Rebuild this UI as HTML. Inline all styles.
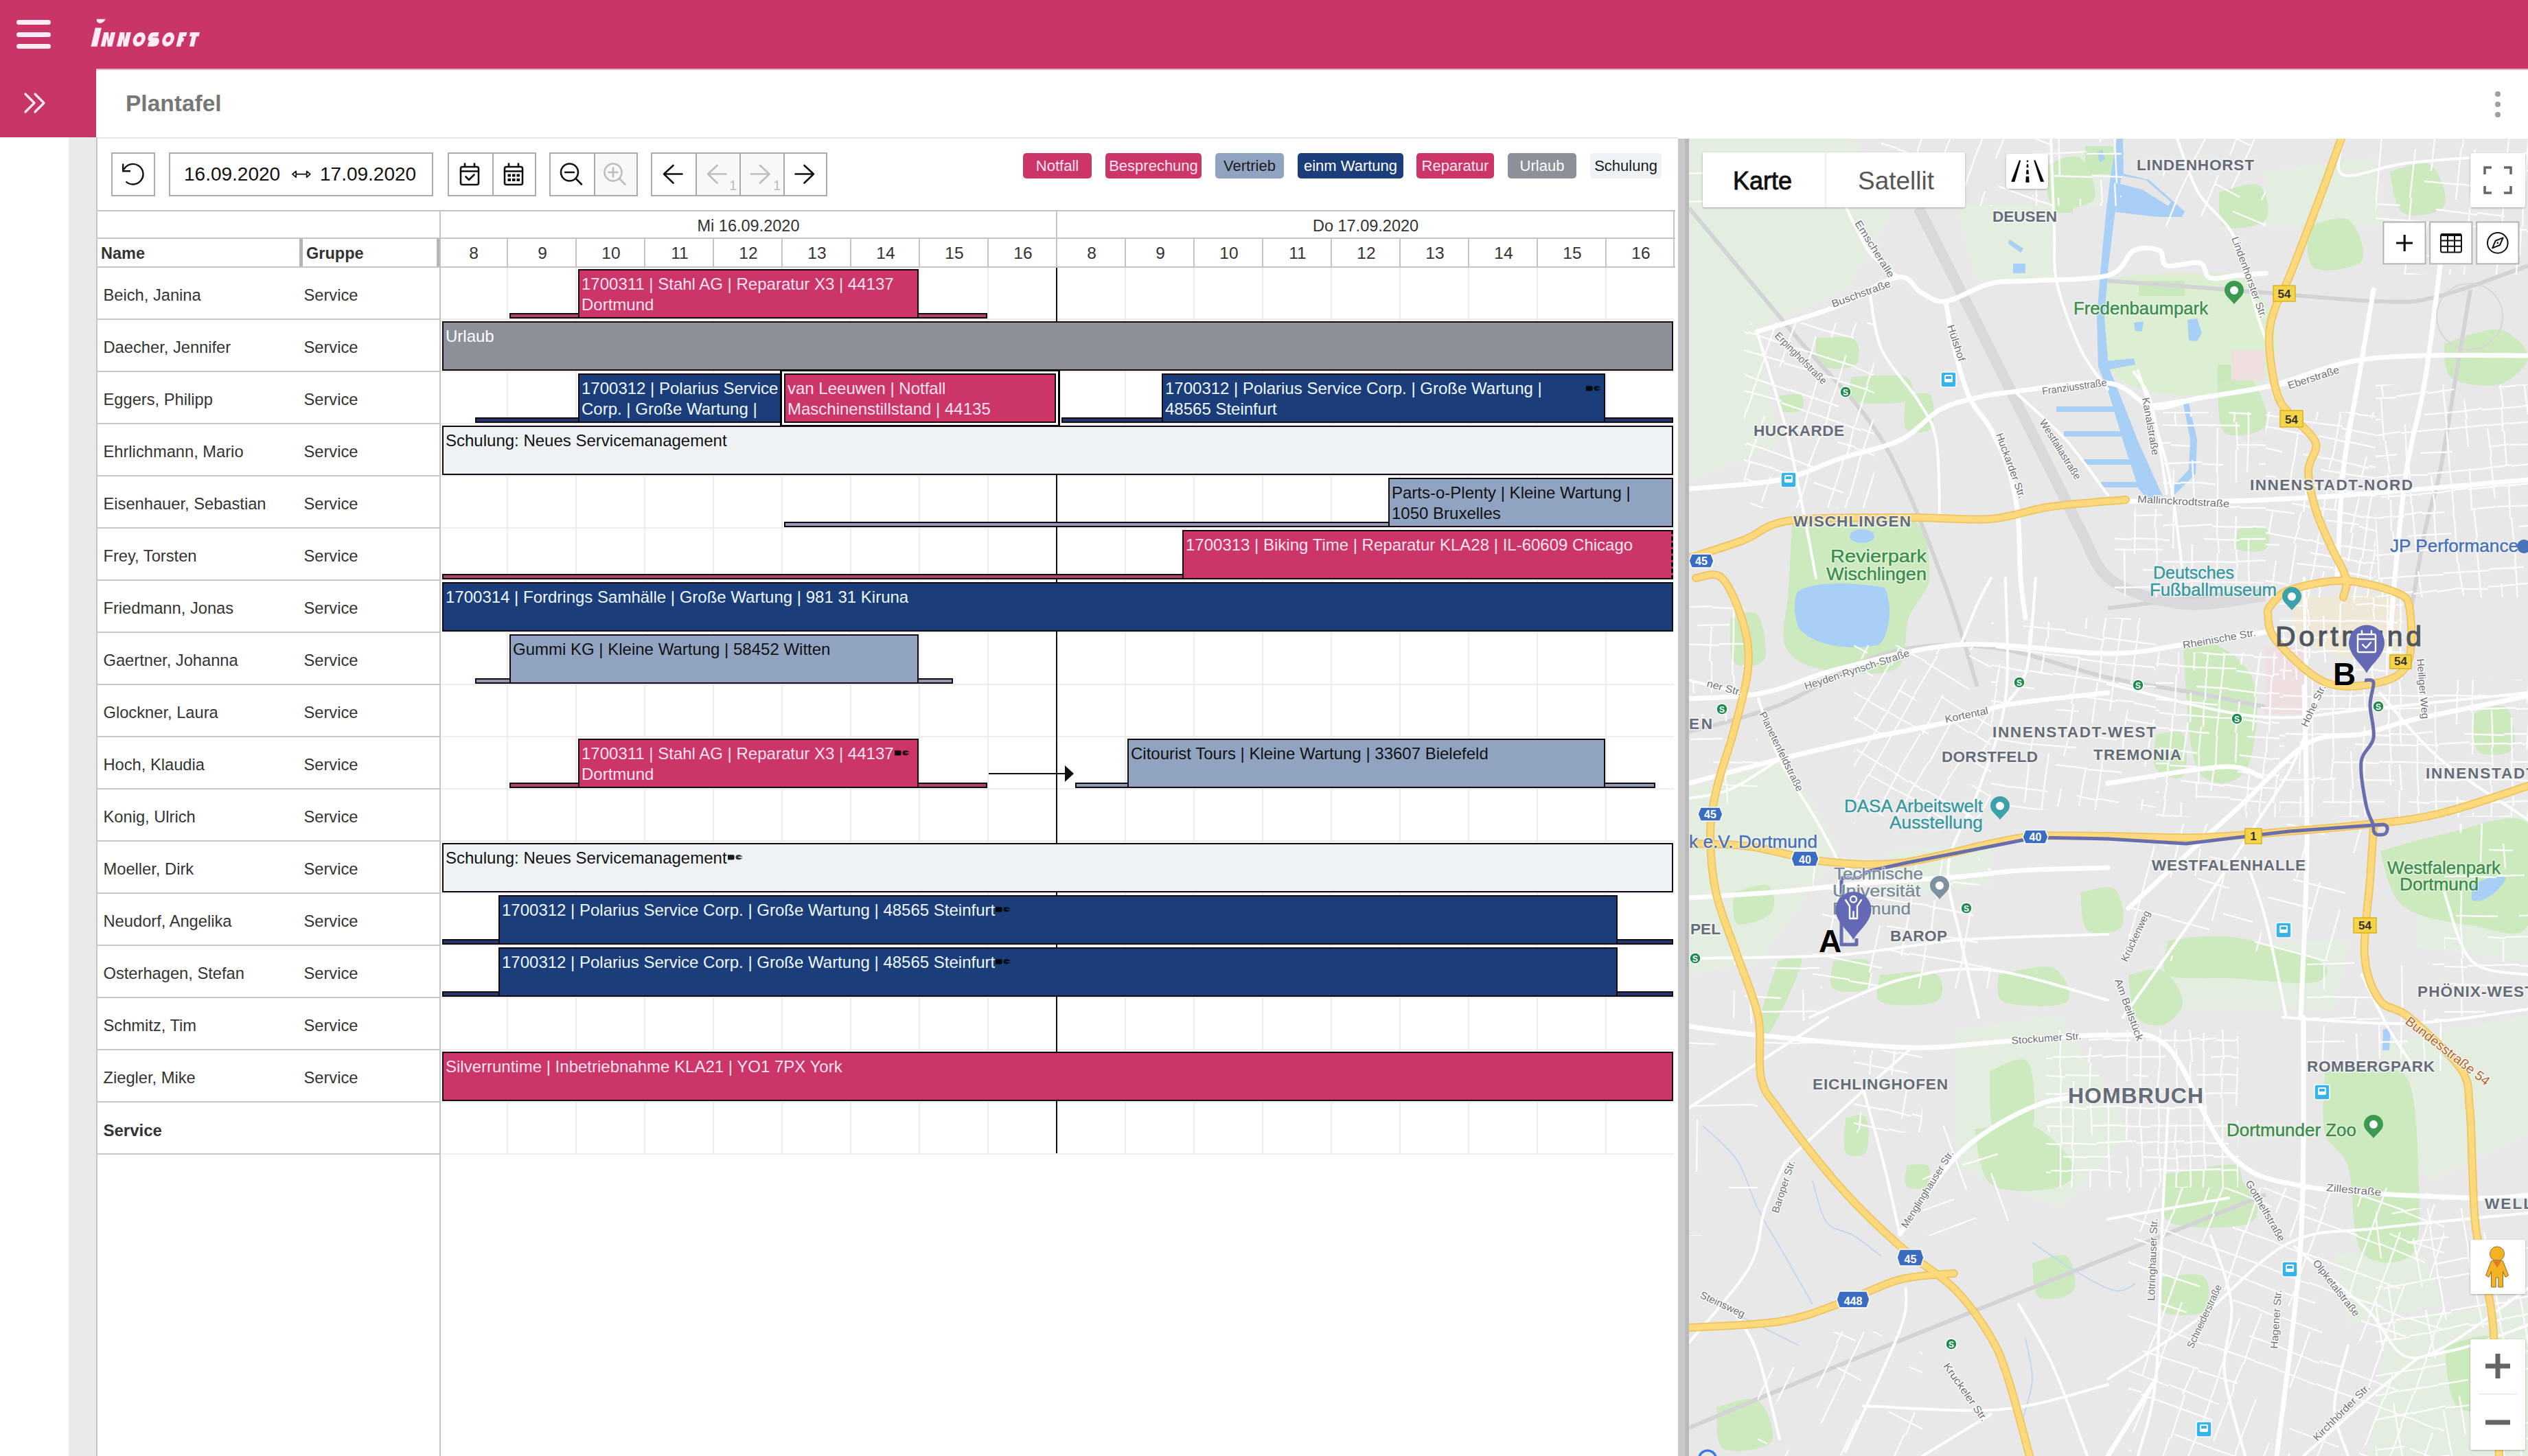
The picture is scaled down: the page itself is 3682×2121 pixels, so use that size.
<!DOCTYPE html><html><head><meta charset="utf-8"><style>
html,body{margin:0;padding:0;}
body{width:3682px;height:2121px;position:relative;overflow:hidden;background:#fff;font-family:"Liberation Sans",sans-serif;}
.t{position:absolute;white-space:nowrap;}
.r{position:absolute;box-sizing:border-box;}
</style></head><body>
<div class="r" style="left:0.0px;top:0.0px;width:3682.0px;height:100.0px;background:#c93567;"></div>
<div class="r" style="left:140.0px;top:100.0px;width:3542.0px;height:2.0px;background:#eab3c6;"></div>
<div class="r" style="left:24.0px;top:29.0px;width:50.0px;height:7.0px;background:#ffeaf6;border-radius:3.5px;"></div>
<div class="r" style="left:24.0px;top:46.5px;width:50.0px;height:7.0px;background:#ffeaf6;border-radius:3.5px;"></div>
<div class="r" style="left:24.0px;top:64.0px;width:50.0px;height:7.0px;background:#ffeaf6;border-radius:3.5px;"></div>
<svg style="position:absolute;left:0;top:0" width="320" height="100" viewBox="0 0 320 100"><g fill="#ffeaf6" fill-rule="evenodd" transform="translate(15.9 0) skewX(-13.3)"><path d="M131.5 27.8 H144.2 A6.35 6.1 0 0 1 131.5 27.8 Z"/><path d="M132.5 40.6 H141.6 V67.7 H132.5 Z"/><path d="M146.7 67.7 L146.7 47.0 L153.29999999999998 47.0 L156.8 58.7 L156.8 47.0 L163.4 47.0 L163.4 67.7 L156.8 67.7 L153.29999999999998 56.0 L153.29999999999998 67.7 Z"/><path d="M169.9 67.7 L169.9 47.0 L176.5 47.0 L179.6 58.7 L179.6 47.0 L186.2 47.0 L186.2 67.7 L179.6 67.7 L176.5 56.0 L176.5 67.7 Z"/><path d="M191.40000000000003 57.35 A8.950000000000003 10.350000000000001 0 1 0 209.3 57.35 A8.950000000000003 10.350000000000001 0 1 0 191.40000000000003 57.35 Z M196.95000000000002 57.35 A3.4 4.2 0 1 0 203.75000000000003 57.35 A3.4 4.2 0 1 0 196.95000000000002 57.35 Z"/><path d="M234.2 57.35 A8.550000000000011 10.350000000000001 0 1 0 251.3 57.35 A8.550000000000011 10.350000000000001 0 1 0 234.2 57.35 Z M239.35 57.35 A3.4 4.2 0 1 0 246.15 57.35 A3.4 4.2 0 1 0 239.35 57.35 Z"/><path d="M256.7 67.7 V47.0 H267.6 V53.0 H263.3 V55.2 H265.5 V60.8 H263.3 V67.7 Z"/><path d="M272.4 47.0 H286.2 V53.0 H282.6 V67.7 H276 V53.0 H272.4 Z"/></g><g transform="translate(15.9 0) skewX(-13.3)"><path d="M226.8 50.2 H219 Q215.9 50.2 215.9 54.5 Q215.9 57.8 219.5 57.8 H223.5 Q227 57.8 227 61.5 Q227 64.4 223 64.4 H214.9" fill="none" stroke="#ffeaf6" stroke-width="6.6" stroke-linejoin="round"/></g></svg>
<div class="r" style="left:0.0px;top:100.0px;width:140.0px;height:100.0px;background:#c93567;"></div>
<svg style="position:absolute;left:30px;top:130px" width="40" height="40" viewBox="0 0 40 40"><path d="M7 7 L20 20 L7 33 M21 7 L34 20 L21 33" fill="none" stroke="#ffeaf6" stroke-width="3.2" stroke-linecap="round" stroke-linejoin="round"/></svg>
<div class="t" style="left:183.0px;top:133.6px;font-size:33.5px;line-height:33.5px;color:#777777;font-weight:700;">Plantafel</div>
<div class="r" style="left:3634px;top:133px;width:8px;height:8px;border-radius:4px;background:#a0a0a0"></div>
<div class="r" style="left:3634px;top:148px;width:8px;height:8px;border-radius:4px;background:#a0a0a0"></div>
<div class="r" style="left:3634px;top:163px;width:8px;height:8px;border-radius:4px;background:#a0a0a0"></div>
<div class="r" style="left:140.0px;top:200.0px;width:2304.0px;height:2.0px;background:#e6e6e6;"></div>
<div class="r" style="left:100.0px;top:200.0px;width:40.0px;height:1921.0px;background:#e9e9e9;"></div>
<div class="r" style="left:140.0px;top:200.0px;width:2.0px;height:1921.0px;background:#c6c6c6;"></div>
<div class="r" style="left:162.0px;top:222.0px;width:64.0px;height:64.0px;background:#fff;border:2px solid #ababab;"></div>
<svg style="position:absolute;left:162px;top:222px" width="64" height="64" viewBox="162 222 64 64"><path d="M180.5 247 A14.8 14.8 0 1 1 183.5 264.5" fill="none" stroke="#111" stroke-width="2.4"/><path d="M179.2 238.5 V249.2 H190" fill="none" stroke="#111" stroke-width="2.4"/></svg>
<div class="r" style="left:246.0px;top:222.0px;width:385.0px;height:64.0px;background:#fff;border:2px solid #ababab;"></div>
<div class="t" style="left:268.0px;top:240.3px;font-size:28px;line-height:28px;color:#111;font-weight:400;">16.09.2020</div>
<svg style="position:absolute;left:420px;top:244px" width="40" height="24" viewBox="420 244 40 24"><path d="M431.2 253.7 H446.7" stroke="#111" stroke-width="1.8" fill="none"/><path d="M431.2 249.3 L426 253.7 L431.2 258.3 Z M446.7 249.3 L451.8 253.7 L446.7 258.3 Z" fill="none" stroke="#111" stroke-width="1.7" stroke-linejoin="round"/></svg>
<div class="t" style="left:466.0px;top:240.3px;font-size:28px;line-height:28px;color:#111;font-weight:400;">17.09.2020</div>
<div class="r" style="left:652.0px;top:222.0px;width:67.0px;height:64.0px;background:#fff;border:2px solid #ababab;"></div>
<div class="r" style="left:717.0px;top:222.0px;width:64.0px;height:64.0px;background:#fff;border:2px solid #ababab;"></div>
<div class="r" style="left:800.0px;top:222.0px;width:67.0px;height:64.0px;background:#fff;border:2px solid #ababab;"></div>
<div class="r" style="left:865.0px;top:222.0px;width:64.0px;height:64.0px;background:#f8f8f8;border:2px solid #ababab;"></div>
<div class="r" style="left:948.0px;top:222.0px;width:67.0px;height:64.0px;background:#fff;border:2px solid #ababab;"></div>
<div class="r" style="left:1013.0px;top:222.0px;width:66.0px;height:64.0px;background:#f8f8f8;border:2px solid #ababab;"></div>
<div class="r" style="left:1077.0px;top:222.0px;width:66.0px;height:64.0px;background:#f8f8f8;border:2px solid #ababab;"></div>
<div class="r" style="left:1141.0px;top:222.0px;width:64.0px;height:64.0px;background:#fff;border:2px solid #ababab;"></div>

<svg style="position:absolute;left:640px;top:222px" width="580" height="64" viewBox="640 222 580 64">
<g fill="none" stroke="#111" stroke-width="2.6" stroke-linecap="round" stroke-linejoin="round">
<rect x="671" y="243" width="26" height="26" rx="2.5"/><path d="M671 249.5 H697 M677 238.5 V243 M691 238.5 V243"/>
<path d="M678.5 257.5 L683 262 L690.5 254.5"/>
<rect x="735" y="243" width="26" height="26" rx="2.5"/><path d="M735 249.5 H761 M741 238.5 V243 M755 238.5 V243"/>
<circle cx="829.5" cy="251" r="12.5"/><path d="M838.5 260 L847 268.5 M823 251 H836"/>
<path d="M993.5 253.5 H967 M980.5 241 L967 253.5 L980.5 266.5"/>
<path d="M1158.5 253.5 H1185 M1171.5 241 L1185 253.5 L1171.5 266.5"/>
</g>
<g fill="#111"><rect x="739.5" y="253.5" width="4.5" height="4"/><rect x="746" y="253.5" width="4.5" height="4"/><rect x="752.5" y="253.5" width="4.5" height="4"/>
<rect x="739.5" y="260" width="4.5" height="4"/><rect x="746" y="260" width="4.5" height="4"/><rect x="752.5" y="260" width="4.5" height="4"/></g>
<g fill="none" stroke="#bdbdbd" stroke-width="2.6" stroke-linecap="round" stroke-linejoin="round">
<circle cx="893" cy="251" r="12.5"/><path d="M902 260 L910.5 268.5 M886.5 251 H899.5 M893 244.5 V257.5"/>
<path d="M1057.5 253.5 H1031 M1044.5 241 L1031 253.5 L1044.5 266.5"/>
<path d="M1094 253.5 H1120.5 M1107 241 L1120.5 253.5 L1107 266.5"/>
</g>
</svg>
<div class="t" style="left:1062.0px;top:260.1px;font-size:20px;line-height:20px;color:#bdbdbd;font-weight:400;">1</div>
<div class="t" style="left:1126.0px;top:260.1px;font-size:20px;line-height:20px;color:#bdbdbd;font-weight:400;">1</div>
<div class="t" style="left:1490px;top:222.5px;width:100px;height:37px;border-radius:5px;background:#cb3567;color:#fde3f1;font-size:22px;line-height:37px;text-align:center;">Notfall</div>
<div class="t" style="left:1610px;top:222.5px;width:140px;height:37px;border-radius:5px;background:#cb3567;color:#fde3f1;font-size:22px;line-height:37px;text-align:center;">Besprechung</div>
<div class="t" style="left:1770px;top:222.5px;width:100px;height:37px;border-radius:5px;background:#90a4c1;color:#1a1a1a;font-size:22px;line-height:37px;text-align:center;">Vertrieb</div>
<div class="t" style="left:1890px;top:222.5px;width:154px;height:37px;border-radius:5px;background:#1b3e7b;color:#fff;font-size:22px;line-height:37px;text-align:center;">einm Wartung</div>
<div class="t" style="left:2063px;top:222.5px;width:113px;height:37px;border-radius:5px;background:#cb3567;color:#fde3f1;font-size:22px;line-height:37px;text-align:center;">Reparatur</div>
<div class="t" style="left:2196px;top:222.5px;width:100px;height:37px;border-radius:5px;background:#8c9099;color:#fff;font-size:22px;line-height:37px;text-align:center;">Urlaub</div>
<div class="t" style="left:2316px;top:222.5px;width:104px;height:37px;border-radius:5px;background:#eff2f5;color:#1a1a1a;font-size:22px;line-height:37px;text-align:center;">Schulung</div>
<div class="r" style="left:142.0px;top:306.0px;width:2298.0px;height:2.0px;background:#c4c4c4;"></div>
<div class="r" style="left:142.0px;top:346.0px;width:2298.0px;height:2.0px;background:#c4c4c4;"></div>
<div class="r" style="left:142.0px;top:388.0px;width:2298.0px;height:2.0px;background:#c4c4c4;"></div>
<div class="r" style="left:436.0px;top:348.0px;width:5.0px;height:40.0px;background:#b5b5b5;"></div>
<div class="r" style="left:636.0px;top:348.0px;width:4.0px;height:40.0px;background:#b5b5b5;"></div>
<div class="r" style="left:640.0px;top:306.0px;width:2.0px;height:1815.0px;background:#c4c4c4;"></div>
<div class="t" style="left:147.0px;top:358.1px;font-size:23.5px;line-height:23.5px;color:#333;font-weight:700;">Name</div>
<div class="t" style="left:446.0px;top:358.1px;font-size:23.5px;line-height:23.5px;color:#333;font-weight:700;">Gruppe</div>
<div class="t" style="left:642px;top:317.6px;width:896px;text-align:center;font-size:23.5px;line-height:23.5px;color:#333">Mi 16.09.2020</div>
<div class="t" style="left:1540px;top:317.6px;width:898px;text-align:center;font-size:23.5px;line-height:23.5px;color:#333">Do 17.09.2020</div>
<div class="r" style="left:1538.0px;top:308.0px;width:2.0px;height:40.0px;background:#c4c4c4;"></div>
<div class="t" style="left:640.0px;top:357.0px;width:100.0px;text-align:center;font-size:24.5px;line-height:24.5px;color:#333">8</div>
<div class="r" style="left:738.0px;top:348.0px;width:2.0px;height:40.0px;background:#c4c4c4;"></div>
<div class="t" style="left:740.0px;top:357.0px;width:100.0px;text-align:center;font-size:24.5px;line-height:24.5px;color:#333">9</div>
<div class="r" style="left:838.0px;top:348.0px;width:2.0px;height:40.0px;background:#c4c4c4;"></div>
<div class="t" style="left:840.0px;top:357.0px;width:100.0px;text-align:center;font-size:24.5px;line-height:24.5px;color:#333">10</div>
<div class="r" style="left:938.0px;top:348.0px;width:2.0px;height:40.0px;background:#c4c4c4;"></div>
<div class="t" style="left:940.0px;top:357.0px;width:100.0px;text-align:center;font-size:24.5px;line-height:24.5px;color:#333">11</div>
<div class="r" style="left:1038.0px;top:348.0px;width:2.0px;height:40.0px;background:#c4c4c4;"></div>
<div class="t" style="left:1040.0px;top:357.0px;width:100.0px;text-align:center;font-size:24.5px;line-height:24.5px;color:#333">12</div>
<div class="r" style="left:1138.0px;top:348.0px;width:2.0px;height:40.0px;background:#c4c4c4;"></div>
<div class="t" style="left:1140.0px;top:357.0px;width:100.0px;text-align:center;font-size:24.5px;line-height:24.5px;color:#333">13</div>
<div class="r" style="left:1238.0px;top:348.0px;width:2.0px;height:40.0px;background:#c4c4c4;"></div>
<div class="t" style="left:1240.0px;top:357.0px;width:100.0px;text-align:center;font-size:24.5px;line-height:24.5px;color:#333">14</div>
<div class="r" style="left:1338.0px;top:348.0px;width:2.0px;height:40.0px;background:#c4c4c4;"></div>
<div class="t" style="left:1340.0px;top:357.0px;width:100.0px;text-align:center;font-size:24.5px;line-height:24.5px;color:#333">15</div>
<div class="r" style="left:1438.0px;top:348.0px;width:2.0px;height:40.0px;background:#c4c4c4;"></div>
<div class="t" style="left:1440.0px;top:357.0px;width:100.0px;text-align:center;font-size:24.5px;line-height:24.5px;color:#333">16</div>
<div class="r" style="left:1538.0px;top:348.0px;width:2.0px;height:40.0px;background:#c4c4c4;"></div>
<div class="t" style="left:1540.0px;top:357.0px;width:100.0px;text-align:center;font-size:24.5px;line-height:24.5px;color:#333">8</div>
<div class="r" style="left:1638.0px;top:348.0px;width:2.0px;height:40.0px;background:#c4c4c4;"></div>
<div class="t" style="left:1640.0px;top:357.0px;width:100.0px;text-align:center;font-size:24.5px;line-height:24.5px;color:#333">9</div>
<div class="r" style="left:1738.0px;top:348.0px;width:2.0px;height:40.0px;background:#c4c4c4;"></div>
<div class="t" style="left:1740.0px;top:357.0px;width:100.0px;text-align:center;font-size:24.5px;line-height:24.5px;color:#333">10</div>
<div class="r" style="left:1838.0px;top:348.0px;width:2.0px;height:40.0px;background:#c4c4c4;"></div>
<div class="t" style="left:1840.0px;top:357.0px;width:100.0px;text-align:center;font-size:24.5px;line-height:24.5px;color:#333">11</div>
<div class="r" style="left:1938.0px;top:348.0px;width:2.0px;height:40.0px;background:#c4c4c4;"></div>
<div class="t" style="left:1940.0px;top:357.0px;width:100.0px;text-align:center;font-size:24.5px;line-height:24.5px;color:#333">12</div>
<div class="r" style="left:2038.0px;top:348.0px;width:2.0px;height:40.0px;background:#c4c4c4;"></div>
<div class="t" style="left:2040.0px;top:357.0px;width:100.0px;text-align:center;font-size:24.5px;line-height:24.5px;color:#333">13</div>
<div class="r" style="left:2138.0px;top:348.0px;width:2.0px;height:40.0px;background:#c4c4c4;"></div>
<div class="t" style="left:2140.0px;top:357.0px;width:100.0px;text-align:center;font-size:24.5px;line-height:24.5px;color:#333">14</div>
<div class="r" style="left:2238.0px;top:348.0px;width:2.0px;height:40.0px;background:#c4c4c4;"></div>
<div class="t" style="left:2240.0px;top:357.0px;width:100.0px;text-align:center;font-size:24.5px;line-height:24.5px;color:#333">15</div>
<div class="r" style="left:2338.0px;top:348.0px;width:2.0px;height:40.0px;background:#c4c4c4;"></div>
<div class="t" style="left:2340.0px;top:357.0px;width:100.0px;text-align:center;font-size:24.5px;line-height:24.5px;color:#333">16</div>
<div class="r" style="left:2437.0px;top:306.0px;width:2.0px;height:84.0px;background:#c4c4c4;"></div>
<div class="r" style="left:738.0px;top:390.0px;width:2.0px;height:1292.0px;background:#ececec;"></div>
<div class="r" style="left:838.0px;top:390.0px;width:2.0px;height:1292.0px;background:#ececec;"></div>
<div class="r" style="left:938.0px;top:390.0px;width:2.0px;height:1292.0px;background:#ececec;"></div>
<div class="r" style="left:1038.0px;top:390.0px;width:2.0px;height:1292.0px;background:#ececec;"></div>
<div class="r" style="left:1138.0px;top:390.0px;width:2.0px;height:1292.0px;background:#ececec;"></div>
<div class="r" style="left:1238.0px;top:390.0px;width:2.0px;height:1292.0px;background:#ececec;"></div>
<div class="r" style="left:1338.0px;top:390.0px;width:2.0px;height:1292.0px;background:#ececec;"></div>
<div class="r" style="left:1438.0px;top:390.0px;width:2.0px;height:1292.0px;background:#ececec;"></div>
<div class="r" style="left:1538.0px;top:390.0px;width:2.0px;height:1292.0px;background:#ececec;"></div>
<div class="r" style="left:1638.0px;top:390.0px;width:2.0px;height:1292.0px;background:#ececec;"></div>
<div class="r" style="left:1738.0px;top:390.0px;width:2.0px;height:1292.0px;background:#ececec;"></div>
<div class="r" style="left:1838.0px;top:390.0px;width:2.0px;height:1292.0px;background:#ececec;"></div>
<div class="r" style="left:1938.0px;top:390.0px;width:2.0px;height:1292.0px;background:#ececec;"></div>
<div class="r" style="left:2038.0px;top:390.0px;width:2.0px;height:1292.0px;background:#ececec;"></div>
<div class="r" style="left:2138.0px;top:390.0px;width:2.0px;height:1292.0px;background:#ececec;"></div>
<div class="r" style="left:2238.0px;top:390.0px;width:2.0px;height:1292.0px;background:#ececec;"></div>
<div class="r" style="left:2338.0px;top:390.0px;width:2.0px;height:1292.0px;background:#ececec;"></div>
<div class="r" style="left:142.0px;top:464.0px;width:498.0px;height:2.0px;background:#c8c8c8;"></div>
<div class="r" style="left:642.0px;top:464.0px;width:1796.0px;height:2.0px;background:#ececec;"></div>
<div class="r" style="left:142.0px;top:540.0px;width:498.0px;height:2.0px;background:#c8c8c8;"></div>
<div class="r" style="left:642.0px;top:540.0px;width:1796.0px;height:2.0px;background:#ececec;"></div>
<div class="r" style="left:142.0px;top:616.0px;width:498.0px;height:2.0px;background:#c8c8c8;"></div>
<div class="r" style="left:642.0px;top:616.0px;width:1796.0px;height:2.0px;background:#ececec;"></div>
<div class="r" style="left:142.0px;top:692.0px;width:498.0px;height:2.0px;background:#c8c8c8;"></div>
<div class="r" style="left:642.0px;top:692.0px;width:1796.0px;height:2.0px;background:#ececec;"></div>
<div class="r" style="left:142.0px;top:768.0px;width:498.0px;height:2.0px;background:#c8c8c8;"></div>
<div class="r" style="left:642.0px;top:768.0px;width:1796.0px;height:2.0px;background:#ececec;"></div>
<div class="r" style="left:142.0px;top:844.0px;width:498.0px;height:2.0px;background:#c8c8c8;"></div>
<div class="r" style="left:642.0px;top:844.0px;width:1796.0px;height:2.0px;background:#ececec;"></div>
<div class="r" style="left:142.0px;top:920.0px;width:498.0px;height:2.0px;background:#c8c8c8;"></div>
<div class="r" style="left:642.0px;top:920.0px;width:1796.0px;height:2.0px;background:#ececec;"></div>
<div class="r" style="left:142.0px;top:996.0px;width:498.0px;height:2.0px;background:#c8c8c8;"></div>
<div class="r" style="left:642.0px;top:996.0px;width:1796.0px;height:2.0px;background:#ececec;"></div>
<div class="r" style="left:142.0px;top:1072.0px;width:498.0px;height:2.0px;background:#c8c8c8;"></div>
<div class="r" style="left:642.0px;top:1072.0px;width:1796.0px;height:2.0px;background:#ececec;"></div>
<div class="r" style="left:142.0px;top:1148.0px;width:498.0px;height:2.0px;background:#c8c8c8;"></div>
<div class="r" style="left:642.0px;top:1148.0px;width:1796.0px;height:2.0px;background:#ececec;"></div>
<div class="r" style="left:142.0px;top:1224.0px;width:498.0px;height:2.0px;background:#c8c8c8;"></div>
<div class="r" style="left:642.0px;top:1224.0px;width:1796.0px;height:2.0px;background:#ececec;"></div>
<div class="r" style="left:142.0px;top:1300.0px;width:498.0px;height:2.0px;background:#c8c8c8;"></div>
<div class="r" style="left:642.0px;top:1300.0px;width:1796.0px;height:2.0px;background:#ececec;"></div>
<div class="r" style="left:142.0px;top:1376.0px;width:498.0px;height:2.0px;background:#c8c8c8;"></div>
<div class="r" style="left:642.0px;top:1376.0px;width:1796.0px;height:2.0px;background:#ececec;"></div>
<div class="r" style="left:142.0px;top:1452.0px;width:498.0px;height:2.0px;background:#c8c8c8;"></div>
<div class="r" style="left:642.0px;top:1452.0px;width:1796.0px;height:2.0px;background:#ececec;"></div>
<div class="r" style="left:142.0px;top:1528.0px;width:498.0px;height:2.0px;background:#c8c8c8;"></div>
<div class="r" style="left:642.0px;top:1528.0px;width:1796.0px;height:2.0px;background:#ececec;"></div>
<div class="r" style="left:142.0px;top:1604.0px;width:498.0px;height:2.0px;background:#c8c8c8;"></div>
<div class="r" style="left:642.0px;top:1604.0px;width:1796.0px;height:2.0px;background:#ececec;"></div>
<div class="r" style="left:142.0px;top:1680.0px;width:498.0px;height:2.0px;background:#c8c8c8;"></div>
<div class="r" style="left:642.0px;top:1680.0px;width:1796.0px;height:2.0px;background:#ececec;"></div>
<div class="r" style="left:1538.0px;top:390.0px;width:2.0px;height:1290.0px;background:#111;"></div>
<div class="t" style="left:150.5px;top:418.9px;font-size:23.7px;line-height:23.7px;color:#333;font-weight:400;">Beich, Janina</div>
<div class="t" style="left:442.5px;top:418.9px;font-size:23.7px;line-height:23.7px;color:#333;font-weight:400;">Service</div>
<div class="t" style="left:150.5px;top:494.9px;font-size:23.7px;line-height:23.7px;color:#333;font-weight:400;">Daecher, Jennifer</div>
<div class="t" style="left:442.5px;top:494.9px;font-size:23.7px;line-height:23.7px;color:#333;font-weight:400;">Service</div>
<div class="t" style="left:150.5px;top:570.9px;font-size:23.7px;line-height:23.7px;color:#333;font-weight:400;">Eggers, Philipp</div>
<div class="t" style="left:442.5px;top:570.9px;font-size:23.7px;line-height:23.7px;color:#333;font-weight:400;">Service</div>
<div class="t" style="left:150.5px;top:646.9px;font-size:23.7px;line-height:23.7px;color:#333;font-weight:400;">Ehrlichmann, Mario</div>
<div class="t" style="left:442.5px;top:646.9px;font-size:23.7px;line-height:23.7px;color:#333;font-weight:400;">Service</div>
<div class="t" style="left:150.5px;top:722.9px;font-size:23.7px;line-height:23.7px;color:#333;font-weight:400;">Eisenhauer, Sebastian</div>
<div class="t" style="left:442.5px;top:722.9px;font-size:23.7px;line-height:23.7px;color:#333;font-weight:400;">Service</div>
<div class="t" style="left:150.5px;top:798.9px;font-size:23.7px;line-height:23.7px;color:#333;font-weight:400;">Frey, Torsten</div>
<div class="t" style="left:442.5px;top:798.9px;font-size:23.7px;line-height:23.7px;color:#333;font-weight:400;">Service</div>
<div class="t" style="left:150.5px;top:874.9px;font-size:23.7px;line-height:23.7px;color:#333;font-weight:400;">Friedmann, Jonas</div>
<div class="t" style="left:442.5px;top:874.9px;font-size:23.7px;line-height:23.7px;color:#333;font-weight:400;">Service</div>
<div class="t" style="left:150.5px;top:950.9px;font-size:23.7px;line-height:23.7px;color:#333;font-weight:400;">Gaertner, Johanna</div>
<div class="t" style="left:442.5px;top:950.9px;font-size:23.7px;line-height:23.7px;color:#333;font-weight:400;">Service</div>
<div class="t" style="left:150.5px;top:1026.9px;font-size:23.7px;line-height:23.7px;color:#333;font-weight:400;">Glockner, Laura</div>
<div class="t" style="left:442.5px;top:1026.9px;font-size:23.7px;line-height:23.7px;color:#333;font-weight:400;">Service</div>
<div class="t" style="left:150.5px;top:1102.9px;font-size:23.7px;line-height:23.7px;color:#333;font-weight:400;">Hoch, Klaudia</div>
<div class="t" style="left:442.5px;top:1102.9px;font-size:23.7px;line-height:23.7px;color:#333;font-weight:400;">Service</div>
<div class="t" style="left:150.5px;top:1178.9px;font-size:23.7px;line-height:23.7px;color:#333;font-weight:400;">Konig, Ulrich</div>
<div class="t" style="left:442.5px;top:1178.9px;font-size:23.7px;line-height:23.7px;color:#333;font-weight:400;">Service</div>
<div class="t" style="left:150.5px;top:1254.9px;font-size:23.7px;line-height:23.7px;color:#333;font-weight:400;">Moeller, Dirk</div>
<div class="t" style="left:442.5px;top:1254.9px;font-size:23.7px;line-height:23.7px;color:#333;font-weight:400;">Service</div>
<div class="t" style="left:150.5px;top:1330.9px;font-size:23.7px;line-height:23.7px;color:#333;font-weight:400;">Neudorf, Angelika</div>
<div class="t" style="left:442.5px;top:1330.9px;font-size:23.7px;line-height:23.7px;color:#333;font-weight:400;">Service</div>
<div class="t" style="left:150.5px;top:1406.9px;font-size:23.7px;line-height:23.7px;color:#333;font-weight:400;">Osterhagen, Stefan</div>
<div class="t" style="left:442.5px;top:1406.9px;font-size:23.7px;line-height:23.7px;color:#333;font-weight:400;">Service</div>
<div class="t" style="left:150.5px;top:1482.9px;font-size:23.7px;line-height:23.7px;color:#333;font-weight:400;">Schmitz, Tim</div>
<div class="t" style="left:442.5px;top:1482.9px;font-size:23.7px;line-height:23.7px;color:#333;font-weight:400;">Service</div>
<div class="t" style="left:150.5px;top:1558.9px;font-size:23.7px;line-height:23.7px;color:#333;font-weight:400;">Ziegler, Mike</div>
<div class="t" style="left:442.5px;top:1558.9px;font-size:23.7px;line-height:23.7px;color:#333;font-weight:400;">Service</div>
<div class="t" style="left:150.5px;top:1634.7px;font-size:24px;line-height:24px;color:#333;font-weight:700;">Service</div>
<div class="r" style="left:742.0px;top:456px;width:696.0px;height:8px;background:#a84865;border:2px solid #160a10;"></div>
<div class="r" style="left:842.0px;top:392px;width:496.0px;height:72px;background:#cb3567;border:2px solid #160a10;overflow:hidden;">
<div class="t" style="left:3px;top:8.2px;font-size:24px;line-height:24px;color:#fde3f1">1700311 | Stahl AG | Reparatur X3 | 44137</div>
<div class="t" style="left:3px;top:37.9px;font-size:24px;line-height:24px;color:#fde3f1">Dortmund</div>
</div>
<div class="r" style="left:644.0px;top:468px;width:1793.0px;height:72px;background:#8c9099;border:2px solid #160a10;overflow:hidden;">
<div class="t" style="left:3px;top:8.2px;font-size:24px;line-height:24px;color:#fff">Urlaub</div>
</div>
<div class="r" style="left:692.0px;top:608px;width:446.0px;height:8px;background:#1f3a6b;border:2px solid #160a10;"></div>
<div class="r" style="left:842.0px;top:544px;width:296.0px;height:72px;background:#1b3e7b;border:2px solid #160a10;overflow:hidden;">
<div class="t" style="left:3px;top:8.2px;font-size:24px;line-height:24px;color:#f0f8ff">1700312 | Polarius Service</div>
<div class="t" style="left:3px;top:37.9px;font-size:24px;line-height:24px;color:#f0f8ff">Corp. | Große Wartung |</div>
</div>
<div class="r" style="left:1546.0px;top:608px;width:891.0px;height:8px;background:#1f3a6b;border:2px solid #160a10;"></div>
<div class="r" style="left:1692.0px;top:544px;width:646.0px;height:72px;background:#1b3e7b;border:2px solid #160a10;overflow:hidden;">
<div class="t" style="left:3px;top:8.2px;font-size:24px;line-height:24px;color:#f0f8ff">1700312 | Polarius Service Corp. | Große Wartung |</div>
<div class="t" style="left:3px;top:37.9px;font-size:24px;line-height:24px;color:#f0f8ff">48565 Steinfurt</div>
</div>
<div style="position:absolute;left:2309px;top:561.5px;line-height:0"><svg width="23" height="8" viewBox="0 0 23 8" style="vertical-align:4.8px;margin-left:1px"><path d="M0 0.2 H8 Q9.6 0.2 9.6 2 V5.6 Q9.6 7.4 8 7.4 H0 Z" fill="#000" fill-opacity="0.9"/><path d="M11.3 3.7 Q11.8 0.3 15 0.3 H17.5 L21.8 2.6 L17.6 3.1 Q16.2 2.4 15.3 3.7 Q16.2 5 17.6 4.4 L21.8 5 L17.5 7.2 H15 Q11.8 7.2 11.3 3.7 Z" fill="#000" fill-opacity="0.78"/></svg></div>
<div class="r" style="left:1136px;top:538px;width:408px;height:84px;border:3.5px solid #000;background:#fff"></div>
<div class="r" style="left:1142.0px;top:544px;width:396.0px;height:72px;background:#cb3567;border:2px solid #160a10;overflow:hidden;">
<div class="t" style="left:3px;top:8.2px;font-size:24px;line-height:24px;color:#fde3f1">van Leeuwen | Notfall</div>
<div class="t" style="left:3px;top:37.9px;font-size:24px;line-height:24px;color:#fde3f1">Maschinenstillstand | 44135</div>
</div>
<div class="r" style="left:644.0px;top:620px;width:1793.0px;height:72px;background:#eff2f5;border:2px solid #160a10;overflow:hidden;">
<div class="t" style="left:3px;top:8.2px;font-size:24px;line-height:24px;color:#111">Schulung: Neues Servicemanagement</div>
</div>
<div class="r" style="left:1142.0px;top:760px;width:1295.0px;height:8px;background:#8d9bb4;border:2px solid #160a10;"></div>
<div class="r" style="left:2022.0px;top:696px;width:415.0px;height:72px;background:#90a4c1;border:2px solid #160a10;overflow:hidden;">
<div class="t" style="left:3px;top:8.2px;font-size:24px;line-height:24px;color:#111">Parts-o-Plenty | Kleine Wartung |</div>
<div class="t" style="left:3px;top:37.9px;font-size:24px;line-height:24px;color:#111">1050 Bruxelles</div>
</div>
<div class="r" style="left:644.0px;top:836px;width:1144.0px;height:8px;background:#a84865;border:2px solid #160a10;"></div>
<div class="r" style="left:1722.0px;top:772px;width:715.0px;height:72px;background:#cb3567;border:2px solid #160a10;overflow:hidden;border-right:3px dashed #000;">
<div class="t" style="left:3px;top:8.2px;font-size:24px;line-height:24px;color:#fde3f1">1700313 | Biking Time | Reparatur KLA28 | IL-60609 Chicago</div>
</div>
<div class="r" style="left:644.0px;top:848px;width:1793.0px;height:72px;background:#1b3e7b;border:2px solid #160a10;overflow:hidden;">
<div class="t" style="left:3px;top:8.2px;font-size:24px;line-height:24px;color:#f0f8ff">1700314 | Fordrings Samhälle | Große Wartung | 981 31 Kiruna</div>
</div>
<div class="r" style="left:692.0px;top:988px;width:696.0px;height:8px;background:#8d9bb4;border:2px solid #160a10;"></div>
<div class="r" style="left:742.0px;top:924px;width:596.0px;height:72px;background:#90a4c1;border:2px solid #160a10;overflow:hidden;">
<div class="t" style="left:3px;top:8.2px;font-size:24px;line-height:24px;color:#111">Gummi KG | Kleine Wartung | 58452 Witten</div>
</div>
<div class="r" style="left:742.0px;top:1140px;width:696.0px;height:8px;background:#a84865;border:2px solid #160a10;"></div>
<div class="r" style="left:842.0px;top:1076px;width:496.0px;height:72px;background:#cb3567;border:2px solid #160a10;overflow:hidden;">
<div class="t" style="left:3px;top:8.2px;font-size:24px;line-height:24px;color:#fde3f1">1700311 | Stahl AG | Reparatur X3 | 44137<svg width="23" height="8" viewBox="0 0 23 8" style="vertical-align:4.8px;margin-left:1px"><path d="M0 0.2 H8 Q9.6 0.2 9.6 2 V5.6 Q9.6 7.4 8 7.4 H0 Z" fill="#000" fill-opacity="0.9"/><path d="M11.3 3.7 Q11.8 0.3 15 0.3 H17.5 L21.8 2.6 L17.6 3.1 Q16.2 2.4 15.3 3.7 Q16.2 5 17.6 4.4 L21.8 5 L17.5 7.2 H15 Q11.8 7.2 11.3 3.7 Z" fill="#000" fill-opacity="0.78"/></svg></div>
<div class="t" style="left:3px;top:37.9px;font-size:24px;line-height:24px;color:#fde3f1">Dortmund</div>
</div>
<div class="r" style="left:1566.0px;top:1140px;width:845.0px;height:8px;background:#8d9bb4;border:2px solid #160a10;"></div>
<div class="r" style="left:1642.0px;top:1076px;width:696.0px;height:72px;background:#90a4c1;border:2px solid #160a10;overflow:hidden;">
<div class="t" style="left:3px;top:8.2px;font-size:24px;line-height:24px;color:#111">Citourist Tours | Kleine Wartung | 33607 Bielefeld</div>
</div>
<div class="r" style="left:1440.0px;top:1126.0px;width:116.0px;height:2.0px;background:#111;"></div>
<svg style="position:absolute;left:1550px;top:1114px" width="16" height="26"><path d="M1 1 L14 13 L1 25 Z" fill="#111"/></svg>
<div class="r" style="left:644.0px;top:1228px;width:1793.0px;height:72px;background:#eff2f5;border:2px solid #160a10;overflow:hidden;">
<div class="t" style="left:3px;top:8.2px;font-size:24px;line-height:24px;color:#111">Schulung: Neues Servicemanagement<svg width="23" height="8" viewBox="0 0 23 8" style="vertical-align:4.8px;margin-left:1px"><path d="M0 0.2 H8 Q9.6 0.2 9.6 2 V5.6 Q9.6 7.4 8 7.4 H0 Z" fill="#000" fill-opacity="0.9"/><path d="M11.3 3.7 Q11.8 0.3 15 0.3 H17.5 L21.8 2.6 L17.6 3.1 Q16.2 2.4 15.3 3.7 Q16.2 5 17.6 4.4 L21.8 5 L17.5 7.2 H15 Q11.8 7.2 11.3 3.7 Z" fill="#000" fill-opacity="0.78"/></svg></div>
</div>
<div class="r" style="left:644.0px;top:1368px;width:1793.0px;height:8px;background:#1f3a6b;border:2px solid #160a10;"></div>
<div class="r" style="left:726.0px;top:1304px;width:1630.0px;height:72px;background:#1b3e7b;border:2px solid #160a10;overflow:hidden;">
<div class="t" style="left:3px;top:8.2px;font-size:24px;line-height:24px;color:#f0f8ff">1700312 | Polarius Service Corp. | Große Wartung | 48565 Steinfurt<svg width="23" height="8" viewBox="0 0 23 8" style="vertical-align:4.8px;margin-left:1px"><path d="M0 0.2 H8 Q9.6 0.2 9.6 2 V5.6 Q9.6 7.4 8 7.4 H0 Z" fill="#000" fill-opacity="0.9"/><path d="M11.3 3.7 Q11.8 0.3 15 0.3 H17.5 L21.8 2.6 L17.6 3.1 Q16.2 2.4 15.3 3.7 Q16.2 5 17.6 4.4 L21.8 5 L17.5 7.2 H15 Q11.8 7.2 11.3 3.7 Z" fill="#000" fill-opacity="0.78"/></svg></div>
</div>
<div class="r" style="left:644.0px;top:1444px;width:1793.0px;height:8px;background:#1f3a6b;border:2px solid #160a10;"></div>
<div class="r" style="left:726.0px;top:1380px;width:1630.0px;height:72px;background:#1b3e7b;border:2px solid #160a10;overflow:hidden;">
<div class="t" style="left:3px;top:8.2px;font-size:24px;line-height:24px;color:#f0f8ff">1700312 | Polarius Service Corp. | Große Wartung | 48565 Steinfurt<svg width="23" height="8" viewBox="0 0 23 8" style="vertical-align:4.8px;margin-left:1px"><path d="M0 0.2 H8 Q9.6 0.2 9.6 2 V5.6 Q9.6 7.4 8 7.4 H0 Z" fill="#000" fill-opacity="0.9"/><path d="M11.3 3.7 Q11.8 0.3 15 0.3 H17.5 L21.8 2.6 L17.6 3.1 Q16.2 2.4 15.3 3.7 Q16.2 5 17.6 4.4 L21.8 5 L17.5 7.2 H15 Q11.8 7.2 11.3 3.7 Z" fill="#000" fill-opacity="0.78"/></svg></div>
</div>
<div class="r" style="left:644.0px;top:1532px;width:1793.0px;height:72px;background:#cb3567;border:2px solid #160a10;overflow:hidden;">
<div class="t" style="left:3px;top:8.2px;font-size:24px;line-height:24px;color:#fde3f1">Silverruntime | Inbetriebnahme KLA21 | YO1 7PX York</div>
</div>
<div class="r" style="left:2444.0px;top:202.0px;width:10.0px;height:1919.0px;background:#c9c9c9;"></div>
<div class="r" style="left:2454.0px;top:202.0px;width:6.0px;height:1919.0px;background:#b9b9b9;"></div>
<svg style="position:absolute;left:2460px;top:202px" width="1222" height="1919" viewBox="2460 202 1222 1919">
<rect x="2460" y="202" width="1222" height="1919" fill="#e8e8e8"/>
<path d="M2460.0 202.0 L2700.0 202.0 L2760.0 300.0 L2690.0 420.0 L2560.0 480.0 L2590.0 650.0 L2460.0 700.0 Z" fill="#e3eee0"/>
<path d="M2460.0 1150.0 L2600.0 1100.0 L2680.0 1240.0 L2560.0 1400.0 L2460.0 1420.0 Z" fill="#e3eee0"/>
<path d="M2850.0 1500.0 L3000.0 1480.0 L3100.0 1650.0 L3000.0 1760.0 L2850.0 1700.0 Z" fill="#e3eee0"/>
<path d="M3150.0 1380.0 L3420.0 1370.0 L3400.0 1470.0 L3150.0 1470.0 Z" fill="#e3eee0"/>
<path d="M3520.0 1230.0 L3682.0 1180.0 L3682.0 1400.0 L3520.0 1380.0 Z" fill="#e3eee0"/>
<path d="M3470.0 1520.0 L3682.0 1480.0 L3682.0 1650.0 L3540.0 1720.0 L3470.0 1620.0 Z" fill="#e3eee0"/>
<path d="M3480.0 1920.0 L3682.0 1900.0 L3682.0 2121.0 L3450.0 2121.0 Z" fill="#e3eee0"/>
<path d="M2750.0 1240.0 L2900.0 1230.0 L2900.0 1290.0 L2760.0 1300.0 Z" fill="#e3eee0"/>
<path d="M2850.0 300.0 L2990.0 300.0 L2990.0 410.0 L2880.0 410.0 Z" fill="#e3eee0"/>
<path d="M3020.0 220.0 L3060.0 215.0 L3060.0 300.0 L3020.0 300.0 Z" fill="#e3eee0"/>
<path d="M3300.0 250.0 L3460.0 230.0 L3470.0 330.0 L3300.0 330.0 Z" fill="#e3eee0"/>
<path d="M2980.0 1560.0 L3060.0 1560.0 L3070.0 1640.0 L2990.0 1640.0 Z" fill="#e3eee0"/>
<path d="M3400.0 1830.0 L3520.0 1810.0 L3560.0 1900.0 L3420.0 1930.0 Z" fill="#e3eee0"/>
<path d="M3063.0 410.0 C3072.5 408.3 3097.2 402.0 3120.0 400.0 C3142.8 398.0 3176.3 397.7 3200.0 398.0 C3223.7 398.3 3245.3 395.0 3262.0 402.0 C3278.7 409.0 3291.0 423.7 3300.0 440.0 C3309.0 456.3 3317.7 480.0 3316.0 500.0 C3314.3 520.0 3304.3 547.5 3290.0 560.0 C3275.7 572.5 3256.7 573.3 3230.0 575.0 C3203.3 576.7 3155.8 575.8 3130.0 570.0 C3104.2 564.2 3086.2 556.7 3075.0 540.0 C3063.8 523.3 3065.0 491.7 3063.0 470.0 C3061.0 448.3 3063.0 420.0 3063.0 410.0" fill="#dcefd2"/>
<path d="M3115.0 409.0 L3182.0 409.0 L3182.0 431.0 L3115.0 431.0 Z" fill="#c9e8bb"/>
<path d="M3230.0 531.0 L3256.0 531.0 L3256.0 571.0 L3230.0 571.0 Z" fill="#c9e8bb"/>
<path d="M3037.0 213.0 L3078.0 213.0 L3078.0 254.0 L3037.0 254.0 Z" fill="#c9e8bb"/>
<path d="M2993.0 280.0 L3019.0 280.0 L3019.0 310.0 L2993.0 310.0 Z" fill="#c9e8bb"/>
<path d="M2610.0 760.0 C2625.0 759.3 2670.0 756.0 2700.0 756.0 C2730.0 756.0 2771.7 745.7 2790.0 760.0 C2808.3 774.3 2811.7 818.7 2810.0 842.0 C2808.3 865.3 2788.3 877.8 2780.0 900.0 C2771.7 922.2 2781.7 962.7 2760.0 975.0 C2738.3 987.3 2676.7 979.8 2650.0 974.0 C2623.3 968.2 2607.5 959.0 2600.0 940.0 C2592.5 921.0 2603.3 890.0 2605.0 860.0 C2606.7 830.0 2609.2 776.7 2610.0 760.0" fill="#cdeabf"/>
<path d="M2645.0 492.0 C2654.2 492.3 2690.5 487.3 2700.0 494.0 C2709.5 500.7 2710.3 525.7 2702.0 532.0 C2693.7 538.3 2659.5 538.7 2650.0 532.0 C2640.5 525.3 2645.8 498.7 2645.0 492.0" fill="#cdeabf"/>
<path d="M2697.0 549.0 C2710.2 549.0 2762.8 543.2 2776.0 549.0 C2789.2 554.8 2789.2 578.2 2776.0 584.0 C2762.8 589.8 2710.2 589.8 2697.0 584.0 C2683.8 578.2 2697.0 554.8 2697.0 549.0" fill="#cdeabf"/>
<path d="M2776.0 576.0 C2782.0 576.0 2806.0 568.0 2812.0 576.0 C2818.0 584.0 2818.0 616.0 2812.0 624.0 C2806.0 632.0 2782.0 632.0 2776.0 624.0 C2770.0 616.0 2776.0 584.0 2776.0 576.0" fill="#cdeabf"/>
<path d="M2592.0 576.0 C2597.2 576.0 2617.8 572.3 2623.0 576.0 C2628.2 579.7 2628.2 594.3 2623.0 598.0 C2617.8 601.7 2597.2 601.7 2592.0 598.0 C2586.8 594.3 2592.0 579.7 2592.0 576.0" fill="#cdeabf"/>
<path d="M3386.0 1561.0 C3400.0 1560.2 3449.3 1552.8 3470.0 1556.0 C3490.7 1559.2 3501.3 1556.0 3510.0 1580.0 C3518.7 1604.0 3521.2 1659.3 3522.0 1700.0 C3522.8 1740.7 3528.7 1803.3 3515.0 1824.0 C3501.3 1844.7 3455.8 1844.7 3440.0 1824.0 C3424.2 1803.3 3429.0 1729.0 3420.0 1700.0 C3411.0 1671.0 3391.7 1673.2 3386.0 1650.0 C3380.3 1626.8 3386.0 1575.8 3386.0 1561.0" fill="#cdeabf"/>
<path d="M3466.0 1240.0 C3481.7 1235.8 3524.0 1221.7 3560.0 1215.0 C3596.0 1208.3 3661.7 1177.8 3682.0 1200.0 C3702.3 1222.2 3695.7 1323.3 3682.0 1348.0 C3668.3 1372.7 3630.3 1352.7 3600.0 1348.0 C3569.7 1343.3 3522.3 1338.0 3500.0 1320.0 C3477.7 1302.0 3471.7 1253.3 3466.0 1240.0" fill="#cdeabf"/>
<path d="M3158.0 1370.0 C3173.3 1369.2 3213.3 1360.0 3250.0 1365.0 C3286.7 1370.0 3358.0 1389.0 3378.0 1400.0 C3398.0 1411.0 3391.3 1426.8 3370.0 1431.0 C3348.7 1435.2 3285.3 1426.8 3250.0 1425.0 C3214.7 1423.2 3173.3 1429.2 3158.0 1420.0 C3142.7 1410.8 3158.0 1378.3 3158.0 1370.0" fill="#cdeabf"/>
<path d="M3232.0 280.0 C3241.7 278.3 3278.7 263.3 3290.0 270.0 C3301.3 276.7 3308.3 310.0 3300.0 320.0 C3291.7 330.0 3251.3 336.7 3240.0 330.0 C3228.7 323.3 3233.3 288.3 3232.0 280.0" fill="#cdeabf"/>
<path d="M3200.0 950.0 C3206.7 950.0 3233.3 936.7 3240.0 950.0 C3246.7 963.3 3246.7 1016.7 3240.0 1030.0 C3233.3 1043.3 3206.7 1043.3 3200.0 1030.0 C3193.3 1016.7 3200.0 963.3 3200.0 950.0" fill="#cdeabf"/>
<path d="M2525.0 1300.0 C2533.3 1298.3 2565.8 1285.0 2575.0 1290.0 C2584.2 1295.0 2587.5 1320.8 2580.0 1330.0 C2572.5 1339.2 2539.2 1350.0 2530.0 1345.0 C2520.8 1340.0 2525.8 1307.5 2525.0 1300.0" fill="#cdeabf"/>
<path d="M2670.0 1400.0 C2678.3 1400.0 2711.7 1393.3 2720.0 1400.0 C2728.3 1406.7 2728.3 1433.3 2720.0 1440.0 C2711.7 1446.7 2678.3 1446.7 2670.0 1440.0 C2661.7 1433.3 2670.0 1406.7 2670.0 1400.0" fill="#cdeabf"/>
<path d="M2910.0 1420.0 C2923.3 1418.3 2973.3 1403.3 2990.0 1410.0 C3006.7 1416.7 3021.7 1451.7 3010.0 1460.0 C2998.3 1468.3 2936.7 1466.7 2920.0 1460.0 C2903.3 1453.3 2911.7 1426.7 2910.0 1420.0" fill="#cdeabf"/>
<path d="M3140.0 1070.0 C3146.7 1070.0 3173.3 1060.0 3180.0 1070.0 C3186.7 1080.0 3186.7 1121.7 3180.0 1130.0 C3173.3 1138.3 3146.7 1130.0 3140.0 1120.0 C3133.3 1110.0 3140.0 1078.3 3140.0 1070.0" fill="#cdeabf"/>
<path d="M2898.0 1560.0 C2906.7 1557.3 2939.2 1537.3 2950.0 1544.0 C2960.8 1550.7 2962.2 1582.7 2963.0 1600.0 C2963.8 1617.3 2964.7 1639.7 2955.0 1648.0 C2945.3 1656.3 2914.5 1664.7 2905.0 1650.0 C2895.5 1635.3 2899.2 1575.0 2898.0 1560.0" fill="#cdeabf"/>
<path d="M2688.0 1628.0 C2693.0 1628.0 2713.0 1619.7 2718.0 1628.0 C2723.0 1636.3 2723.0 1669.7 2718.0 1678.0 C2713.0 1686.3 2693.0 1686.3 2688.0 1678.0 C2683.0 1669.7 2688.0 1636.3 2688.0 1628.0" fill="#cdeabf"/>
<path d="M2777.0 1698.0 C2782.2 1698.0 2802.8 1693.0 2808.0 1698.0 C2813.2 1703.0 2813.2 1723.0 2808.0 1728.0 C2802.8 1733.0 2782.2 1733.0 2777.0 1728.0 C2771.8 1723.0 2777.0 1703.0 2777.0 1698.0" fill="#cdeabf"/>
<path d="M3215.0 1700.0 C3222.5 1700.0 3252.5 1691.7 3260.0 1700.0 C3267.5 1708.3 3267.5 1741.7 3260.0 1750.0 C3252.5 1758.3 3222.5 1758.3 3215.0 1750.0 C3207.5 1741.7 3215.0 1708.3 3215.0 1700.0" fill="#cdeabf"/>
<path d="M3150.0 1860.0 C3160.0 1860.0 3200.0 1851.7 3210.0 1860.0 C3220.0 1868.3 3220.0 1901.7 3210.0 1910.0 C3200.0 1918.3 3160.0 1918.3 3150.0 1910.0 C3140.0 1901.7 3150.0 1868.3 3150.0 1860.0" fill="#cdeabf"/>
<path d="M2998.0 280.0 C3000.7 280.0 3011.3 276.2 3014.0 280.0 C3016.7 283.8 3016.7 299.2 3014.0 303.0 C3011.3 306.8 3000.7 306.8 2998.0 303.0 C2995.3 299.2 2998.0 283.8 2998.0 280.0" fill="#cdeabf"/>
<path d="M3480.0 250.0 C3490.0 248.3 3526.7 231.7 3540.0 240.0 C3553.3 248.3 3566.7 288.3 3560.0 300.0 C3553.3 311.7 3513.3 318.3 3500.0 310.0 C3486.7 301.7 3483.3 260.0 3480.0 250.0" fill="#cdeabf"/>
<path d="M3260.0 770.0 C3266.7 770.0 3293.3 765.0 3300.0 770.0 C3306.7 775.0 3306.7 795.0 3300.0 800.0 C3293.3 805.0 3266.7 805.0 3260.0 800.0 C3253.3 795.0 3260.0 775.0 3260.0 770.0" fill="#cdeabf"/>
<path d="M3180.0 945.0 C3188.3 944.2 3212.5 930.8 3230.0 940.0 C3247.5 949.2 3278.3 969.3 3285.0 1000.0 C3291.7 1030.7 3284.2 1104.0 3270.0 1124.0 C3255.8 1144.0 3215.0 1149.8 3200.0 1120.0 C3185.0 1090.2 3183.3 974.2 3180.0 945.0" fill="#cdeabf"/>
<path d="M2738.0 1420.0 C2751.3 1419.7 2804.3 1411.5 2818.0 1418.0 C2831.7 1424.5 2833.0 1452.0 2820.0 1459.0 C2807.0 1466.0 2753.7 1466.5 2740.0 1460.0 C2726.3 1453.5 2738.3 1426.7 2738.0 1420.0" fill="#cdeabf"/>
<path d="M2590.0 1400.0 C2595.7 1400.0 2625.7 1383.3 2624.0 1400.0 C2622.3 1416.7 2590.8 1483.3 2580.0 1500.0 C2569.2 1516.7 2557.3 1516.7 2559.0 1500.0 C2560.7 1483.3 2584.8 1416.7 2590.0 1400.0" fill="#cdeabf"/>
<path d="M2876.0 1645.0 C2890.0 1644.2 2935.8 1630.8 2960.0 1640.0 C2984.2 1649.2 3016.0 1684.8 3021.0 1700.0 C3026.0 1715.2 3010.2 1726.8 2990.0 1731.0 C2969.8 1735.2 2919.0 1739.3 2900.0 1725.0 C2881.0 1710.7 2880.0 1658.3 2876.0 1645.0" fill="#cdeabf"/>
<path d="M3153.0 1710.0 C3167.5 1709.2 3218.0 1698.3 3240.0 1705.0 C3262.0 1711.7 3280.0 1736.8 3285.0 1750.0 C3290.0 1763.2 3290.8 1779.0 3270.0 1784.0 C3249.2 1789.0 3179.5 1792.3 3160.0 1780.0 C3140.5 1767.7 3154.2 1721.7 3153.0 1710.0" fill="#cdeabf"/>
<path d="M3100.0 1420.0 C3108.3 1419.0 3136.8 1407.3 3150.0 1414.0 C3163.2 1420.7 3179.0 1446.8 3179.0 1460.0 C3179.0 1473.2 3161.5 1489.7 3150.0 1493.0 C3138.5 1496.3 3118.3 1492.2 3110.0 1480.0 C3101.7 1467.8 3101.7 1430.0 3100.0 1420.0" fill="#cdeabf"/>
<path d="M2980.0 240.0 C2988.3 238.3 3018.3 221.7 3030.0 230.0 C3041.7 238.3 3056.7 278.3 3050.0 290.0 C3043.3 301.7 3001.7 308.3 2990.0 300.0 C2978.3 291.7 2981.7 250.0 2980.0 240.0" fill="#cdeabf"/>
<path d="M3360.0 330.0 C3370.0 328.3 3406.7 311.7 3420.0 320.0 C3433.3 328.3 3448.3 368.3 3440.0 380.0 C3431.7 391.7 3383.3 398.3 3370.0 390.0 C3356.7 381.7 3361.7 340.0 3360.0 330.0" fill="#cdeabf"/>
<path d="M3560.0 500.0 C3573.3 496.7 3619.7 476.7 3640.0 480.0 C3660.3 483.3 3682.0 506.7 3682.0 520.0 C3682.0 533.3 3658.7 555.0 3640.0 560.0 C3621.3 565.0 3583.3 560.0 3570.0 550.0 C3556.7 540.0 3561.7 508.3 3560.0 500.0" fill="#cdeabf"/>
<path d="M3230.0 560.0 C3238.3 559.2 3268.3 545.0 3280.0 555.0 C3291.7 565.0 3306.7 607.5 3300.0 620.0 C3293.3 632.5 3251.7 640.0 3240.0 630.0 C3228.3 620.0 3231.7 571.7 3230.0 560.0" fill="#cdeabf"/>
<path d="M2520.0 900.0 C2526.7 899.2 2551.7 885.0 2560.0 895.0 C2568.3 905.0 2575.8 948.3 2570.0 960.0 C2564.2 971.7 2533.3 975.0 2525.0 965.0 C2516.7 955.0 2520.8 910.8 2520.0 900.0" fill="#cdeabf"/>
<path d="M3600.0 1040.0 C3608.3 1038.3 3640.0 1021.7 3650.0 1030.0 C3660.0 1038.3 3666.7 1079.2 3660.0 1090.0 C3653.3 1100.8 3620.0 1103.3 3610.0 1095.0 C3600.0 1086.7 3601.7 1049.2 3600.0 1040.0" fill="#cdeabf"/>
<path d="M3030.0 1300.0 C3038.3 1299.2 3070.0 1286.7 3080.0 1295.0 C3090.0 1303.3 3096.7 1340.0 3090.0 1350.0 C3083.3 1360.0 3050.0 1363.3 3040.0 1355.0 C3030.0 1346.7 3031.7 1309.2 3030.0 1300.0" fill="#cdeabf"/>
<path d="M2960.0 1840.0 C2968.3 1838.3 3000.0 1823.3 3010.0 1830.0 C3020.0 1836.7 3026.7 1870.0 3020.0 1880.0 C3013.3 1890.0 2980.0 1896.7 2970.0 1890.0 C2960.0 1883.3 2961.7 1848.3 2960.0 1840.0" fill="#cdeabf"/>
<path d="M3560.0 1960.0 C3573.3 1958.3 3623.3 1936.7 3640.0 1950.0 C3656.7 1963.3 3670.0 2023.3 3660.0 2040.0 C3650.0 2056.7 3596.7 2063.3 3580.0 2050.0 C3563.3 2036.7 3563.3 1975.0 3560.0 1960.0" fill="#cdeabf"/>
<path d="M2500.0 2050.0 C2510.0 2048.3 2546.7 2031.7 2560.0 2040.0 C2573.3 2048.3 2588.3 2088.3 2580.0 2100.0 C2571.7 2111.7 2523.3 2118.3 2510.0 2110.0 C2496.7 2101.7 2501.7 2060.0 2500.0 2050.0" fill="#cdeabf"/>
<path d="M2460.0 303.0 C2485.7 333.8 2567.2 431.7 2614.0 488.0 C2660.8 544.3 2705.2 582.0 2741.0 641.0 C2776.8 700.0 2805.8 782.2 2829.0 842.0 C2852.2 901.8 2871.5 973.7 2880.0 1000.0" fill="none" stroke="#d3d3d6" stroke-width="6"/>
<path d="M3070.0 409.0 C3099.3 411.2 3180.0 417.0 3246.0 422.0 C3312.0 427.0 3414.7 437.5 3466.0 439.0 C3517.3 440.5 3518.0 439.7 3554.0 431.0 C3590.0 422.3 3660.7 394.3 3682.0 387.0" fill="none" stroke="#d3d3d6" stroke-width="6"/>
<path d="M3598.0 422.0 C3594.3 444.0 3583.3 510.0 3576.0 554.0 C3568.7 598.0 3561.3 649.5 3554.0 686.0 C3546.7 722.5 3539.3 737.3 3532.0 773.0 C3524.7 808.7 3513.7 878.8 3510.0 900.0" fill="none" stroke="#d3d3d6" stroke-width="6"/>
<path d="M2460.0 1066.0 C2482.0 1059.5 2544.3 1046.0 2592.0 1027.0 C2639.7 1008.0 2694.8 966.0 2746.0 952.0 C2797.2 938.0 2845.0 937.2 2899.0 943.0 C2953.0 948.8 3019.8 975.8 3070.0 987.0 C3120.2 998.2 3161.7 1002.8 3200.0 1010.0 C3238.3 1017.2 3283.3 1026.7 3300.0 1030.0" fill="none" stroke="#d3d3d6" stroke-width="6"/>
<path d="M3070.0 886.0 C3091.7 883.3 3161.7 874.3 3200.0 870.0 C3238.3 865.7 3283.3 861.7 3300.0 860.0" fill="none" stroke="#d3d3d6" stroke-width="6"/>
<path d="M2460.0 2080.0 C2500.0 2063.3 2618.3 2013.3 2700.0 1980.0 C2781.7 1946.7 2875.0 1910.0 2950.0 1880.0 C3025.0 1850.0 3091.7 1823.3 3150.0 1800.0 C3208.3 1776.7 3275.0 1750.0 3300.0 1740.0" fill="none" stroke="#d3d3d6" stroke-width="6"/>
<path d="M2794.0 303.0 C2807.8 330.2 2852.2 416.8 2877.0 466.0 C2901.8 515.2 2924.7 561.5 2943.0 598.0 C2961.3 634.5 2972.3 655.8 2987.0 685.0 C3001.7 714.2 3016.3 746.3 3031.0 773.0 C3045.7 799.7 3050.2 827.2 3075.0 845.0 C3099.8 862.8 3142.5 876.2 3180.0 880.0 C3217.5 883.8 3280.0 870.0 3300.0 868.0" fill="none" stroke="#d9d9dc" stroke-width="16"/>
<path d="M3083.0 202.0 L3074.0 257.0 L3067.0 313.0 L3060.0 387.0 L3054.0 461.0 L3056.0 534.0 L3071.0 571.0 L3093.0 645.0 L3115.0 712.0 L3128.0 728.0 L3150.0 722.0 L3145.0 712.0 L3115.0 645.0 L3086.0 571.0 L3071.0 534.0 L3065.0 461.0 L3071.0 387.0 L3080.0 313.0 L3093.0 257.0 L3092.0 202.0 Z" fill="#a8cff6"/>
<path d="M3080.0 250.0 L3130.0 262.0 L3182.0 308.0 L3178.0 316.0 L3141.0 316.0 L3082.0 309.0 Z" fill="#a8cff6"/>
<path d="M3090.0 256.0 L3125.0 262.0 L3162.0 294.0 L3158.0 300.0 L3120.0 276.0 L3088.0 268.0 Z" fill="#e6e6e6"/>
<path d="M3056.0 527.0 L3108.0 522.0 L3110.0 531.0 L3062.0 540.0 Z" fill="#a8cff6"/>
<rect x="2995" y="592" width="93" height="8" fill="#a8cff6"/>
<rect x="3006" y="628" width="94" height="8" fill="#a8cff6"/>
<rect x="3034" y="669" width="81" height="8" fill="#a8cff6"/>
<rect x="3060" y="702" width="70" height="8" fill="#a8cff6"/>
<path d="M3180.0 588.0 L3188.0 588.0 L3200.0 640.0 L3198.0 690.0 L3168.0 720.0 L3160.0 714.0 L3188.0 684.0 L3190.0 640.0 Z" fill="#a8cff6"/>
<path d="M2618 862 C2640 846 2700 848 2745 856 C2758 880 2752 930 2735 940 C2690 948 2640 940 2620 915 C2612 895 2612 875 2618 862 Z" fill="#a8cff6"/>
<ellipse cx="2712" cy="781" rx="18" ry="10" fill="#a8cff6"/>
<path d="M3108 470 L3122 468 L3120 483 L3110 482 Z" fill="#a8cff6"/><path d="M3186 466 L3200 464 L3207 485 L3200 497 L3188 496 Z" fill="#a8cff6"/>
<path d="M3600 1290 C3620 1280 3640 1270 3650 1280 C3640 1300 3610 1320 3600 1310 Z" fill="#a8cff6"/>
<path d="M3471 1500 L3482 1496 L3480 1530 L3470 1530 Z" fill="#a8cff6"/>
<path d="M2927 349 L2947 362 L2943 368 L2925 355 Z M2932 384 L2950 384 L2950 398 L2932 398 Z" fill="#a8cff6"/>
<path d="M3055 222 L3062 218 L3066 232 L3058 236 Z" fill="#a8cff6"/>
<path d="M2480.0 1640.0 C2488.3 1648.3 2516.7 1670.0 2530.0 1690.0 C2543.3 1710.0 2548.3 1736.7 2560.0 1760.0 C2571.7 1783.3 2586.7 1806.7 2600.0 1830.0 C2613.3 1853.3 2633.3 1888.3 2640.0 1900.0" fill="none" stroke="#b9d6f2" stroke-width="1.6"/>
<path d="M2500.0 1900.0 C2510.0 1905.0 2540.0 1920.0 2560.0 1930.0 C2580.0 1940.0 2610.0 1955.0 2620.0 1960.0" fill="none" stroke="#b9d6f2" stroke-width="1.6"/>
<path d="M2640.0 1720.0 C2643.3 1730.0 2650.0 1766.7 2660.0 1780.0 C2670.0 1793.3 2686.7 1791.7 2700.0 1800.0 C2713.3 1808.3 2733.3 1825.0 2740.0 1830.0" fill="none" stroke="#b9d6f2" stroke-width="1.6"/>
<path d="M2960.0 1810.0 C2970.0 1816.7 3000.0 1838.3 3020.0 1850.0 C3040.0 1861.7 3065.0 1876.7 3080.0 1880.0 C3095.0 1883.3 3105.0 1871.7 3110.0 1870.0" fill="none" stroke="#b9d6f2" stroke-width="1.6"/>
<path d="M2950.0 1950.0 C2951.7 1960.0 2960.8 1990.0 2960.0 2010.0 C2959.2 2030.0 2947.5 2060.0 2945.0 2070.0" fill="none" stroke="#b9d6f2" stroke-width="1.6"/>
<path d="M3299 943 L3356 943 L3356 1040 L3299 1040 Z" fill="#efdfe0"/>
<path d="M3250 510 L3298 510 L3298 554 L3250 554 Z" fill="#f0dfe0"/>
<path d="M3340 870 L3480 865 L3500 900 L3490 950 L3420 960 L3340 930 Z" fill="#efe8d6"/>
<path d="M2559.0 483.0 C2566.0 506.5 2589.7 580.0 2601.0 624.0 C2612.3 668.0 2619.7 710.7 2627.0 747.0 C2634.3 783.3 2642.0 826.2 2645.0 842.0" fill="none" stroke="#ffffff" stroke-width="4" stroke-linecap="round"/>
<path d="M2724.0 431.0 C2726.8 444.2 2729.3 484.5 2741.0 510.0 C2752.7 535.5 2780.8 562.2 2794.0 584.0 C2807.2 605.8 2814.8 613.2 2820.0 641.0 C2825.2 668.8 2824.2 732.7 2825.0 751.0" fill="none" stroke="#ffffff" stroke-width="4" stroke-linecap="round"/>
<path d="M2987.0 202.0 C2987.8 224.0 2990.5 298.8 2992.0 334.0 C2993.5 369.2 2989.5 383.7 2996.0 413.0 C3002.5 442.3 3018.7 484.3 3031.0 510.0 C3043.3 535.7 3063.5 557.5 3070.0 567.0" fill="none" stroke="#ffffff" stroke-width="4" stroke-linecap="round"/>
<path d="M2935.0 571.0 C2947.3 582.7 2986.5 616.0 3009.0 641.0 C3031.5 666.0 3059.8 707.7 3070.0 721.0" fill="none" stroke="#ffffff" stroke-width="4" stroke-linecap="round"/>
<path d="M2689.0 303.0 C2694.8 314.0 2711.7 352.5 2724.0 369.0 C2736.3 385.5 2756.5 396.5 2763.0 402.0" fill="none" stroke="#ffffff" stroke-width="4" stroke-linecap="round"/>
<path d="M3171.0 202.0 C3176.2 215.2 3188.0 256.8 3202.0 281.0 C3216.0 305.2 3240.3 316.2 3255.0 347.0 C3269.7 377.8 3281.3 438.8 3290.0 466.0 C3298.7 493.2 3304.2 502.7 3307.0 510.0" fill="none" stroke="#ffffff" stroke-width="4" stroke-linecap="round"/>
<path d="M3114.0 540.0 C3121.3 564.3 3147.0 635.7 3158.0 686.0 C3169.0 736.3 3176.3 816.0 3180.0 842.0" fill="none" stroke="#ffffff" stroke-width="4" stroke-linecap="round"/>
<path d="M3134.0 590.0 C3155.0 586.8 3227.3 576.0 3260.0 571.0 C3292.7 566.0 3318.3 561.8 3330.0 560.0" fill="none" stroke="#ffffff" stroke-width="4" stroke-linecap="round"/>
<path d="M3108.0 542.0 C3112.3 550.0 3126.0 560.5 3134.0 590.0 C3142.0 619.5 3152.3 697.5 3156.0 719.0" fill="none" stroke="#ffffff" stroke-width="4" stroke-linecap="round"/>
<path d="M2561.0 1018.0 C2566.2 1032.7 2578.0 1076.7 2592.0 1106.0 C2606.0 1135.3 2630.3 1168.5 2645.0 1194.0 C2659.7 1219.5 2674.2 1248.2 2680.0 1259.0" fill="none" stroke="#ffffff" stroke-width="4" stroke-linecap="round"/>
<path d="M2460.0 991.0 L2548.0 1013.0" fill="none" stroke="#ffffff" stroke-width="4" stroke-linecap="round"/>
<path d="M2965.0 842.0 C2962.8 864.0 2959.3 943.2 2952.0 974.0 C2944.7 1004.8 2926.2 1018.2 2921.0 1027.0" fill="none" stroke="#ffffff" stroke-width="4" stroke-linecap="round"/>
<path d="M3382.0 996.0 C3375.5 1014.3 3358.3 1073.0 3343.0 1106.0 C3327.7 1139.0 3313.5 1157.3 3290.0 1194.0 C3266.5 1230.7 3235.0 1278.0 3202.0 1326.0 C3169.0 1374.0 3110.3 1456.0 3092.0 1482.0" fill="none" stroke="#ffffff" stroke-width="4" stroke-linecap="round"/>
<path d="M3356.0 842.0 C3356.7 908.0 3360.8 1131.3 3360.0 1238.0 C3359.2 1344.7 3352.5 1441.3 3351.0 1482.0" fill="none" stroke="#ffffff" stroke-width="4" stroke-linecap="round"/>
<path d="M3466.0 1009.0 C3480.7 1025.2 3518.0 1075.2 3554.0 1106.0 C3590.0 1136.8 3660.7 1179.3 3682.0 1194.0" fill="none" stroke="#ffffff" stroke-width="4" stroke-linecap="round"/>
<path d="M3070.0 996.0 C3106.7 1004.0 3224.0 1038.2 3290.0 1044.0 C3356.0 1049.8 3400.7 1036.8 3466.0 1031.0 C3531.3 1025.2 3646.0 1012.7 3682.0 1009.0" fill="none" stroke="#ffffff" stroke-width="4" stroke-linecap="round"/>
<path d="M2600.0 1693.0 C2617.7 1676.8 2675.2 1623.8 2706.0 1596.0 C2736.8 1568.2 2771.8 1537.7 2785.0 1526.0" fill="none" stroke="#ffffff" stroke-width="4" stroke-linecap="round"/>
<path d="M2714.0 1587.0 C2719.2 1606.0 2736.2 1665.8 2745.0 1701.0 C2753.8 1736.2 2763.3 1781.8 2767.0 1798.0" fill="none" stroke="#ffffff" stroke-width="4" stroke-linecap="round"/>
<path d="M2776.0 1877.0 C2774.5 1887.2 2781.7 1898.5 2767.0 1938.0 C2752.3 1977.5 2701.2 2084.7 2688.0 2114.0" fill="none" stroke="#ffffff" stroke-width="4" stroke-linecap="round"/>
<path d="M2714.0 2048.0 C2747.7 2048.8 2856.7 2058.2 2916.0 2053.0 C2975.3 2047.8 3044.3 2023.0 3070.0 2017.0" fill="none" stroke="#ffffff" stroke-width="4" stroke-linecap="round"/>
<path d="M2517.0 1899.0 C2523.7 1910.0 2544.5 1932.2 2557.0 1965.0 C2569.5 1997.8 2586.2 2074.2 2592.0 2096.0" fill="none" stroke="#ffffff" stroke-width="4" stroke-linecap="round"/>
<path d="M3158.0 1614.0 C3156.5 1643.2 3152.0 1723.2 3149.0 1789.0 C3146.0 1854.8 3145.8 1953.7 3140.0 2009.0 C3134.2 2064.3 3118.3 2102.3 3114.0 2121.0" fill="none" stroke="#ffffff" stroke-width="4" stroke-linecap="round"/>
<path d="M3070.0 2009.0 C3092.0 1994.3 3158.2 1954.0 3202.0 1921.0 C3245.8 1888.0 3289.2 1833.0 3333.0 1811.0 C3376.8 1789.0 3406.8 1796.3 3465.0 1789.0 C3523.2 1781.7 3645.8 1770.7 3682.0 1767.0" fill="none" stroke="#ffffff" stroke-width="4" stroke-linecap="round"/>
<path d="M3342.0 1816.0 C3359.7 1831.3 3418.0 1881.0 3448.0 1908.0 C3478.0 1935.0 3483.0 1983.2 3522.0 1978.0 C3561.0 1972.8 3655.3 1893.8 3682.0 1877.0" fill="none" stroke="#ffffff" stroke-width="4" stroke-linecap="round"/>
<path d="M3355.0 2121.0 C3371.2 2106.7 3424.2 2058.8 3452.0 2035.0 C3479.8 2011.2 3510.3 1987.5 3522.0 1978.0" fill="none" stroke="#ffffff" stroke-width="4" stroke-linecap="round"/>
<path d="M3325.0 1482.0 C3355.7 1483.5 3449.5 1493.0 3509.0 1491.0 C3568.5 1489.0 3653.2 1473.5 3682.0 1470.0" fill="none" stroke="#ffffff" stroke-width="4" stroke-linecap="round"/>
<path d="M2460.0 1956.0 C2474.7 1937.7 2529.7 1878.2 2548.0 1846.0 C2566.3 1813.8 2561.3 1788.5 2570.0 1763.0 C2578.7 1737.5 2595.0 1704.7 2600.0 1693.0" fill="none" stroke="#ffffff" stroke-width="4" stroke-linecap="round"/>
<path d="M2460.0 1614.0 L2662.0 1482.0" fill="none" stroke="#ffffff" stroke-width="4" stroke-linecap="round"/>
<path d="M3413.0 202.0 C3413.0 210.8 3396.8 249.2 3413.0 255.0 C3429.2 260.8 3465.2 242.2 3510.0 237.0 C3554.8 231.8 3653.3 226.2 3682.0 224.0" fill="none" stroke="#ffffff" stroke-width="4" stroke-linecap="round"/>
<path d="M3270.0 1250.0 C3275.0 1265.0 3290.0 1301.3 3300.0 1340.0 C3310.0 1378.7 3325.0 1458.3 3330.0 1482.0" fill="none" stroke="#ffffff" stroke-width="4" stroke-linecap="round"/>
<path d="M3560.0 1300.0 C3566.7 1316.7 3579.7 1380.0 3600.0 1400.0 C3620.3 1420.0 3668.3 1416.7 3682.0 1420.0" fill="none" stroke="#ffffff" stroke-width="4" stroke-linecap="round"/>
<path d="M3522.0 1978.0 C3535.0 1975.0 3573.3 1968.0 3600.0 1960.0 C3626.7 1952.0 3668.3 1935.0 3682.0 1930.0" fill="none" stroke="#ffffff" stroke-width="4" stroke-linecap="round"/>
<path d="M3070.0 1776.0 L3246.0 1745.0" fill="none" stroke="#ffffff" stroke-width="4" stroke-linecap="round"/>
<path d="M2940.0 1900.0 C2948.3 1915.0 2973.3 1953.2 2990.0 1990.0 C3006.7 2026.8 3031.7 2099.2 3040.0 2121.0" fill="none" stroke="#ffffff" stroke-width="4" stroke-linecap="round"/>
<path d="M2800.0 2121.0 L2900.0 2060.0" fill="none" stroke="#ffffff" stroke-width="4" stroke-linecap="round"/>
<path d="M3220.0 1800.0 C3225.0 1816.7 3246.7 1866.7 3250.0 1900.0 C3253.3 1933.3 3236.7 1963.2 3240.0 2000.0 C3243.3 2036.8 3265.0 2100.8 3270.0 2121.0" fill="none" stroke="#ffffff" stroke-width="4" stroke-linecap="round"/>
<path d="M3420.0 1960.0 C3416.7 1975.0 3400.0 2023.2 3400.0 2050.0 C3400.0 2076.8 3416.7 2109.2 3420.0 2121.0" fill="none" stroke="#ffffff" stroke-width="4" stroke-linecap="round"/>
<path d="M2680.0 1259.0 L2724.0 1286.0" fill="none" stroke="#ffffff" stroke-width="4" stroke-linecap="round"/>
<path d="M2856.0 939.0 C2860.0 929.2 2872.7 896.2 2880.0 880.0 C2887.3 863.8 2896.7 848.3 2900.0 842.0" fill="none" stroke="#ffffff" stroke-width="4" stroke-linecap="round"/>
<path d="M2460.0 1163.0 C2470.0 1160.8 2498.0 1159.5 2520.0 1150.0 C2542.0 1140.5 2580.0 1113.3 2592.0 1106.0" fill="none" stroke="#ffffff" stroke-width="4" stroke-linecap="round"/>
<path d="M2460.0 1396.0 C2496.7 1395.2 2614.0 1395.5 2680.0 1391.0 C2746.0 1386.5 2791.0 1374.0 2856.0 1369.0 C2921.0 1364.0 3034.3 1362.3 3070.0 1361.0" fill="none" stroke="#ffffff" stroke-width="4" stroke-linecap="round"/>
<path d="M2636.0 1482.0 C2658.0 1472.8 2724.2 1438.5 2768.0 1427.0 C2811.8 1415.5 2848.7 1408.0 2899.0 1413.0 C2949.3 1418.0 3041.5 1449.7 3070.0 1457.0" fill="none" stroke="#ffffff" stroke-width="4" stroke-linecap="round"/>
<path d="M2921.0 842.0 C2921.0 871.3 2927.5 966.7 2921.0 1018.0 C2914.5 1069.3 2895.8 1109.8 2882.0 1150.0 C2868.2 1190.2 2842.3 1222.5 2838.0 1259.0 C2833.7 1295.5 2848.7 1331.8 2856.0 1369.0 C2863.3 1406.2 2877.7 1463.2 2882.0 1482.0" fill="none" stroke="#ffffff" stroke-width="4" stroke-linecap="round"/>
<path d="M3440.0 1420.0 C3446.7 1433.3 3466.7 1476.7 3480.0 1500.0 C3493.3 1523.3 3513.3 1550.0 3520.0 1560.0" fill="none" stroke="#ffffff" stroke-width="4" stroke-linecap="round"/>
<clipPath id="ca0"><rect x="2540" y="470" width="190" height="270"/></clipPath>
<path clip-path="url(#ca0)" d="M2530 223L2576 239M2576 238L2607 249M2608 248L2669 267M2696 277L2752 298M2753 295L2822 319M2822 318L2853 328M2853 328L2879 335M2878 336L2903 344M2903 344L2966 366M2966 365L3013 380M2369 353L2349 410M2350 411L2340 448M2311 531L2289 595M2290 595L2271 663M2269 662L2256 705M2255 704L2233 764M2541 256L2571 263M2596 274L2627 284M2627 284L2660 293M2659 295L2713 312M2713 312L2745 326M2746 323L2807 345M2808 343L2840 356M2841 354L2894 374M2895 371L2928 384M2928 382L2968 392M2967 395L2995 402M2431 255L2414 307M2414 307L2392 376M2391 376L2368 440M2348 508L2339 543M2337 543L2317 612M2315 611L2293 677M2294 677L2287 706M2461 266L2498 279M2498 278L2524 287M2524 287L2589 306M2589 308L2657 327M2656 329L2693 339M2692 341L2723 352M2723 351L2752 363M2752 361L2822 385M2823 384L2875 398M2954 426L2978 434M2463 265L2447 324M2444 323L2437 350M2395 473L2375 541M2338 650L2318 715M2317 715L2304 756M2303 756L2298 784M2451 299L2508 319M2509 318L2559 336M2587 343L2611 351M2611 351L2645 362M2698 379L2733 389M2733 390L2789 407M2789 409L2855 430M2855 430L2921 453M2921 452L2953 464M2496 276L2481 317M2482 317L2474 347M2452 411L2427 479M2429 480L2413 524M2415 524L2401 567M2389 605L2363 675M2350 725L2335 776M2333 775L2325 799M2445 315L2509 334M2508 336L2534 343M2533 344L2586 363M2587 361L2657 382M2656 384L2703 396M2702 398L2748 412M2748 413L2783 426M2784 425L2831 442M2874 454L2940 478M2941 476L2999 495M2495 334L2483 376M2461 437L2445 482M2348 785L2325 848M2484 366L2530 382M2556 389L2587 401M2587 399L2617 409M2778 461L2805 470M2805 470L2841 483M2890 498L2940 513M2536 325L2513 395M2513 395L2502 428M2502 428L2488 481M2485 480L2472 528M2470 528L2455 578M2454 578L2445 604M2423 673L2409 708M2397 753L2374 819M2508 401L2532 407M2532 409L2588 426M2588 427L2640 446M2641 444L2670 452M2670 454L2702 464M2702 464L2743 478M2743 478L2773 488M2774 487L2827 507M2880 522L2914 535M2914 533L2981 554M2571 300L2552 369M2549 368L2527 433M2528 434L2507 491M2509 492L2490 556M2489 555L2480 584M2479 584L2473 608M2450 675L2442 704M2425 750L2413 782M2415 782L2407 807M2407 807L2389 857M2480 424L2549 443M2548 446L2617 470M2617 468L2656 481M2656 481L2700 492M2756 514L2787 525M2788 524L2831 536M2830 538L2877 555M2878 553L2939 575M2600 310L2583 363M2567 410L2550 473M2528 531L2510 594M2453 762L2445 788M2445 788L2438 811M2437 811L2422 865M2405 438L2444 451M2444 451L2492 470M2493 467L2547 486M2547 484L2617 508M2617 507L2676 526M2676 526L2702 534M2701 535L2728 546M2729 544L2778 562M2883 593L2909 604M2635 321L2623 351M2625 352L2608 398M2610 399L2588 467M2588 467L2570 519M2571 519L2552 573M2553 574L2532 630M2534 631L2521 665M2523 666L2506 726M2504 725L2487 785M2485 785L2465 854M2443 478L2477 492M2478 490L2535 511M2536 509L2599 527M2598 529L2652 544M2651 546L2677 552M2676 554L2721 568M2721 569L2756 580M2756 580L2816 603M2817 600L2886 621M2660 329L2640 390M2629 426L2613 477M2613 476L2592 535M2570 606L2547 671M2549 672L2538 708M2537 708L2526 735M2520 762L2503 812M2504 812L2488 858M2386 497L2451 515M2450 517L2511 539M2512 537L2546 547M2545 548L2607 569M2607 568L2678 592M2737 610L2781 622M2781 625L2847 643M2846 646L2896 663M2693 340L2686 367M2685 367L2677 394M2676 393L2656 449M2645 490L2633 531M2579 694L2566 731M2544 799L2532 834M2533 834L2519 874M2479 549L2528 567M2529 566L2595 584M2595 587L2642 603M2642 603L2711 627M2712 625L2737 635M2738 634L2764 644M2765 642L2831 665M2831 664L2861 675M2861 674L2895 686M2698 395L2687 438M2685 437L2667 492M2648 550L2628 618M2567 800L2550 855M2549 854L2529 916M2429 564L2471 576M2470 577L2513 594M2514 592L2540 598M2594 618L2625 628M2676 644L2702 651M2701 652L2734 665M2734 663L2787 678M2786 680L2822 693M2823 692L2860 706M2861 704L2906 721M2742 356L2720 423M2720 423L2696 492M2689 517L2670 579M2669 579L2657 628M2654 627L2633 681M2636 682L2623 728M2621 728L2601 784M2603 785L2591 815M2593 815L2572 881M2357 586L2394 595M2393 597L2453 619M2517 638L2544 648M2544 646L2572 655M2572 655L2640 680M2749 713L2781 724M2812 733L2851 743M2850 746L2887 759M2769 409L2760 437M2738 507L2719 561M2720 562L2702 619M2701 619L2690 665M2687 664L2667 726M2667 725L2655 762M2655 762L2642 799M2643 800L2623 854M2625 855L2608 914M2350 608L2407 629M2408 627L2436 633M2435 636L2492 652M2533 668L2585 683M2585 684L2616 694M2642 703L2685 718M2745 736L2787 749M2787 750L2810 759M2805 376L2784 430M2787 431L2775 470M2774 470L2765 498M2746 559L2730 612M2728 612L2706 678M2707 678L2693 726M2692 725L2670 796M2669 796L2651 860M2648 859L2628 912M2342 632L2393 648M2393 649L2461 670M2519 690L2568 706M2675 740L2726 759M2764 769L2798 782M2798 780L2831 788M2830 791L2854 801M2855 798L2923 820M2811 439L2799 481M2797 481L2790 504M2790 504L2781 534M2780 534L2769 565M2770 565L2754 616M2754 616L2744 640M2746 641L2723 710M2723 710L2710 753M2332 663L2375 679M2376 677L2425 693M2424 693L2492 712M2549 733L2607 754M2608 752L2646 762M2645 765L2674 774M2674 774L2716 789M2716 788L2765 802M2764 803L2807 815M2792 604L2785 634M2782 633L2774 655M2775 656L2765 695M2762 694L2741 756M2742 757L2723 807M2725 808L2704 874M2323 692L2355 705M2356 703L2421 727M2422 725L2462 736M2527 759L2561 768M2560 769L2626 789M2626 791L2683 812M2684 810L2749 829M2805 849L2850 862M2877 441L2865 473M2849 529L2837 570M2835 570L2817 621M2819 621L2795 689M2797 689L2782 744M2779 743L2765 787M2765 787L2755 812M2745 847L2738 875M2736 874L2725 909M2311 728L2335 738M2377 750L2424 765M2424 765L2478 783M2478 783L2539 802M2539 802L2603 823M2603 823L2671 847M2672 845L2703 854M2808 890L2843 899M2925 415L2906 465M2875 569L2862 599M2865 600L2849 647M2830 709L2815 760M2813 759L2801 794M2802 794L2795 819M2794 819L2779 867M2770 894L2757 925M2303 754L2329 762M2362 773L2386 783M2387 781L2457 804M2457 804L2517 822M2516 823L2583 844M2582 845L2620 854M2644 865L2704 883M2704 884L2740 894M2784 910L2824 926M2951 424L2933 476M2934 476L2915 530M2881 639L2868 684M2853 725L2840 758M2842 758L2824 807M2826 808L2814 841M2296 774L2337 789M2338 788L2379 798M2378 801L2410 810M2410 811L2478 832M2477 833L2517 849M2616 878L2640 885M2705 907L2753 922M2753 923L2788 932M2787 934L2840 949M2971 430L2955 473M2957 474L2940 531M2938 531L2919 585M2909 622L2897 665M2895 665L2883 698M2884 699L2870 731M2873 732L2857 786M2856 785L2834 856M2833 855L2812 923M2284 812L2319 821M2318 823L2362 835M2362 837L2403 851M2403 851L2440 862M2439 863L2485 879M2485 878L2520 888M2520 889L2563 903M2563 903L2620 922M2620 921L2644 928M2644 929L2671 935M2670 938L2717 953M2717 953L2756 963M2795 978L2845 995M3009 443L2999 475M2999 474L2977 544M2954 612L2936 665M2937 665L2925 709M2923 708L2904 775M2901 774L2893 799M2893 799L2884 837M2881 836L2870 866M2871 866L2850 921M2853 922L2836 971M2276 835L2330 854M2381 869L2451 891M2450 892L2516 915M2516 913L2572 934M2573 932L2635 953M2636 952L2683 966M2682 967L2719 979M2719 979L2754 989M2753 990L2785 998M2785 1001L2811 1007M3032 450L3013 507M3014 507L2992 567M2973 632L2965 658M2965 658L2946 720M2933 754L2922 793M2900 857L2885 907M2867 960L2846 1021" stroke="#fbfbfb" stroke-width="2.4" fill="none"/>
<clipPath id="ca1"><rect x="2960" y="202" width="130" height="98"/></clipPath>
<path clip-path="url(#ca1)" d="M2895 74L2931 71M2985 74L3058 75M3058 74L3104 73M2848 147L2846 178M2848 239L2845 269M2848 269L2847 321M2848 360L2847 427M2958 103L3002 103M3002 103L3067 101M3096 103L3133 100M3133 103L3173 103M2877 121L2875 152M2877 152L2876 188M2877 188L2874 225M2877 225L2874 295M2877 295L2880 328M2877 362L2879 411M2895 129L2922 130M2922 129L2978 132M3092 129L3153 127M3153 129L3186 127M2903 163L2901 203M2903 238L2905 262M3005 168L3031 167M3031 168L3074 169M3074 168L3140 169M3140 168L3182 171M2942 121L2941 161M2942 161L2944 223M2942 275L2940 308M2942 308L2939 350M2942 350L2941 400M2895 192L2968 194M3083 192L3119 193M3119 192L3152 193M3152 192L3224 190M2966 238L2968 273M2966 273L2966 341M2966 341L2968 394M2895 224L2942 223M2942 224L2986 224M2986 224L3039 221M3039 224L3095 224M3149 224L3181 227M2998 121L2999 183M2998 183L3000 257M2998 288L3000 337M2895 256L2960 259M2987 256L3047 258M3047 256L3094 258M3094 256L3128 257M3128 256L3156 258M3030 121L3032 170M3030 290L3029 354M3030 354L3029 383M2895 286L2962 285M3088 286L3123 289M3123 286L3184 287M3060 121L3060 167M3060 167L3059 207M3060 262L3062 295M3060 295L3058 343M3060 343L3060 415M2895 306L2970 308M2970 306L3012 306M3012 306L3044 306M3044 306L3109 306M3080 163L3079 199M3080 199L3083 267M3080 267L3083 326M3080 369L3078 424M2895 340L2933 343M2933 340L2972 341M2972 340L3009 338M3009 340L3078 339M3120 340L3187 340M3114 150L3113 179M3114 281L3115 353M3114 353L3114 401M2895 368L2953 371M3128 368L3203 368M3142 201L3140 235M3142 279L3143 308M2895 404L2959 404M3056 404L3081 405M3081 404L3132 406M3132 404L3171 402M3178 121L3176 174M3178 174L3180 224M3178 224L3176 261M3178 261L3179 296M2895 431L2940 434M2940 431L3013 428M3106 431L3138 429M3138 431L3168 434M3205 178L3203 204M3205 204L3208 241M3205 241L3206 282M3205 351L3208 404" stroke="#fbfbfb" stroke-width="2.4" fill="none"/>
<clipPath id="ca2"><rect x="3150" y="202" width="150" height="128"/></clipPath>
<path clip-path="url(#ca2)" d="M3216 35L3255 52M3255 53L3304 75M3304 76L3352 100M3352 98L3380 112M3380 111L3427 130M3426 133L3470 153M3085 80L3061 130M3061 130L3027 205M3026 205L2992 280M2991 280L2971 324M3160 50L3201 69M3201 69L3267 97M3266 99L3303 118M3350 139L3396 161M3425 173L3494 204M3104 126L3078 185M3039 265L3015 325M3150 72L3213 102M3366 172L3410 193M3410 193L3441 209M3158 69L3146 98M3117 157L3101 187M3067 262L3033 335M3135 104L3206 135M3205 137L3252 160M3253 159L3325 194M3401 228L3435 242M3190 84L3169 127M3170 127L3144 182M3158 155L3214 178M3213 180L3280 213M3382 259L3454 293M3206 136L3193 167M3154 247L3137 290M3105 167L3140 184M3343 278L3405 309M3253 114L3223 176M3224 176L3211 201M3212 202L3191 241M3193 242L3169 292M3170 292L3154 332M3089 203L3151 234M3225 267L3262 287M3307 305L3344 321M3265 182L3248 226M3231 255L3206 315M3078 227L3139 252M3252 308L3319 336M3318 339L3370 363M3312 141L3291 184M3292 184L3264 246M3264 246L3250 275M3215 350L3199 382M3201 339L3226 351M3357 162L3346 193M3344 191L3333 219M3331 218L3294 291M3153 336L3200 356M3225 369L3263 387M3306 407L3353 431M3373 170L3356 203M3334 253L3315 296M3315 295L3295 333M3297 334L3262 403M3264 404L3246 445M3030 329L3097 357M3096 359L3162 388M3207 411L3250 434M3251 432L3329 465M3364 297L3344 342M3343 342L3315 406M3313 405L3301 430M3289 459L3276 492M3014 364L3086 400M3119 413L3195 446M3450 205L3425 253M3409 293L3395 321M3396 321L3381 347M3383 348L3369 379M3006 381L3043 397M3107 428L3158 451M3158 452L3211 479M3212 477L3287 513M3467 213L3433 281M3388 382L3365 427M3351 462L3333 497" stroke="#fbfbfb" stroke-width="2.4" fill="none"/>
<clipPath id="ca3"><rect x="3460" y="202" width="222" height="198"/></clipPath>
<path clip-path="url(#ca3)" d="M3429 21L3483 22M3483 25L3528 28M3527 29L3590 35M3590 35L3653 39M3653 40L3731 47M3731 47L3789 51M3789 52L3869 62M3318 133L3317 170M3315 169L3312 213M3311 213L3305 253M3307 254L3298 335M3300 335L3295 402M3289 458L3281 514M3371 44L3413 49M3413 48L3467 53M3467 53L3521 61M3522 58L3565 59M3565 62L3638 70M3638 68L3711 77M3711 74L3767 80M3767 79L3849 86M3349 103L3343 159M3409 79L3438 80M3437 81L3510 90M3510 88L3591 92M3591 95L3656 103M3656 100L3734 105M3801 113L3885 118M3384 62L3380 131M3372 202L3367 280M3365 279L3358 343M3359 343L3353 391M3355 391L3350 464M3365 113L3410 115M3474 122L3555 132M3556 129L3635 139M3698 142L3770 147M3770 148L3827 150M3421 65L3414 142M3415 142L3407 212M3408 212L3402 272M3403 272L3400 303M3395 361L3389 425M3390 425L3389 466M3386 465L3384 500M3383 500L3378 571M3361 154L3440 161M3440 161L3525 166M3525 168L3596 172M3596 174L3655 181M3655 179L3723 187M3788 191L3842 193M3458 123L3448 201M3447 244L3442 296M3424 503L3421 537M3359 172L3391 174M3424 177L3500 185M3545 188L3579 189M3579 191L3656 197M3748 206L3816 211M3481 70L3475 122M3476 122L3469 185M3470 186L3464 257M3464 257L3457 335M3451 414L3445 486M3444 486L3439 556M3617 244L3645 248M3645 247L3687 249M3776 258L3806 263M3530 75L3524 150M3518 218L3510 288M3512 288L3506 356M3506 356L3500 440M3494 486L3488 567M3353 248L3408 254M3531 264L3582 269M3582 268L3635 276M3743 282L3774 286M3557 77L3552 126M3553 126L3547 184M3548 184L3541 249M3535 326L3529 368M3529 400L3523 469M3523 469L3519 537M3389 291L3456 299M3456 297L3496 299M3548 305L3608 313M3608 310L3648 315M3684 317L3731 321M3596 80L3590 146M3591 146L3587 214M3585 214L3577 291M3569 392L3562 450M3564 451L3564 481M3348 308L3380 312M3380 311L3418 315M3418 314L3485 320M3485 320L3529 323M3529 324L3577 327M3576 328L3619 331M3619 332L3680 335M3680 337L3756 344M3605 218L3599 274M3600 274L3595 330M3590 388L3580 466M3583 466L3581 511M3579 510L3572 573M3486 368L3539 373M3697 387L3728 392M3728 389L3786 393M3664 86L3661 163M3655 194L3652 222M3652 222L3647 286M3647 286L3641 368M3640 367L3632 428M3630 482L3624 548M3341 384L3387 389M3387 388L3415 391M3416 391L3455 396M3501 398L3560 404M3672 413L3702 417M3702 416L3737 416M3737 419L3773 425M3774 422L3819 428M3684 189L3681 219M3681 219L3676 293M3675 293L3674 331M3672 331L3670 372M3668 372L3660 438M3662 438L3661 479M3338 420L3401 427M3401 426L3457 430M3456 430L3506 432M3534 437L3583 439M3644 447L3682 450M3682 450L3753 455M3726 124L3723 153M3711 298L3707 367M3705 367L3699 402M3699 431L3692 480M3334 458L3364 459M3364 461L3402 462M3402 464L3466 468M3466 470L3524 473M3524 475L3584 479M3583 480L3638 485M3638 485L3676 485M3676 488L3754 494M3767 95L3765 130M3759 179L3751 258M3742 374L3735 454M3332 489L3409 496M3701 521L3736 525M3771 527L3802 529M3794 144L3792 182M3790 182L3782 266M3783 266L3779 333M3777 333L3773 371M3774 371L3768 398M3771 398L3770 445M3767 444L3763 508M3762 508L3760 549M3329 525L3410 531M3410 532L3459 538M3549 544L3632 552M3632 551L3668 554M3766 563L3849 568M3833 101L3833 130M3831 130L3827 197M3825 197L3822 245M3821 245L3816 274M3818 274L3815 310M3812 345L3803 419M3800 485L3794 563M3435 568L3499 571M3499 574L3553 579M3553 579L3610 581M3610 584L3644 588M3729 594L3772 598M3867 104L3864 178M3861 177L3856 232M3852 280L3847 310M3849 310L3842 376M3839 427L3832 498" stroke="#fbfbfb" stroke-width="2.4" fill="none"/>
<clipPath id="ca4"><rect x="3150" y="600" width="150" height="270"/></clipPath>
<path clip-path="url(#ca4)" d="M2978 423L3023 421M3023 423L3088 420M3088 423L3143 423M3143 423L3194 426M3194 423L3232 425M3232 423L3260 424M3305 423L3365 420M3365 423L3416 422M3416 423L3482 424M2913 465L2912 533M2913 589L2913 650M2913 650L2916 679M2913 679L2913 742M2913 742L2914 780M2913 780L2913 838M2913 894L2911 938M2913 969L2912 1015M2986 453L3037 454M3037 453L3088 455M3139 453L3208 454M3208 453L3248 452M3248 453L3301 452M3419 453L3459 452M3459 453L3497 455M2943 465L2942 531M2943 531L2944 559M2943 559L2942 624M2943 624L2945 683M2943 683L2941 722M2943 722L2942 758M2943 758L2944 815M2943 815L2941 876M2943 876L2945 904M2943 904L2943 955M2943 955L2940 1006M3034 482L3097 480M3097 482L3158 482M3158 482L3185 481M3333 482L3386 484M3386 482L3440 482M3440 482L3483 483M3483 482L3538 484M2972 465L2970 527M2972 527L2975 551M2972 551L2972 588M2972 588L2974 638M2972 676L2972 737M2972 763L2974 789M2972 789L2971 840M2972 840L2972 887M2972 921L2970 949M2972 949L2969 997M2985 509L3054 511M3115 509L3148 507M3181 509L3247 507M3247 509L3286 510M3343 509L3386 509M3386 509L3426 510M3426 509L3482 510M3482 509L3511 509M2999 465L2997 505M2999 547L2998 609M2999 609L2997 649M2999 700L2997 740M2999 797L2997 857M2999 894L2999 952M2999 952L3001 991M3006 545L3073 548M3105 545L3133 545M3133 545L3196 543M3261 545L3307 544M3307 545L3344 548M3394 545L3420 546M3420 545L3459 542M3459 545L3484 545M3484 545L3525 544M3035 465L3034 488M3035 488L3033 534M3035 534L3034 559M3035 559L3035 587M3035 610L3035 650M3035 650L3037 673M3035 673L3034 722M3035 722L3037 780M3035 842L3035 899M3035 899L3035 947M2955 561L3013 561M3013 561L3079 561M3119 561L3149 559M3149 561L3208 562M3245 561L3267 562M3332 561L3367 562M3367 561L3424 563M3424 561L3472 561M3472 561L3510 563M3051 465L3050 532M3051 532L3048 567M3051 567L3051 606M3051 606L3053 649M3051 715L3049 777M3051 777L3051 822M3051 861L3048 898M3051 930L3049 993M2955 601L2990 603M2990 601L3059 600M3117 601L3163 601M3163 601L3217 601M3246 601L3279 603M3409 601L3470 598M3091 465L3088 527M3091 527L3093 584M3091 584L3092 654M3091 708L3088 748M3091 813L3089 874M3091 918L3088 966M3091 966L3089 1008M2955 619L2997 622M2997 619L3052 621M3052 619L3103 620M3103 619L3142 617M3142 619L3196 620M3196 619L3262 620M3384 619L3428 620M3481 619L3533 616M3109 465L3112 527M3109 681L3108 722M3109 762L3110 803M3109 803L3108 830M3109 830L3109 858M3109 858L3112 919M3109 919L3107 950M3109 950L3111 973M3109 973L3109 1010M2955 648L3003 647M3039 648L3098 648M3098 648L3162 645M3162 648L3190 650M3260 648L3290 648M3290 648L3341 651M3341 648L3387 651M3387 648L3428 649M3428 648L3463 647M3463 648L3514 649M3138 630L3135 656M3138 712L3139 759M3138 785L3137 846M3138 870L3140 894M3138 894L3139 949M3138 949L3139 1004M3138 1004L3138 1054M3030 676L3070 673M3138 676L3207 673M3207 676L3238 677M3290 676L3326 674M3326 676L3355 676M3355 676L3398 679M3435 676L3483 673M3166 585L3169 619M3166 685L3165 733M3166 733L3165 799M3166 824L3165 863M3166 863L3167 895M3166 895L3166 949M3166 949L3168 974M2996 703L3019 704M3075 703L3131 702M3131 703L3176 704M3176 703L3203 703M3203 703L3227 706M3331 703L3362 706M3362 703L3394 701M3420 703L3472 701M3472 703L3525 701M3193 465L3195 516M3193 516L3192 577M3193 577L3191 607M3193 670L3196 731M3193 793L3192 854M3193 924L3196 960M2955 740L3021 741M3021 740L3047 743M3047 740L3093 741M3093 740L3119 738M3219 740L3263 738M3263 740L3323 740M3323 740L3352 738M3352 740L3380 740M3461 740L3509 739M3230 465L3231 527M3230 527L3229 580M3230 623L3229 690M3230 690L3230 715M3230 715L3229 781M3230 781L3232 805M3230 805L3227 868M3230 868L3231 918M3230 984L3229 1020M3083 767L3133 768M3133 767L3171 764M3171 767L3222 764M3222 767L3281 768M3281 767L3317 769M3379 767L3448 769M3448 767L3500 766M3257 465L3255 505M3257 558L3254 615M3257 615L3259 655M3257 655L3257 703M3257 752L3255 801M3257 801L3259 829M3257 829L3257 897M3257 897L3255 944M3257 944L3255 1004M3257 1004L3255 1040M2955 785L3002 786M3002 785L3053 785M3053 785L3105 785M3105 785L3160 787M3210 785L3262 787M3262 785L3298 785M3298 785L3356 783M3469 785L3521 783M3275 465L3276 488M3275 583L3275 634M3275 634L3273 688M3275 786L3275 831M3275 831L3277 870M3275 901L3278 932M3275 981L3276 1047M2955 818L2985 818M2985 818L3049 819M3049 818L3094 820M3094 818L3145 821M3145 818L3196 819M3196 818L3259 819M3259 818L3305 816M3305 818L3338 818M3338 818L3389 819M3434 818L3495 821M3308 465L3307 513M3308 513L3310 570M3308 639L3309 683M3308 683L3309 730M3308 824L3310 847M3308 847L3306 883M3308 929L3306 952M3308 952L3308 977M3308 977L3311 1046M2955 848L3021 847M3021 848L3061 846M3061 848L3127 846M3173 848L3208 846M3208 848L3242 848M3242 848L3297 849M3348 848L3418 851M3418 848L3462 846M3462 848L3488 846M3488 848L3512 849M3338 465L3340 497M3338 497L3339 540M3338 540L3338 610M3338 755L3338 782M3338 782L3337 813M3338 813L3340 880M3338 880L3340 948M3338 948L3336 994M2955 878L2992 877M3034 878L3056 878M3056 878L3086 876M3086 878L3127 878M3127 878L3170 877M3170 878L3230 875M3230 878L3276 876M3276 878L3343 879M3343 878L3373 875M3373 878L3406 875M3472 878L3511 879M3368 465L3369 519M3368 519L3369 545M3368 545L3368 603M3368 603L3368 664M3368 664L3366 695M3368 695L3367 743M3368 743L3369 795M2955 904L2989 905M2989 904L3023 904M3023 904L3075 902M3075 904L3112 906M3112 904L3149 903M3149 904L3192 905M3308 904L3352 905M3389 904L3431 904M3431 904L3471 902M3394 563L3396 598M3394 598L3396 624M3394 678L3394 741M3394 741L3394 767M3394 767L3395 829M3394 829L3391 858M3394 858L3395 908M3394 950L3396 1007M2955 927L2991 927M2991 927L3059 924M3059 927L3127 925M3127 927L3185 929M3185 927L3234 926M3234 927L3278 927M3278 927L3308 924M3308 927L3332 928M3373 927L3425 925M3425 927L3490 929M3417 465L3418 520M3417 520L3416 550M3417 550L3414 588M3417 588L3418 629M3417 838L3417 905M3417 905L3415 931M3417 931L3418 983M3417 983L3416 1009M2955 964L3007 965M3007 964L3041 963M3041 964L3109 962M3146 964L3185 964M3239 964L3266 965M3266 964L3312 965M3312 964L3338 962M3338 964L3375 963M3375 964L3403 964M3403 964L3462 961M3462 964L3519 962M3454 465L3455 511M3454 511L3453 557M3454 622L3454 649M3454 649L3456 679M3454 794L3452 846M3454 846L3455 898M3454 898L3451 923M3454 923L3453 982M3454 982L3453 1041M2955 985L2977 983M3094 985L3142 983M3142 985L3185 985M3185 985L3239 986M3239 985L3271 985M3271 985L3318 984M3318 985L3375 985M3375 985L3445 987M3475 465L3477 506M3475 506L3474 529M3475 578L3477 642M3475 642L3478 668M3475 668L3476 720M3475 720L3474 762M3475 762L3473 822M3475 874L3478 927M3475 927L3475 958M3475 958L3474 988M3475 988L3476 1019M2989 1017L3032 1020M3032 1017L3085 1019M3085 1017L3143 1015M3143 1017L3200 1018M3200 1017L3228 1015M3228 1017L3288 1018M3288 1017L3314 1019M3314 1017L3342 1017M3342 1017L3405 1016M3431 1017L3494 1016M3494 1017L3552 1015M3507 503L3509 527M3507 527L3505 585M3507 648L3505 714M3507 714L3509 772M3507 772L3510 830M3507 830L3508 875M3507 875L3510 935M3507 970L3505 1034M3007 1044L3056 1046M3056 1044L3086 1044M3086 1044L3119 1044M3119 1044L3176 1043M3260 1044L3319 1043M3319 1044L3364 1046M3364 1044L3396 1044M3396 1044L3421 1045M3421 1044L3472 1042M3472 1044L3521 1043M3534 465L3534 498M3534 498L3535 538M3534 538L3533 573M3534 573L3535 631M3534 806L3535 845M3534 845L3532 874M3534 874L3537 927M3534 927L3533 988M3534 988L3532 1026" stroke="#fbfbfb" stroke-width="2.4" fill="none"/>
<clipPath id="ca5"><rect x="3080" y="740" width="70" height="130"/></clipPath>
<path clip-path="url(#ca5)" d="M2985 642L3022 645M3106 642L3132 643M3194 642L3221 640M2952 675L2950 741M2952 741L2954 800M2952 853L2950 884M2952 884L2955 926M3012 660L3045 660M3045 660L3087 658M3087 660L3142 660M3142 660L3203 659M3243 660L3295 659M2970 675L2967 698M2970 698L2970 727M2970 822L2968 865M2970 865L2972 918M2970 918L2967 951M2985 692L3053 690M3102 692L3131 693M3131 692L3165 694M3228 692L3291 691M3002 778L3000 812M3002 863L3005 931M3002 931L3002 983M2985 719L3022 718M3022 719L3045 719M3079 719L3143 721M3183 719L3242 720M3242 719L3281 719M3029 703L3031 737M2985 751L3034 754M3034 751L3070 751M3107 751L3160 750M3160 751L3212 752M3212 751L3257 752M3061 675L3062 744M3061 795L3064 842M3061 842L3063 906M2985 784L3011 782M3072 784L3105 786M3105 784L3162 786M3162 784L3228 787M3094 675L3093 733M3094 799L3095 868M3094 925L3092 982M2985 800L3020 799M3020 800L3049 802M3049 800L3110 801M3110 800L3179 801M3179 800L3240 803M3110 675L3113 714M3110 714L3111 739M3110 739L3109 807M3110 900L3111 925M3110 925L3108 982M2985 830L3027 828M3121 830L3187 831M3140 741L3138 770M3140 770L3142 819M3140 819L3143 858M3140 858L3141 887M3140 912L3141 968M2985 856L3033 854M3033 856L3076 857M3076 856L3143 855M3175 856L3215 854M3166 763L3167 798M3166 798L3164 824M3166 824L3164 860M3166 860L3164 910M3166 910L3168 945M2985 892L3050 890M3050 892L3087 894M3149 892L3172 891M3172 892L3215 891M3244 892L3276 890M3202 675L3201 738M3202 738L3205 771M3202 935L3202 968M3048 917L3110 920M3110 917L3161 915M3227 735L3227 783M3227 890L3226 921M3227 921L3224 946M2985 952L3046 949M3081 952L3118 951M3118 952L3168 951M3262 736L3263 784M3262 784L3264 849M3262 849L3263 917M3082 971L3108 973M3108 971L3140 974M3200 971L3238 973M3281 675L3284 731M3281 784L3280 815" stroke="#fbfbfb" stroke-width="2.4" fill="none"/>
<clipPath id="ca6"><rect x="3300" y="600" width="160" height="270"/></clipPath>
<path clip-path="url(#ca6)" d="M3168 384L3216 392M3216 392L3254 401M3255 399L3289 402M3289 405L3329 415M3329 412L3374 418M3374 420L3394 424M3395 424L3433 430M3433 430L3489 439M3489 440L3540 448M3539 449L3575 457M3576 456L3598 461M3598 460L3631 464M3631 465L3675 472M3675 473L3717 480M3122 415L3121 436M3119 436L3114 466M3114 466L3106 493M3101 538L3094 588M3092 588L3082 641M3072 699L3064 743M3065 743L3059 766M3061 766L3054 810M3053 810L3041 866M3043 866L3041 889M3032 926L3029 953M3165 402L3213 411M3213 411L3232 417M3233 414L3266 423M3267 420L3309 428M3309 428L3354 434M3353 435L3384 442M3384 441L3406 445M3406 445L3465 456M3465 455L3514 464M3514 464L3534 464M3533 467L3557 470M3557 471L3595 475M3677 492L3701 499M3141 419L3138 438M3127 496L3119 549M3108 605L3099 663M3098 663L3090 710M3089 710L3077 766M3073 803L3067 851M3065 851L3057 900M3056 900L3049 954M3160 427L3213 436M3213 437L3244 443M3244 442L3295 454M3295 451L3319 455M3319 455L3369 467M3369 464L3423 475M3423 474L3475 484M3475 483L3529 490M3528 492L3548 498M3575 500L3625 507M3624 509L3670 515M3670 517L3725 529M3166 423L3157 480M3149 521L3141 557M3142 558L3135 611M3129 631L3129 651M3126 651L3120 682M3110 743L3105 763M3106 763L3094 814M3097 815L3093 849M3091 849L3083 903M3076 936L3068 981M3156 451L3193 459M3193 457L3228 466M3228 464L3275 470M3339 483L3397 493M3397 493L3445 505M3445 502L3484 510M3484 509L3529 517M3529 517L3565 525M3565 523L3592 526M3592 528L3650 538M3650 538L3707 550M3190 427L3182 466M3183 466L3179 489M3172 527L3163 567M3165 567L3156 613M3157 613L3151 652M3150 652L3142 695M3142 695L3137 724M3129 773L3120 822M3120 822L3114 845M3116 845L3108 879M3110 880L3103 934M3100 933L3096 953M3097 953L3090 995M3151 481L3187 489M3187 487L3228 497M3228 494L3256 499M3312 509L3364 518M3364 518L3394 523M3394 524L3446 536M3447 533L3498 542M3533 548L3585 560M3586 557L3632 567M3632 565L3668 572M3219 433L3209 487M3210 487L3199 534M3201 535L3195 574M3194 574L3188 600M3190 600L3187 630M3185 630L3178 675M3177 675L3171 709M3171 709L3168 737M3166 737L3159 791M3156 791L3152 819M3151 819L3146 852M3145 852L3138 892M3131 936L3124 984M3148 499L3193 504M3192 507L3229 512M3229 513L3287 523M3324 530L3349 535M3349 534L3383 538M3383 540L3439 550M3467 555L3491 557M3491 559L3530 569M3531 566L3568 570M3596 578L3630 582M3630 584L3663 589M3663 590L3694 595M3237 436L3233 462M3233 462L3225 504M3221 531L3216 555M3216 555L3212 591M3210 591L3205 622M3205 622L3198 645M3200 646L3195 687M3193 686L3183 743M3183 743L3178 789M3168 828L3166 849M3165 849L3157 902M3155 902L3148 951M3147 951L3142 991M3143 527L3197 538M3197 536L3218 539M3218 540L3257 547M3257 547L3293 554M3293 553L3324 557M3323 559L3355 564M3405 573L3434 578M3434 578L3454 579M3454 582L3497 588M3496 589L3556 597M3555 599L3578 605M3578 604L3627 614M3627 612L3652 617M3652 617L3693 623M3266 441L3257 496M3256 496L3249 538M3248 538L3237 594M3238 595L3234 626M3233 626L3226 671M3225 671L3213 725M3208 768L3200 809M3193 851L3185 894M3176 948L3168 987M3138 552L3183 560M3183 560L3219 565M3219 566L3274 578M3303 581L3344 588M3344 588L3401 599M3401 598L3435 603M3435 604L3472 608M3471 611L3505 618M3528 621L3559 627M3559 626L3590 630M3590 632L3646 639M3646 641L3700 650M3291 445L3283 490M3283 490L3278 520M3278 520L3269 573M3254 653L3244 709M3244 709L3234 767M3234 766L3225 817M3225 817L3217 862M3217 862L3216 882M3205 930L3196 979M3157 579L3209 586M3208 588L3257 594M3257 597L3296 606M3297 604L3337 610M3356 614L3412 621M3411 624L3467 635M3468 634L3518 640M3517 642L3546 645M3580 654L3615 661M3615 660L3648 665M3648 666L3701 673M3314 449L3304 490M3306 490L3297 546M3293 567L3280 625M3283 625L3274 671M3275 671L3272 699M3270 698L3264 742M3262 742L3255 776M3256 777L3250 822M3248 822L3240 852M3243 853L3236 873M3239 873L3235 909M3225 952L3220 986M3131 592L3150 596M3198 604L3228 608M3228 609L3267 615M3267 616L3323 625M3323 626L3378 637M3378 635L3418 644M3419 643L3463 653M3464 651L3486 656M3486 655L3533 664M3534 663L3554 669M3554 667L3590 674M3590 673L3629 680M3629 680L3652 685M3653 684L3678 690M3327 472L3323 505M3321 505L3312 546M3308 582L3298 641M3289 688L3287 713M3285 713L3281 733M3281 733L3270 788M3271 789L3268 810M3268 810L3258 847M3255 881L3248 911M3240 968L3233 1003M3181 632L3235 639M3235 641L3291 652M3291 651L3324 658M3354 662L3380 666M3380 667L3401 669M3401 670L3450 682M3451 679L3476 683M3476 684L3508 691M3508 689L3528 690M3527 693L3559 698M3559 698L3615 708M3615 708L3674 717M3353 502L3346 550M3310 746L3304 778M3297 819L3289 872M3287 872L3278 911M3271 967L3260 1015M3123 639L3155 644M3155 644L3189 648M3213 655L3254 662M3254 662L3288 666M3380 684L3432 693M3432 693L3479 699M3479 701L3516 709M3516 708L3537 709M3536 712L3576 717M3576 719L3604 725M3604 724L3659 731M3377 460L3372 480M3374 481L3367 506M3369 507L3360 560M3360 560L3351 610M3351 610L3350 631M3347 631L3341 673M3340 673L3334 712M3315 817L3307 869M3305 869L3303 896M3301 895L3296 932M3294 932L3293 957M3119 663L3160 672M3160 670L3188 673M3187 675L3216 678M3216 680L3251 687M3252 687L3277 694M3277 691L3315 695M3314 698L3344 704M3344 703L3369 705M3369 707L3418 715M3418 716L3449 722M3449 721L3491 727M3491 729L3535 737M3535 737L3561 739M3561 741L3615 748M3614 750L3648 755M3647 756L3700 766M3402 465L3397 507M3394 507L3389 548M3387 548L3386 568M3384 568L3373 612M3361 694L3355 746M3352 746L3347 765M3349 765L3341 792M3344 793L3335 850M3328 883L3322 925M3321 925L3311 966M3313 966L3304 1017M3113 694L3151 699M3151 701L3184 705M3243 717L3288 723M3338 733L3375 741M3375 740L3404 743M3404 745L3444 754M3444 752L3474 757M3474 757L3499 762M3499 762L3546 768M3546 770L3584 775M3583 777L3628 788M3629 785L3687 792M3433 470L3424 510M3426 510L3423 532M3422 532L3419 562M3416 562L3408 603M3409 603L3399 660M3399 660L3392 683M3390 711L3385 734M3386 734L3375 792M3376 792L3369 832M3369 832L3364 854M3365 854L3353 913M3355 913L3347 944M3349 945L3343 976M3343 976L3340 1005M3110 709L3140 717M3140 715L3181 724M3181 722L3231 729M3231 731L3284 738M3283 740L3342 748M3388 758L3436 764M3436 767L3463 774M3463 772L3487 777M3507 779L3538 787M3538 785L3580 789M3579 792L3623 802M3623 800L3673 809M3438 531L3427 578M3429 579L3416 637M3412 681L3402 717M3405 717L3400 743M3385 832L3378 858M3380 858L3372 896M3374 896L3366 947M3365 946L3353 995M3105 741L3133 747M3133 746L3187 754M3187 755L3209 758M3209 759L3255 768M3256 767L3285 773M3285 773L3342 784M3343 783L3363 788M3363 786L3385 793M3386 790L3413 796M3413 795L3472 805M3472 805L3525 817M3526 815L3559 823M3559 821L3608 831M3609 830L3667 840M3480 478L3471 524M3472 524L3466 558M3460 590L3454 610M3447 665L3439 697M3436 725L3424 776M3427 776L3420 818M3406 895L3398 932M3400 932L3393 960M3395 961L3386 1001M3387 1001L3386 1025M3102 758L3138 768M3139 765L3159 766M3158 768L3189 773M3189 774L3236 783M3236 782L3258 784M3258 786L3296 790M3296 793L3320 794M3365 805L3407 813M3408 812L3446 821M3446 819L3476 822M3504 829L3543 836M3543 836L3572 841M3572 841L3604 844M3603 847L3638 853M3480 576L3476 613M3474 612L3467 636M3470 636L3463 688M3456 714L3447 761M3448 761L3441 813M3439 812L3429 868M3422 905L3412 958M3413 958L3408 990M3408 989L3401 1033M3098 777L3136 785M3137 784L3188 795M3188 793L3246 805M3246 803L3273 806M3346 821L3399 827M3399 830L3457 842M3458 840L3512 847M3565 859L3600 862M3600 865L3656 878M3516 485L3505 531M3500 571L3492 611M3493 611L3488 636M3482 674L3478 704M3477 704L3466 760M3467 760L3458 796M3461 796L3452 837M3453 837L3445 888M3444 888L3439 934M3436 934L3428 992M3426 991L3421 1011M3423 1011L3417 1035M3093 810L3143 819M3143 819L3193 825M3192 828L3229 834M3229 834L3288 843M3288 844L3330 851M3330 852L3364 861M3427 869L3462 872M3461 875L3490 879M3529 887L3570 895M3600 899L3634 905M3549 491L3542 526M3539 548L3532 588M3532 588L3526 631M3518 668L3507 717M3500 765L3490 816M3491 816L3490 836M3488 835L3480 882M3480 882L3473 930M3471 930L3468 955M3467 955L3465 977M3463 977L3460 999M3089 832L3132 839M3132 839L3175 848M3175 847L3216 854M3216 854L3263 864M3263 862L3311 868M3310 871L3334 875M3334 875L3356 880M3393 885L3426 890M3426 891L3451 893M3450 895L3475 901M3475 900L3534 908M3533 910L3591 922M3591 920L3651 929M3557 572L3549 617M3543 648L3539 683M3537 683L3533 715M3531 715L3527 739M3523 763L3517 810M3507 854L3497 904M3493 930L3484 987M3483 987L3473 1045M3085 851L3144 859M3144 861L3197 869M3197 871L3237 877M3237 878L3258 879M3257 881L3287 888M3288 887L3316 889M3315 892L3357 901M3357 899L3383 906M3384 904L3405 907M3405 907L3436 913M3436 913L3456 915M3456 916L3490 924M3490 922L3525 929M3573 937L3614 945M3614 944L3636 948M3590 498L3586 518M3586 518L3576 575M3566 630L3557 680M3549 729L3543 766M3542 766L3534 807M3530 836L3525 856M3527 856L3516 907M3517 908L3515 931M3513 931L3506 976M3502 996L3492 1049M3080 883L3138 895M3163 898L3215 909M3267 916L3322 924M3322 926L3373 934M3373 935L3424 943M3424 944L3459 953M3459 950L3503 956M3503 958L3529 964M3530 962L3557 968M3557 967L3599 974M3599 975L3619 979M3612 558L3606 603M3598 638L3585 695M3588 695L3584 716M3584 716L3577 760M3576 760L3574 783M3572 783L3568 811M3557 869L3545 923M3548 924L3543 949M3543 949L3535 1002M3534 1002L3528 1023M3076 907L3127 914M3127 916L3171 923M3171 923L3214 930M3214 931L3263 943M3263 940L3320 947M3320 950L3358 958M3359 956L3415 963M3468 976L3501 981M3501 982L3535 989M3535 988L3590 997M3638 547L3630 605M3628 605L3625 629M3624 629L3621 651M3620 651L3614 683M3614 684L3613 709M3610 709L3604 753M3602 753L3592 805M3593 806L3583 846M3586 846L3575 902M3576 902L3569 956M3566 955L3563 975M3073 921L3132 931M3132 931L3165 935M3256 953L3305 962M3305 962L3332 968M3332 966L3360 968M3359 971L3392 975M3391 977L3414 978M3414 981L3471 990M3470 991L3492 993M3492 995L3513 1001M3514 998L3570 1009M3592 1012L3640 1023M3660 510L3654 535M3655 535L3648 577M3648 577L3640 606M3643 606L3634 657M3634 657L3624 702M3626 702L3621 738M3619 738L3611 775M3613 775L3605 832M3603 832L3598 866M3597 866L3588 906M3590 906L3581 957M3581 957L3579 982M3576 981L3573 1001M3573 1001L3566 1047M3068 951L3111 959M3111 958L3141 964M3141 964L3199 975M3199 974L3243 982M3243 982L3302 991M3302 992L3357 1004M3357 1002L3410 1011M3410 1011L3450 1020M3474 1022L3507 1029M3507 1028L3539 1031M3538 1034L3592 1045M3592 1043L3645 1054M3689 515L3682 541M3676 591L3669 618M3671 618L3661 663M3651 733L3643 763M3646 763L3639 813M3637 813L3633 849M3631 849L3622 881M3625 881L3619 912M3620 912L3609 954M3612 954L3604 1009M3602 1009L3594 1064M3065 968L3092 976M3092 973L3150 984M3150 983L3181 988M3181 989L3240 999M3239 999L3262 1001M3262 1003L3314 1011M3314 1012L3334 1019M3335 1016L3368 1023M3368 1022L3396 1030M3396 1027L3449 1038M3450 1036L3500 1046M3500 1045L3523 1050M3523 1049L3562 1054M3562 1056L3595 1064M3707 519L3702 548M3702 548L3695 585M3695 585L3688 642M3685 642L3678 697M3676 696L3666 755M3666 755L3655 812M3651 837L3644 878M3644 878L3634 933M3634 933L3630 971M3628 970L3617 1015M3620 1015L3612 1060M3061 992L3095 996M3095 998L3132 1003M3132 1005L3179 1015M3179 1013L3215 1021M3215 1019L3249 1022M3275 1030L3314 1037M3314 1037L3336 1043M3336 1041L3380 1051M3381 1048L3411 1055M3411 1054L3464 1066M3464 1063L3492 1068M3492 1068L3533 1075M3533 1075L3583 1084M3731 523L3725 552M3726 552L3723 582M3715 610L3705 664M3706 664L3704 688M3702 688L3697 723M3696 722L3693 748M3691 748L3685 787M3684 787L3680 820M3669 870L3666 895M3657 939L3648 975M3651 975L3646 996M3644 1017L3641 1039M3640 1038L3634 1085" stroke="#fbfbfb" stroke-width="2.4" fill="none"/>
<clipPath id="ca7"><rect x="3460" y="560" width="222" height="310"/></clipPath>
<path clip-path="url(#ca7)" d="M3230 379L3292 374M3292 373L3359 368M3410 363L3460 356M3461 359L3509 353M3509 354L3577 347M3577 348L3631 346M3631 344L3669 340M3738 334L3770 331M3770 331L3814 329M3814 328L3844 327M3844 325L3885 320M3181 438L3183 489M3185 489L3190 526M3188 526L3192 574M3199 643L3199 677M3202 677L3205 718M3205 718L3207 756M3208 755L3216 814M3214 814L3216 877M3219 876L3225 938M3224 938L3229 984M3230 1007L3235 1069M3233 412L3265 411M3334 403L3365 398M3366 400L3394 401M3394 398L3452 392M3452 393L3500 386M3500 389L3531 383M3600 380L3645 376M3645 376L3707 373M3707 371L3774 365M3774 365L3842 362M3842 359L3888 352M3214 435L3216 476M3218 476L3224 544M3224 544L3230 604M3234 661L3238 698M3237 698L3241 742M3241 742L3244 800M3246 800L3247 828M3248 828L3254 895M3254 895L3257 954M3259 953L3261 987M3262 987L3267 1054M3235 435L3273 429M3273 432L3320 427M3320 428L3389 421M3389 422L3428 416M3428 418L3473 416M3473 414L3499 414M3499 412L3539 411M3539 409L3574 407M3574 405L3611 399M3611 402L3661 396M3692 395L3757 388M3757 389L3796 385M3796 386L3863 379M3237 433L3240 481M3241 481L3244 538M3246 538L3253 603M3252 603L3259 670M3258 670L3265 729M3263 729L3268 758M3270 805L3273 846M3283 959L3288 991M3286 991L3291 1049M3238 465L3272 461M3272 462L3321 460M3321 458L3390 452M3390 452L3436 445M3501 442L3563 438M3562 437L3594 436M3594 434L3661 430M3661 428L3716 421M3717 423L3755 418M3755 420L3786 415M3786 417L3820 412M3821 414L3848 411M3848 412L3877 409M3267 430L3267 456M3269 456L3274 513M3274 513L3280 542M3277 542L3280 598M3292 713L3295 756M3296 756L3301 809M3304 852L3308 903M3311 936L3313 961M3314 961L3319 1012M3318 1012L3319 1040M3240 485L3305 482M3305 479L3355 474M3355 475L3403 469M3404 471L3454 469M3454 466L3519 459M3519 460L3568 458M3568 456L3626 450M3626 451L3690 443M3690 445L3744 438M3744 441L3807 433M3807 435L3855 430M3287 429L3293 479M3299 569L3306 628M3304 628L3312 681M3309 681L3314 741M3314 741L3318 773M3317 773L3320 802M3324 853L3324 877M3332 942L3335 972M3334 972L3339 1024M3339 1024L3340 1056M3272 516L3308 514M3308 513L3362 508M3362 509L3428 505M3427 503L3487 497M3487 498L3520 494M3520 495L3564 489M3564 491L3614 486M3614 486L3643 485M3691 480L3758 475M3758 474L3825 468M3825 468L3857 464M3857 465L3891 460M3321 426L3323 453M3334 580L3339 607M3337 607L3336 634M3342 664L3344 729M3350 756L3352 793M3353 793L3359 835M3357 836L3360 861M3359 861L3363 921M3364 921L3367 944M3366 944L3373 1009M3246 553L3290 550M3325 546L3351 547M3351 544L3400 538M3400 540L3440 537M3492 532L3532 529M3532 528L3598 525M3598 522L3660 518M3660 517L3694 516M3694 514L3754 508M3784 506L3840 502M3840 501L3897 494M3361 490L3363 536M3365 536L3369 569M3368 569L3372 630M3373 630L3379 673M3377 673L3380 707M3380 707L3383 770M3386 770L3389 799M3388 799L3392 853M3393 853L3400 915M3398 915L3403 977M3409 1034L3414 1083M3248 581L3317 575M3317 575L3345 572M3345 572L3399 566M3399 567L3431 565M3431 565L3490 559M3490 559L3518 556M3553 554L3580 549M3580 552L3645 548M3645 546L3682 540M3682 543L3734 539M3734 538L3782 535M3782 534L3838 532M3837 529L3902 526M3383 420L3386 459M3386 459L3389 525M3397 583L3403 627M3409 719L3412 781M3414 781L3417 831M3419 831L3423 853M3421 853L3423 895M3424 895L3427 946M3429 946L3434 993M3433 993L3438 1021M3435 1022L3441 1079M3250 598L3279 597M3279 596L3323 589M3323 592L3390 585M3451 581L3491 579M3491 577L3536 571M3536 573L3574 567M3639 564L3701 558M3701 559L3768 553M3768 553L3807 551M3405 470L3409 521M3412 556L3418 616M3422 669L3422 698M3425 698L3428 741M3428 741L3430 782M3432 782L3437 829M3436 830L3435 854M3443 913L3448 971M3449 971L3453 1029M3454 1029L3457 1074M3252 628L3281 625M3281 626L3309 622M3309 623L3359 620M3359 619L3409 614M3409 615L3468 611M3531 604L3589 599M3589 599L3615 595M3615 597L3675 592M3675 591L3734 587M3734 586L3773 583M3773 583L3837 580M3837 577L3877 572M3430 416L3432 459M3437 496L3441 555M3443 555L3447 601M3447 601L3451 637M3450 637L3453 672M3457 722L3462 783M3462 783L3465 843M3468 842L3472 883M3471 883L3474 942M3476 942L3481 984M3480 984L3486 1042M3283 650L3316 649M3316 647L3375 641M3375 642L3416 640M3416 638L3463 634M3463 634L3496 629M3497 631L3553 625M3553 626L3622 619M3622 620L3654 616M3654 617L3701 613M3701 613L3763 608M3860 599L3899 594M3454 414L3458 475M3459 475L3466 538M3465 538L3471 578M3468 579L3472 642M3474 642L3481 690M3478 690L3479 728M3482 728L3483 774M3485 774L3492 829M3496 895L3501 938M3500 938L3502 980M3504 980L3507 1009M3257 683L3289 678M3289 680L3350 674M3350 675L3382 670M3382 672L3450 669M3449 666L3491 662M3525 660L3572 658M3625 651L3653 647M3653 648L3700 647M3700 644L3732 641M3732 641L3769 638M3769 638L3830 635M3830 633L3892 630M3485 411L3491 478M3491 478L3499 541M3503 618L3506 682M3509 682L3512 734M3513 734L3519 799M3522 832L3529 880M3526 880L3530 916M3533 958L3538 1000M3536 1000L3540 1064M3260 714L3289 710M3289 711L3328 706M3329 708L3368 703M3368 704L3404 699M3404 701L3450 694M3450 697L3511 690M3511 692L3536 692M3536 690L3561 688M3561 688L3614 683M3614 683L3658 677M3658 679L3693 675M3693 676L3745 674M3800 667L3827 664M3827 664L3893 659M3516 409L3522 468M3527 538L3530 572M3541 693L3547 744M3545 744L3549 804M3557 883L3563 919M3560 919L3567 988M3569 1019L3574 1051M3262 742L3307 741M3361 734L3402 730M3402 730L3429 728M3468 724L3527 720M3527 719L3560 717M3560 716L3595 711M3595 713L3649 707M3649 708L3705 702M3705 704L3728 704M3754 699L3805 692M3805 695L3847 694M3846 691L3916 686M3544 406L3552 465M3549 465L3550 506M3555 532L3559 563M3558 564L3564 620M3563 620L3568 682M3568 682L3573 732M3573 732L3574 756M3575 756L3579 819M3580 819L3588 868M3590 924L3595 964M3265 771L3317 765M3318 766L3346 764M3346 764L3371 760M3402 759L3471 754M3471 753L3502 752M3502 750L3528 746M3528 748L3561 746M3599 742L3636 738M3637 738L3696 736M3695 733L3729 729M3729 730L3752 726M3753 728L3812 720M3812 723L3860 720M3860 719L3916 716M3578 464L3578 487M3580 487L3585 551M3589 583L3593 611M3591 611L3595 651M3597 682L3600 743M3603 743L3608 783M3606 783L3612 850M3612 850L3617 901M3621 952L3624 989M3624 989L3626 1013M3626 1013L3635 1076M3336 796L3374 794M3374 792L3432 789M3507 781L3571 777M3668 767L3694 765M3694 764L3728 764M3728 761L3793 754M3794 756L3853 748M3853 751L3921 742M3609 465L3614 492M3623 624L3629 665M3627 665L3634 726M3643 850L3646 881M3646 881L3650 903M3648 904L3654 972M3654 972L3659 1000M3656 1000L3661 1037M3269 825L3312 819M3312 821L3350 815M3384 815L3442 808M3442 810L3489 807M3489 806L3552 799M3613 795L3669 793M3694 788L3750 781M3811 778L3838 778M3627 399L3630 463M3633 463L3641 527M3638 528L3646 595M3644 595L3645 628M3647 627L3651 680M3654 703L3656 755M3658 754L3664 814M3663 814L3665 838M3665 838L3668 901M3671 900L3672 948M3675 948L3677 976M3677 976L3678 1011M3681 1011L3682 1047M3273 860L3311 859M3311 857L3358 852M3427 847L3464 846M3464 843L3501 840M3501 840L3559 837M3559 835L3626 831M3626 829L3676 826M3711 822L3776 817M3776 816L3800 815M3800 814L3866 806M3866 808L3924 803M3662 396L3670 464M3668 464L3671 492M3676 554L3682 604M3686 670L3686 697M3688 697L3692 741M3698 804L3703 864M3707 906L3714 970M3712 970L3716 1008M3275 886L3319 884M3319 882L3366 879M3366 878L3429 873M3429 872L3459 870M3459 870L3515 862M3515 865L3550 860M3550 862L3587 856M3588 858L3623 858M3623 855L3680 850M3680 850L3740 846M3740 845L3796 837M3797 840L3834 838M3834 837L3860 836M3860 835L3884 832M3884 832L3922 828M3693 454L3699 503M3697 503L3697 531M3705 589L3708 617M3707 617L3711 665M3711 665L3717 703M3715 703L3717 729M3717 729L3720 770M3721 770L3722 798M3723 798L3727 862M3737 955L3740 1002M3741 1002L3747 1049M3277 908L3322 904M3353 902L3379 897M3379 899L3411 894M3411 897L3464 894M3464 892L3502 888M3557 884L3588 883M3588 881L3622 878M3622 878L3668 876M3706 871L3762 864M3806 862L3870 857M3870 856L3916 850M3710 392L3716 447M3715 448L3721 510M3721 510L3727 578M3730 613L3732 666M3734 666L3739 704M3738 705L3741 772M3747 816L3748 842M3750 842L3752 895M3754 895L3757 926M3757 926L3763 988M3762 988L3768 1054M3279 933L3320 931M3354 927L3386 925M3386 924L3414 920M3468 917L3518 913M3518 912L3587 904M3587 906L3612 907M3611 904L3678 897M3678 898L3719 894M3719 895L3777 890M3777 890L3810 888M3810 887L3869 884M3869 882L3891 877M3892 880L3946 875M3735 389L3739 414M3742 468L3745 510M3746 510L3751 574M3751 574L3756 634M3759 661L3761 707M3763 707L3765 749M3767 749L3771 788M3772 814L3777 876M3778 876L3785 933M3783 934L3788 1002M3789 1002L3796 1070M3282 969L3304 966M3305 967L3366 963M3366 962L3389 960M3456 954L3517 948M3517 949L3568 946M3567 944L3636 936M3636 938L3685 937M3684 934L3722 932M3722 931L3773 927M3773 926L3806 923M3806 924L3854 919M3892 916L3957 912M3771 386L3776 425M3779 472L3782 515M3783 515L3788 570M3787 570L3787 604M3790 603L3795 659M3795 659L3799 728M3807 796L3811 845M3816 898L3819 927M3819 927L3822 956M3322 987L3383 979M3383 982L3412 979M3412 979L3466 976M3466 975L3512 968M3512 971L3546 968M3546 968L3613 960M3614 962L3661 955M3661 958L3708 954M3707 953L3754 949M3754 949L3781 949M3846 941L3903 936M3792 384L3799 431M3800 476L3805 515M3804 515L3807 571M3809 571L3809 598M3811 597L3818 660M3837 890L3841 925M3840 925L3840 951M3842 951L3842 981M3845 981L3850 1030M3287 1027L3338 1025M3338 1023L3406 1019M3406 1017L3448 1012M3448 1013L3506 1007M3506 1008L3549 1006M3549 1004L3572 1005M3572 1002L3630 996M3631 997L3672 992M3711 990L3736 986M3736 988L3788 985M3788 984L3854 981M3854 978L3917 972M3829 381L3829 404M3831 404L3832 443M3835 442L3834 468M3839 496L3845 539M3843 539L3843 570M3846 569L3852 631M3861 743L3863 791M3865 791L3868 854M3874 892L3880 928M3877 928L3880 971M3881 971L3887 1005M3289 1049L3345 1042M3410 1038L3439 1037M3469 1033L3514 1028M3514 1029L3563 1022M3610 1021L3665 1018M3664 1016L3689 1013M3689 1014L3713 1013M3712 1012L3757 1006M3822 1002L3861 998M3861 999L3897 997M3855 431L3858 484M3860 484L3861 518M3867 571L3872 615M3871 615L3875 670M3876 670L3878 717M3880 717L3886 761M3887 797L3892 853M3892 853L3894 884M3895 884L3896 929M3899 929L3904 998M3291 1075L3360 1068M3360 1069L3406 1068M3406 1065L3461 1063M3461 1061L3526 1057M3592 1049L3658 1044M3768 1034L3822 1032M3822 1029L3864 1028M3864 1025L3904 1024M3904 1022L3963 1016M3877 377L3883 423M3881 423L3886 460M3887 488L3892 537M3894 571L3896 623M3899 622L3900 655M3902 655L3901 684M3904 683L3904 711M3907 711L3908 748M3910 747L3915 797M3914 797L3916 831M3917 831L3918 873M3921 873L3924 943M3927 943L3929 995M3931 994L3934 1028M3294 1102L3331 1098M3331 1099L3396 1096M3396 1093L3438 1090M3438 1090L3508 1085M3508 1084L3569 1076M3570 1078L3639 1075M3639 1072L3684 1068M3684 1068L3721 1067M3720 1065L3785 1060M3785 1059L3839 1056M3904 375L3904 399M3906 399L3912 435M3910 436L3915 479M3919 538L3921 562M3925 612L3927 651M3931 680L3937 728M3935 728L3936 768M3949 883L3953 952M3955 951L3958 998" stroke="#fbfbfb" stroke-width="2.4" fill="none"/>
<clipPath id="ca8"><rect x="3320" y="870" width="180" height="120"/></clipPath>
<path clip-path="url(#ca8)" d="M3258 707L3294 708M3294 707L3339 709M3339 707L3368 707M3368 707L3413 709M3413 707L3435 706M3435 707L3459 706M3459 707L3477 707M3477 707L3500 706M3538 707L3575 706M3187 750L3187 776M3187 807L3186 825M3187 825L3189 847M3187 847L3184 899M3187 899L3187 940M3187 981L3184 1020M3187 1020L3186 1066M3187 1066L3188 1104M3230 734L3280 735M3280 734L3308 736M3337 734L3365 737M3365 734L3406 731M3406 734L3438 734M3438 734L3493 736M3493 734L3545 736M3545 734L3589 732M3214 779L3215 820M3214 820L3214 849M3214 981L3214 1000M3214 1000L3216 1024M3214 1024L3213 1058M3214 1108L3216 1140M3230 756L3249 755M3249 756L3304 759M3304 756L3337 756M3337 756L3358 755M3382 756L3421 757M3421 756L3447 754M3447 756L3488 754M3488 756L3537 759M3537 756L3566 759M3236 750L3236 780M3236 780L3238 818M3236 818L3239 850M3236 850L3236 886M3236 886L3235 911M3236 942L3237 971M3236 1011L3234 1033M3236 1033L3238 1056M3236 1056L3238 1105M3236 1105L3234 1129M3230 773L3278 773M3278 773L3329 772M3329 773L3372 773M3372 773L3405 772M3405 773L3433 772M3433 773L3471 774M3471 773L3522 775M3522 773L3557 775M3557 773L3582 775M3582 773L3603 773M3253 750L3251 770M3253 813L3252 847M3253 887L3250 913M3253 913L3253 965M3253 965L3252 996M3253 996L3255 1020M3253 1020L3252 1074M3253 1074L3255 1104M3253 1104L3256 1152M3230 798L3270 799M3270 798L3295 798M3295 798L3337 796M3337 798L3361 798M3469 798L3520 795M3567 798L3591 800M3278 750L3277 774M3278 774L3276 805M3278 839L3281 858M3278 858L3278 906M3278 906L3280 931M3278 983L3277 1001M3278 1001L3280 1033M3278 1068L3276 1087M3261 816L3301 816M3336 816L3357 818M3357 816L3376 815M3416 816L3453 818M3478 816L3500 817M3532 816L3552 813M3552 816L3586 814M3586 816L3621 818M3296 750L3294 783M3296 783L3297 826M3296 826L3296 848M3296 866L3293 915M3296 915L3295 947M3296 947L3293 980M3296 980L3294 1001M3296 1001L3294 1034M3296 1034L3294 1073M3296 1073L3294 1117M3230 846L3269 846M3269 846L3288 848M3288 846L3321 843M3355 846L3406 849M3406 846L3460 848M3460 846L3487 846M3487 846L3513 849M3513 846L3563 848M3563 846L3607 848M3326 750L3328 799M3326 799L3328 830M3326 830L3326 877M3326 923L3328 974M3326 974L3328 1009M3326 1009L3325 1027M3326 1065L3323 1090M3326 1090L3329 1108M3326 1108L3324 1141M3230 863L3257 863M3290 863L3323 861M3323 863L3368 864M3368 863L3421 861M3454 863L3505 865M3505 863L3534 862M3534 863L3574 864M3574 863L3624 865M3343 794L3343 832M3343 832L3346 877M3343 921L3345 954M3343 954L3346 1008M3343 1008L3343 1060M3343 1060L3343 1082M3343 1082L3345 1113M3230 881L3282 881M3282 881L3310 878M3310 881L3332 879M3332 881L3361 883M3431 881L3457 879M3457 881L3489 884M3489 881L3535 880M3535 881L3580 884M3580 881L3632 883M3361 750L3360 771M3361 771L3359 797M3361 797L3361 833M3361 833L3359 887M3361 887L3364 911M3361 911L3364 959M3361 959L3359 978M3361 1056L3363 1089M3361 1089L3360 1135M3318 904L3363 904M3363 904L3417 905M3417 904L3457 905M3457 904L3493 907M3493 904L3525 907M3525 904L3554 901M3554 904L3576 904M3384 750L3387 789M3384 789L3387 818M3384 897L3385 916M3384 916L3387 935M3384 935L3387 965M3384 990L3386 1021M3384 1048L3382 1068M3384 1068L3383 1121M3230 929L3249 928M3298 929L3334 931M3366 929L3403 927M3449 929L3468 930M3468 929L3517 928M3517 929L3557 928M3409 750L3411 801M3409 801L3408 829M3409 829L3411 879M3409 879L3408 926M3409 972L3408 1012M3409 1012L3411 1041M3409 1065L3410 1098M3230 949L3272 952M3272 949L3294 947M3294 949L3313 949M3313 949L3353 947M3353 949L3375 950M3375 949L3404 948M3404 949L3454 948M3454 949L3501 950M3501 949L3553 948M3553 949L3584 946M3584 949L3615 952M3429 800L3430 825M3429 825L3429 878M3429 957L3430 1005M3429 1005L3426 1054M3429 1103L3428 1121M3266 976L3314 977M3314 976L3338 977M3423 976L3458 975M3458 976L3476 978M3513 976L3542 979M3542 976L3577 979M3577 976L3631 977M3456 750L3456 771M3456 771L3457 817M3456 817L3455 866M3456 866L3458 886M3456 886L3459 905M3456 936L3455 980M3456 980L3455 1028M3456 1028L3457 1064M3456 1064L3459 1113M3269 997L3309 995M3328 997L3365 995M3365 997L3389 997M3389 997L3431 996M3431 997L3463 998M3512 997L3553 1000M3477 750L3475 774M3477 774L3478 793M3477 793L3477 843M3477 861L3478 896M3477 896L3478 947M3477 947L3476 986M3477 986L3477 1008M3477 1008L3479 1037M3477 1037L3476 1056M3477 1056L3479 1093M3477 1093L3479 1125M3230 1016L3262 1015M3262 1016L3285 1013M3285 1016L3324 1014M3324 1016L3372 1015M3372 1016L3423 1014M3423 1016L3450 1015M3450 1016L3469 1013M3469 1016L3491 1018M3491 1016L3521 1015M3558 1016L3582 1014M3582 1016L3613 1014M3496 750L3495 775M3496 775L3495 816M3496 841L3493 869M3496 869L3497 908M3496 908L3496 940M3496 940L3498 992M3496 992L3497 1017M3496 1017L3495 1035M3496 1059L3494 1080M3496 1080L3497 1124M3303 1040L3332 1043M3332 1040L3353 1042M3353 1040L3392 1040M3392 1040L3441 1039M3441 1040L3468 1038M3468 1040L3514 1040M3563 1040L3609 1038M3520 750L3519 800M3520 800L3522 833M3520 833L3522 879M3520 879L3518 927M3520 927L3522 964M3520 964L3523 994M3520 994L3523 1020M3520 1038L3522 1077M3520 1077L3523 1105M3520 1105L3523 1126M3230 1062L3269 1065M3311 1062L3332 1060M3332 1062L3379 1064M3379 1062L3430 1061M3430 1062L3471 1060M3471 1062L3504 1065M3530 1062L3567 1061M3567 1062L3617 1060M3542 750L3541 782M3542 844L3544 863M3542 936L3542 960M3542 994L3544 1047M3542 1047L3545 1076M3542 1105L3543 1125M3230 1088L3248 1085M3248 1088L3273 1087M3273 1088L3295 1086M3451 1088L3479 1086M3479 1088L3497 1088M3497 1088L3541 1086M3541 1088L3574 1089M3574 1088L3592 1089M3568 750L3570 774M3568 774L3566 823M3568 850L3567 895M3568 895L3567 928M3568 928L3568 948M3568 948L3570 1000M3568 1000L3570 1033M3568 1033L3568 1050M3568 1080L3566 1098M3568 1098L3566 1117M3262 1102L3316 1100M3316 1102L3348 1103M3348 1102L3384 1101M3384 1102L3409 1100M3409 1102L3442 1099M3442 1102L3475 1103M3475 1102L3528 1099M3528 1102L3567 1101M3582 750L3583 777M3582 777L3580 797M3582 825L3583 871M3582 871L3582 895M3582 948L3580 985M3582 985L3580 1038M3582 1038L3584 1077M3230 1127L3273 1129M3273 1127L3322 1128M3322 1127L3348 1127M3418 1127L3461 1129M3461 1127L3490 1127M3511 1127L3536 1125M3536 1127L3572 1126M3607 750L3606 774M3607 774L3607 807M3607 845L3607 884M3607 884L3606 922M3607 922L3608 954M3607 954L3607 1008M3607 1008L3606 1028M3607 1028L3607 1067M3230 1148L3279 1147M3279 1148L3302 1149M3302 1148L3334 1150M3334 1148L3353 1149M3353 1148L3401 1149M3469 1148L3516 1147M3516 1148L3544 1146M3628 750L3631 792M3628 792L3627 829M3628 829L3628 881M3628 914L3628 953M3628 953L3631 996M3628 996L3628 1047M3628 1047L3630 1084M3628 1084L3627 1131" stroke="#fbfbfb" stroke-width="2.4" fill="none"/>
<clipPath id="ca9"><rect x="2700" y="940" width="200" height="260"/></clipPath>
<path clip-path="url(#ca9)" d="M2761 686L2809 712M2808 713L2837 730M2837 730L2865 743M2931 784L2964 803M2964 803L2991 822M3099 881L3128 895M2659 688L2643 720M2641 719L2612 774M2610 773L2576 832M2576 832L2549 879M2473 1010L2454 1042M2415 1111L2382 1167M2721 687L2780 723M2781 721L2823 744M2823 745L2858 765M2896 788L2920 802M2920 802L2956 824M2957 823L2996 844M3038 870L3065 885M3065 885L3123 920M2677 699L2651 747M2649 746L2624 787M2625 788L2590 853M2527 958L2514 983M2492 1018L2474 1045M2702 719L2760 751M2888 827L2952 860M3018 901L3073 930M3122 961L3154 978M2634 848L2605 897M2537 1015L2498 1077M2501 1078L2466 1140M2465 1140L2449 1169M2684 751L2741 786M2794 815L2844 846M2845 844L2890 872M2891 871L2958 909M2958 909L3008 935M3007 937L3070 971M2712 786L2676 845M2677 846L2655 879M2657 880L2621 946M2620 945L2606 972M2605 971L2591 995M2591 995L2558 1053M2558 1053L2547 1077M2545 1076L2527 1106M2527 1106L2513 1132M2512 1132L2488 1171M2489 1172L2468 1211M2668 779L2734 815M2894 910L2949 941M2971 955L3029 988M3029 988L3088 1023M3089 1022L3114 1034M2726 828L2698 882M2659 944L2641 980M2639 979L2611 1025M2612 1026L2583 1079M2528 1171L2505 1207M2656 800L2687 818M2687 818L2712 832M2712 833L2763 860M2762 862L2801 881M2800 883L2864 922M2919 952L2969 982M3001 999L3027 1014M3027 1015L3088 1050M3088 1050L3141 1084M2790 764L2756 825M2755 825L2738 859M2736 858L2699 919M2700 920L2661 988M2661 988L2632 1039M2631 1039L2591 1106M2562 1158L2530 1214M2642 824L2669 843M2706 861L2740 880M2764 895L2816 924M2868 955L2921 983M2971 1014L3034 1048M2814 778L2784 832M2783 831L2754 887M2752 886L2734 921M2732 919L2711 960M2660 1044L2632 1099M2629 1098L2602 1144M2603 1144L2564 1206M2648 875L2713 915M2714 913L2746 930M2745 931L2806 964M2805 965L2868 1004M2962 1056L3029 1097M3030 1096L3081 1123M2850 798L2832 825M2834 826L2818 851M2767 941L2755 969M2752 967L2733 1001M2732 1001L2702 1050M2667 1115L2639 1167M2604 1223L2585 1261M2605 887L2639 905M2669 924L2720 951M2829 1016L2859 1035M2860 1034L2914 1066M2914 1065L2966 1097M2967 1096L3032 1131M3031 1133L3056 1145M3055 1146L3113 1182M2877 814L2850 859M2851 859L2834 889M2776 990L2745 1044M2745 1043L2729 1070M2729 1070L2690 1132M2662 946L2728 985M2765 1005L2792 1021M2837 1047L2867 1067M2868 1065L2923 1099M2954 1114L3019 1151M2860 888L2820 953M2822 955L2788 1012M2788 1013L2755 1072M2755 1071L2723 1128M2722 1127L2707 1152M2708 1153L2679 1205M2661 1234L2630 1285M2576 938L2643 980M2645 977L2682 1001M2683 999L2724 1022M2724 1023L2761 1043M2761 1044L2809 1069M2875 1110L2916 1133M2916 1134L2941 1150M2942 1148L3008 1187M3008 1187L3039 1204M2903 887L2870 947M2830 1012L2800 1070M2797 1069L2767 1119M2768 1119L2740 1173M2668 1293L2639 1347M2561 964L2621 1002M2684 1035L2748 1074M2871 1143L2930 1180M2971 1201L3031 1233M2844 1048L2810 1111M2809 1110L2780 1157M2781 1158L2744 1218M2746 1219L2718 1263M2720 1264L2700 1298M2603 1034L2640 1056M2640 1056L2673 1074M2672 1074L2702 1095M2704 1092L2744 1117M2745 1116L2779 1139M2780 1137L2802 1152M2803 1150L2849 1177M2849 1176L2899 1207M2934 1225L3001 1266M2988 879L2975 903M2921 995L2905 1029M2902 1028L2878 1068M2860 1102L2836 1137M2839 1138L2805 1196M2730 1326L2706 1365M2530 1018L2591 1050M2590 1052L2623 1069M2622 1071L2673 1099M2722 1129L2752 1145M2752 1146L2801 1171M2799 1173L2854 1208M2855 1206L2899 1231M2899 1231L2945 1258M2945 1258L2981 1280M2982 935L2949 993M2948 993L2916 1052M2914 1051L2876 1113M2821 1213L2789 1268M2510 1052L2560 1082M2615 1113L2657 1137M2657 1137L2703 1165M2703 1164L2744 1189M2835 1240L2869 1262M2870 1260L2894 1277M2957 1311L3008 1341M3042 910L3002 975M3004 976L2968 1041M2945 1078L2909 1139M2910 1139L2883 1189M2882 1188L2855 1232M2785 1356L2770 1384M2494 1081L2522 1098M2523 1097L2588 1134M2587 1135L2621 1155M2621 1154L2671 1184M2671 1183L2728 1215M2728 1216L2775 1244M2775 1243L2816 1267M2816 1267L2886 1306M3071 926L3059 949M3024 1006L2986 1074M2913 1199L2882 1257M2880 1255L2852 1298M2855 1300L2838 1330M2838 1329L2807 1388M2478 1108L2506 1123M2610 1183L2676 1219M2675 1221L2699 1236M2760 1270L2794 1287M2792 1289L2828 1307M2827 1309L2853 1325M2853 1324L2877 1337M2876 1338L2903 1354M2903 1353L2941 1377M3098 942L3078 974M3039 1042L3015 1087M2984 1138L2950 1193M2952 1194L2932 1231M2897 1289L2884 1313M2849 1371L2834 1403M2464 1133L2512 1163M2513 1162L2553 1182M2552 1184L2609 1215M2648 1239L2700 1266M2699 1268L2759 1302M2824 1341L2892 1379M3065 1055L3029 1112M3032 1114L2994 1178M2994 1178L2961 1235M2962 1235L2940 1277M2938 1276L2921 1305M2885 1368L2850 1427M2449 1158L2516 1199M2517 1197L2542 1210M2682 1293L2732 1320M2731 1321L2774 1343M2826 1376L2855 1394M2855 1393L2913 1425M3106 1044L3073 1103M3072 1103L3048 1143M3033 1170L2999 1229M2999 1229L2965 1294M2962 1293L2951 1318M2909 1385L2886 1427M2431 1190L2496 1225M2495 1227L2536 1250M2535 1250L2588 1277M2587 1280L2649 1314M2648 1315L2699 1342M2698 1344L2741 1368M2741 1369L2767 1383M2823 1416L2882 1450M3180 989L3164 1019M3163 1018L3151 1044M3127 1081L3112 1103M3113 1104L3078 1160M2979 1337L2944 1401M2499 1269L2567 1307M2589 1321L2615 1333M2614 1335L2666 1362M2665 1364L2704 1388M2737 1406L2762 1420M2829 1459L2855 1476M2856 1474L2901 1504M3144 1120L3119 1162M3119 1162L3092 1208M3092 1208L3056 1268M3057 1269L3037 1303M3037 1304L3010 1356M3008 1355L2981 1407M2949 1456L2929 1490" stroke="#fbfbfb" stroke-width="2.4" fill="none"/>
<clipPath id="ca10"><rect x="2900" y="900" width="240" height="280"/></clipPath>
<path clip-path="url(#ca10)" d="M2826 675L2857 681M2966 695L3018 699M3018 702L3082 711M3117 716L3181 725M3181 725L3209 728M3272 738L3307 741M3307 743L3348 748M2728 716L2723 754M2722 754L2714 793M2717 793L2708 842M2704 887L2698 932M2697 932L2694 964M2693 963L2687 1013M2686 1013L2679 1041M2670 1127L2667 1151M2667 1151L2659 1194M2654 1244L2649 1268M2785 698L2847 708M2915 716L2945 718M3007 729L3036 734M3155 750L3204 757M3204 757L3234 763M3235 761L3273 765M3273 766L3334 772M3334 775L3384 783M2756 720L2746 771M2742 817L2731 880M2725 938L2723 961M2713 1026L2706 1062M2702 1105L2694 1144M2696 1144L2691 1173M2687 1210L2682 1242M2682 1242L2673 1296M2781 731L2830 737M2830 737L2852 738M2852 741L2912 748M2911 749L2968 757M2968 757L3022 764M3070 771L3139 782M3139 781L3166 784M3166 785L3205 789M3205 790L3234 794M3297 803L3360 811M2788 725L2782 759M2784 759L2782 793M2779 792L2773 849M2771 848L2766 892M2765 892L2758 952M2757 952L2750 993M2751 993L2744 1049M2739 1075L2730 1127M2721 1204L2720 1231M2717 1230L2715 1253M2714 1253L2709 1299M2777 756L2817 759M2881 770L2907 771M2907 774L2954 781M2954 780L2994 783M2994 786L3025 788M3025 790L3064 796M3183 813L3210 818M3287 827L3321 833M3321 832L3351 835M2814 728L2812 758M2809 758L2805 787M2805 787L2802 820M2791 886L2786 923M2786 923L2781 958M2765 1073L2758 1137M2747 1202L2740 1268M2738 1267L2732 1320M2823 792L2877 801M2945 809L2993 814M2993 816L3024 819M3024 820L3083 830M3083 828L3119 835M3147 837L3207 848M3208 846L3274 857M3303 859L3327 864M3327 862L3383 871M2843 732L2840 764M2838 764L2831 825M2829 825L2822 874M2823 874L2813 926M2806 992L2801 1045M2792 1095L2788 1137M2776 1203L2770 1260M2768 1259L2759 1320M2817 807L2877 818M2878 816L2928 822M2928 823L2989 829M2989 831L3021 836M3021 836L3054 838M3177 858L3202 863M3254 869L3313 878M3313 877L3380 887M2859 735L2853 782M2852 782L2848 823M2846 823L2839 890M2837 890L2830 952M2828 952L2823 990M2823 990L2814 1033M2817 1034L2810 1085M2809 1085L2803 1123M2804 1123L2793 1188M2795 1188L2792 1211M2786 1253L2784 1284M2781 1284L2776 1329M2765 841L2826 852M2826 850L2895 858M2895 859L2960 866M2996 873L3029 876M3028 878L3071 881M3071 884L3120 891M3120 891L3175 898M2899 740L2891 787M2892 787L2888 813M2881 869L2870 927M2873 928L2868 951M2861 1009L2856 1046M2839 1166L2833 1220M2832 1219L2827 1242M2823 1278L2818 1334M2810 862L2838 865M2838 866L2886 874M2886 873L2936 878M2936 880L2964 883M2964 884L3002 889M3002 889L3039 894M3039 895L3063 895M3062 898L3104 902M3152 910L3196 919M3196 917L3219 917M2906 797L2903 826M2891 906L2883 951M2884 951L2873 1015M2866 1082L2860 1119M2861 1119L2857 1152M2856 1152L2849 1195M2850 1195L2841 1250M2842 1250L2837 1293M2836 1293L2827 1362M2818 894L2863 898M2863 900L2904 908M2947 912L3009 918M3008 921L3064 932M3065 929L3117 936M3117 936L3142 939M3142 939L3174 946M3174 944L3217 953M3217 950L3273 957M3273 958L3310 961M3310 963L3336 966M2944 747L2937 807M2935 807L2931 839M2931 839L2926 874M2926 874L2923 907M2913 967L2907 1001M2908 1002L2903 1037M2903 1037L2898 1065M2899 1065L2886 1133M2889 1133L2885 1183M2882 1183L2874 1235M2870 1271L2865 1319M2754 921L2795 925M2795 927L2835 931M2835 933L2859 936M2907 943L2974 951M2974 952L3030 958M3030 960L3080 967M3080 967L3138 972M3138 975L3179 982M3179 981L3204 986M3204 985L3272 992M3271 994L3308 1000M2979 752L2972 800M2960 890L2957 918M2956 918L2954 948M2910 1248L2901 1295M2750 948L2778 954M2778 952L2833 961M2833 959L2891 965M2891 967L2955 979M2956 977L2990 983M2991 981L3047 989M3047 989L3086 998M3086 995L3110 1001M3110 998L3144 1001M3203 1011L3225 1016M3225 1014L3260 1021M3261 1019L3329 1031M3006 755L2999 788M3001 789L2994 816M2984 906L2983 931M2981 931L2973 980M2961 1075L2954 1114M2955 1114L2949 1169M2935 1256L2924 1313M2747 973L2781 979M2847 988L2908 994M2931 999L2963 1003M3015 1011L3081 1022M3081 1020L3108 1022M3108 1024L3163 1035M3164 1032L3209 1039M3275 1048L3322 1051M3025 802L3013 869M2984 1098L2976 1156M2976 1156L2969 1224M2966 1223L2960 1250M2962 1250L2960 1275M2959 1275L2957 1301M2955 1301L2952 1346M2777 1004L2836 1013M2836 1012L2876 1015M2876 1017L2939 1027M2995 1034L3028 1036M3096 1048L3159 1059M3160 1057L3208 1063M3208 1064L3259 1070M3049 816L3041 878M3041 878L3038 916M3029 958L3017 1025M3020 1025L3012 1078M3012 1078L3006 1101M3002 1149L2997 1175M2992 1225L2986 1289M2983 1289L2973 1346M2763 1033L2803 1039M2979 1063L3024 1071M3025 1069L3083 1078M3143 1086L3195 1094M3196 1093L3234 1098M3234 1099L3280 1107M3280 1105L3315 1110M3087 767L3084 810M3074 860L3063 927M3065 927L3059 952M3061 952L3058 994M3055 994L3047 1054M3038 1118L3028 1174M3025 1207L3019 1262M3017 1262L3014 1290M3013 1290L3007 1355M2736 1052L2766 1056M2766 1056L2835 1064M2893 1074L2960 1085M2961 1084L3024 1089M3048 1096L3071 1099M3071 1099L3103 1101M3148 1110L3181 1112M3259 1125L3282 1126M3095 879L3090 910M3090 910L3080 979M3080 979L3073 1036M3063 1103L3057 1146M3057 1146L3050 1189M3051 1189L3048 1212M3048 1212L3040 1253M3042 1253L3033 1306M3034 1306L3028 1351M2732 1078L2789 1083M2841 1093L2865 1095M2994 1114L3042 1120M3041 1121L3090 1125M3134 1134L3164 1138M3227 1147L3262 1149M3262 1152L3286 1157M3286 1155L3336 1165M3135 773L3131 821M3120 885L3113 917M3115 917L3107 973M3107 973L3104 996M3099 1035L3091 1076M3093 1076L3091 1100M3067 1261L3060 1314M3059 1314L3050 1370M2726 1117L2781 1128M2782 1125L2830 1133M2893 1140L2931 1147M2931 1146L2983 1153M3024 1159L3054 1166M3054 1163L3086 1169M3118 1172L3171 1182M3172 1179L3225 1186M3225 1187L3274 1195M3274 1194L3331 1201M3175 779L3166 836M3161 876L3152 943M3152 942L3145 981M3137 1048L3124 1117M3121 1164L3118 1188M3117 1188L3112 1218M3113 1219L3110 1241M3110 1241L3105 1275M3105 1275L3097 1343M2746 1148L2793 1155M2793 1155L2840 1163M2840 1161L2866 1166M2866 1165L2907 1172M2907 1171L2952 1177M2952 1177L2978 1180M2978 1181L3001 1185M3002 1184L3048 1189M3048 1190L3073 1191M3072 1194L3110 1199M3110 1199L3134 1205M3135 1203L3160 1204M3159 1206L3205 1213M3198 819L3193 870M3184 918L3177 945M3180 945L3171 1006M3165 1054L3162 1090M3159 1090L3154 1129M3154 1129L3144 1187M3146 1187L3135 1241M3138 1241L3132 1275M3133 1275L3128 1322M2720 1161L2743 1167M2859 1181L2914 1186M2914 1188L2974 1198M2974 1197L3040 1204M3039 1206L3105 1213M3105 1215L3166 1222M3165 1224L3214 1229M3214 1231L3281 1238M3219 785L3211 840M3211 840L3204 874M3202 908L3195 965M3194 964L3191 996M3190 996L3184 1022M3186 1023L3184 1059M3154 1246L3148 1295M2715 1198L2773 1208M2773 1206L2808 1213M2808 1211L2832 1216M2832 1214L2877 1221M2877 1220L2925 1228M2925 1227L2985 1234M2985 1235L3013 1238M3043 1244L3105 1255M3105 1252L3150 1257M3187 1264L3210 1269M3210 1267L3260 1277M3261 1274L3330 1283M3256 790L3251 826M3251 825L3246 860M3246 860L3236 921M3237 922L3230 972M3230 972L3225 1022M3223 1021L3217 1050M3219 1050L3211 1114M3210 1114L3201 1166M3203 1166L3196 1215M3196 1215L3192 1247M3191 1247L3183 1313M3182 1312L3175 1380M2735 1230L2785 1239M2785 1237L2836 1244M2836 1244L2904 1253M2904 1254L2949 1257M2977 1264L3029 1271M3109 1283L3143 1287M3142 1287L3192 1292M3191 1294L3228 1297M3285 794L3278 845M3272 881L3263 927M3266 927L3259 961M3261 962L3255 1027M3252 1026L3247 1059M3247 1059L3241 1085M3235 1148L3227 1204M3227 1204L3218 1259M3212 1311L3206 1347M2708 1249L2737 1251M2737 1253L2765 1258M2765 1257L2821 1267M2821 1265L2843 1267M2843 1268L2897 1273M2896 1276L2947 1284M2947 1283L2979 1288M3042 1296L3107 1308M3108 1306L3160 1314M3215 1321L3247 1323M3247 1325L3294 1334M3303 829L3295 868M3297 868L3294 892M3286 953L3274 1021M3276 1021L3268 1082M3267 1082L3264 1110M3263 1110L3261 1133M3257 1156L3247 1213M2703 1282L2739 1288M2739 1287L2773 1291M2773 1292L2818 1298M2860 1304L2908 1310M2908 1311L2970 1316M2970 1319L3019 1327M3019 1326L3042 1327M3042 1329L3069 1331M3068 1333L3091 1336M3091 1336L3140 1345M3140 1343L3207 1350M3207 1353L3238 1355M3238 1357L3307 1366M3340 802L3331 844M3334 845L3325 896M3316 971L3312 995M3313 995L3303 1046M3296 1114L3290 1152M3290 1153L3285 1190M3280 1230L3273 1253M2699 1313L2728 1319M2838 1332L2877 1338M2877 1338L2917 1344M2971 1351L3034 1357M3034 1360L3071 1365M3071 1365L3098 1370M3098 1369L3130 1375M3130 1373L3169 1376M3225 1387L3283 1397M3367 834L3360 879M3361 879L3353 942M3352 942L3348 989M3337 1043L3331 1068M3334 1068L3324 1133M3322 1156L3319 1181M3318 1181L3311 1235M2696 1335L2745 1345M2746 1342L2792 1348M2792 1349L2827 1357M2883 1361L2928 1370M2928 1368L2997 1376M2997 1378L3035 1385M3066 1387L3095 1391M3131 1396L3171 1401M3171 1402L3217 1408M3393 810L3390 845M3388 845L3380 911M3379 911L3374 940M3375 940L3366 991M3351 1109L3344 1161M3344 1161L3336 1202M3321 1324L3320 1351" stroke="#fbfbfb" stroke-width="2.4" fill="none"/>
<clipPath id="ca11"><rect x="3140" y="950" width="180" height="240"/></clipPath>
<path clip-path="url(#ca11)" d="M3016 758L3059 760M3059 762L3109 766M3109 766L3129 770M3130 768L3170 770M3170 771L3206 776M3206 774L3229 777M3229 776L3258 780M3258 779L3305 784M3305 783L3341 785M3341 786L3362 788M3362 788L3387 789M3387 790L3411 790M3411 792L3467 800M3468 797L3499 798M2960 805L2953 853M2956 853L2952 897M2949 930L2947 973M2945 973L2941 1032M2936 1080L2931 1131M2931 1131L2927 1175M2925 1207L2920 1245M2921 1245L2919 1297M3014 790L3036 790M3036 792L3072 792M3126 800L3155 801M3155 802L3187 804M3187 805L3237 810M3270 812L3308 816M3328 817L3368 822M3368 821L3404 827M3454 829L3482 833M3482 831L3540 839M2992 808L2989 863M2984 898L2982 926M2982 926L2981 959M2974 1008L2975 1029M2967 1088L2968 1115M2965 1115L2964 1148M2962 1148L2956 1204M2957 1204L2956 1229M3012 812L3034 811M3034 814L3071 815M3071 817L3118 820M3118 821L3173 825M3173 826L3214 827M3213 829L3273 833M3300 837L3339 842M3339 840L3398 845M3398 846L3444 852M3445 850L3493 851M3014 810L3008 843M3000 961L2995 1020M2995 1020L2990 1058M2986 1123L2981 1181M2981 1181L2976 1213M2978 1213L2970 1273M2973 1273L2973 1295M3047 841L3107 844M3107 847L3165 852M3165 852L3199 856M3199 855L3223 858M3280 862L3309 865M3395 872L3422 872M3422 874L3453 878M3453 877L3495 881M3040 812L3040 832M3038 832L3034 870M3035 870L3033 910M3031 910L3029 931M3027 964L3023 1008M3023 1008L3019 1056M3019 1056L3013 1083M3016 1083L3011 1113M3014 1114L3007 1169M3009 1169L3005 1221M3000 1273L2998 1321M3008 852L3030 853M3030 854L3072 860M3072 858L3094 862M3094 860L3133 863M3133 863L3158 864M3158 865L3182 870M3183 868L3227 875M3227 872L3270 877M3270 875L3305 878M3305 878L3345 884M3345 882L3380 882M3379 885L3417 886M3417 888L3450 890M3450 891L3507 894M3049 871L3046 902M3046 902L3041 946M3043 946L3037 987M3036 1020L3033 1079M3031 1078L3030 1108M3020 1205L3018 1252M3016 1252L3009 1297M3005 886L3064 892M3163 900L3204 905M3257 908L3290 913M3291 911L3341 913M3341 915L3393 918M3393 920L3449 922M3449 925L3483 930M3483 928L3515 933M3088 817L3087 838M3086 838L3083 894M3081 894L3075 939M3077 939L3070 989M3072 989L3070 1014M3070 1014L3070 1037M3064 1088L3058 1132M3055 1184L3049 1227M3052 1227L3052 1248M3047 1281L3042 1338M3003 910L3049 912M3048 914L3073 916M3073 916L3121 920M3121 920L3147 923M3148 922L3178 922M3198 927L3246 933M3271 933L3298 936M3298 936L3338 939M3338 939L3397 945M3397 944L3454 947M3453 949L3482 952M3112 819L3108 872M3107 872L3101 917M3103 917L3097 959M3099 959L3096 1000M3096 1000L3094 1044M3092 1043L3086 1082M3089 1082L3088 1109M3086 1109L3086 1134M3084 1134L3080 1188M3079 1187L3072 1246M3001 933L3048 934M3047 937L3092 941M3120 943L3162 948M3162 947L3207 950M3207 951L3238 954M3238 953L3283 955M3283 957L3317 958M3343 963L3376 963M3376 965L3417 966M3416 969L3457 973M3457 973L3492 978M3134 821L3132 875M3126 923L3124 963M3122 963L3117 1011M3118 1012L3118 1038M3115 1038L3114 1075M3112 1075L3109 1111M3109 1111L3107 1144M3106 1144L3102 1163M3105 1163L3100 1194M3102 1194L3103 1214M3100 1213L3096 1237M3098 1237L3096 1279M3094 1279L3090 1303M2999 955L3029 958M3110 964L3159 968M3159 969L3199 972M3199 972L3257 974M3257 977L3311 985M3311 982L3362 986M3362 986L3387 990M3387 988L3422 994M3422 992L3449 992M3449 994L3495 1000M3153 867L3152 887M3148 920L3144 942M3146 942L3142 971M3135 1067L3133 1087M3129 1137L3127 1160M3127 1160L3120 1206M3118 1262L3111 1320M2997 982L3031 983M3031 985L3065 990M3065 988L3089 989M3089 990L3140 997M3140 995L3166 995M3199 1000L3246 1003M3246 1004L3303 1011M3303 1009L3328 1011M3328 1011L3378 1013M3377 1015L3425 1018M3425 1020L3474 1025M3181 856L3176 905M3173 946L3173 982M3170 982L3167 1041M3165 1041L3161 1088M3161 1088L3157 1120M3158 1120L3155 1140M3157 1140L3152 1164M3154 1164L3149 1201M3151 1201L3146 1239M3148 1239L3144 1273M3145 1273L3142 1299M3143 1300L3139 1332M2995 1005L3022 1007M3022 1008L3047 1009M3047 1010L3085 1012M3128 1017L3184 1023M3184 1022L3230 1027M3293 1031L3349 1034M3371 1038L3404 1039M3404 1041L3432 1042M3432 1043L3476 1045M3207 827L3204 857M3204 857L3202 899M3201 899L3197 938M3197 938L3195 977M3191 1009L3190 1052M3187 1052L3179 1109M3177 1169L3176 1206M3174 1206L3170 1226M3172 1226L3170 1276M3168 1276L3168 1307M2993 1025L3020 1027M3020 1027L3066 1031M3066 1031L3092 1031M3092 1033L3145 1035M3145 1038L3176 1042M3176 1041L3225 1045M3225 1045L3267 1047M3267 1048L3287 1051M3287 1050L3308 1055M3308 1052L3344 1056M3344 1055L3365 1057M3365 1057L3411 1061M3411 1061L3437 1063M3437 1063L3486 1069M3220 906L3219 928M3218 927L3215 965M3214 965L3214 987M3213 987L3212 1020M3210 1020L3209 1059M3206 1059L3202 1100M3203 1100L3202 1141M3199 1141L3199 1163M3186 1291L3181 1330M3046 1053L3105 1059M3105 1058L3159 1061M3159 1063L3193 1065M3193 1066L3218 1068M3273 1073L3331 1076M3331 1078L3367 1081M3460 1089L3493 1092M3250 831L3244 876M3246 876L3242 906M3244 906L3238 951M3240 951L3238 975M3238 975L3232 1026M3233 1026L3228 1072M3229 1072L3227 1116M3225 1116L3220 1152M3215 1229L3211 1270M3212 1271L3210 1295M3210 1295L3203 1342M2989 1076L3028 1081M3062 1083L3112 1087M3112 1087L3146 1092M3146 1090L3200 1097M3262 1100L3311 1106M3311 1105L3357 1106M3356 1108L3381 1111M3416 1114L3453 1116M3453 1117L3485 1121M3278 833L3275 855M3276 855L3273 891M3270 929L3264 968M3262 1022L3256 1067M3258 1068L3256 1111M3246 1201L3239 1256M3241 1256L3234 1305M3040 1105L3095 1109M3095 1110L3126 1112M3126 1112L3160 1112M3160 1115L3200 1117M3200 1119L3223 1122M3259 1124L3311 1130M3311 1129L3349 1130M3392 1136L3444 1139M3444 1140L3464 1144M3302 835L3296 877M3298 878L3293 930M3294 930L3292 957M3291 957L3284 1015M3286 1015L3281 1065M3277 1122L3274 1145M3275 1145L3270 1182M3272 1182L3270 1215M3269 1215L3263 1246M3266 1246L3263 1291M3262 1291L3259 1328M2985 1121L3015 1121M3015 1123L3066 1127M3066 1128L3106 1130M3176 1137L3207 1141M3207 1140L3239 1145M3239 1143L3284 1149M3284 1147L3339 1149M3338 1151L3363 1151M3363 1154L3404 1155M3404 1157L3429 1162M3429 1159L3474 1166M3322 837L3320 896M3317 896L3312 940M3313 940L3311 985M3309 985L3307 1011M3307 1011L3305 1068M3302 1068L3301 1096M3300 1096L3296 1126M3297 1126L3290 1183M3292 1183L3289 1237M3287 1237L3282 1284M2983 1141L3033 1145M3033 1145L3087 1149M3087 1150L3145 1154M3197 1160L3248 1162M3248 1164L3301 1169M3340 1172L3369 1177M3416 1179L3441 1178M3441 1181L3471 1182M3343 839L3340 898M3338 897L3334 946M3321 1094L3320 1131M3317 1131L3311 1170M3314 1170L3313 1195M3312 1195L3306 1225M2980 1172L3006 1173M3006 1175L3065 1180M3065 1180L3103 1184M3103 1183L3162 1189M3162 1188L3216 1194M3217 1193L3252 1195M3289 1200L3333 1202M3333 1203L3377 1207M3377 1207L3414 1208M3414 1210L3446 1213M3372 867L3371 902M3369 901L3366 955M3362 979L3360 1022M3359 1022L3356 1079M3354 1078L3353 1105M3351 1105L3350 1143M3344 1190L3341 1219M3339 1241L3335 1260M2978 1192L3024 1194M3023 1196L3065 1201M3065 1200L3090 1202M3090 1202L3125 1206M3156 1208L3209 1210M3209 1212L3233 1214M3233 1214L3279 1218M3331 1223L3355 1224M3409 1230L3450 1234M3394 843L3393 880M3391 879L3384 925M3387 925L3380 970M3375 1062L3370 1107M3371 1107L3368 1133M3361 1220L3358 1273M3356 1273L3349 1331M2976 1215L3025 1221M3025 1219L3067 1222M3067 1223L3096 1228M3096 1226L3124 1231M3154 1231L3199 1235M3199 1235L3233 1235M3321 1245L3373 1248M3373 1250L3403 1254M3403 1253L3448 1258M3448 1256L3506 1259M3417 845L3414 885M3411 911L3412 939M3409 939L3407 976M3401 1034L3395 1070M3397 1070L3395 1112M3394 1111L3392 1132M3392 1131L3385 1181M3384 1218L3382 1254M3381 1254L3375 1312M2974 1237L3008 1240M3008 1240L3038 1245M3039 1242L3097 1246M3097 1247L3135 1248M3134 1251L3159 1251M3159 1253L3185 1255M3185 1255L3244 1259M3244 1260L3290 1265M3290 1264L3319 1268M3319 1267L3354 1267M3353 1270L3406 1277M3407 1274L3457 1279M3433 906L3428 938M3431 939L3429 970M3428 970L3426 993M3426 993L3420 1050M3418 1081L3412 1133M3414 1133L3412 1167M3411 1167L3408 1215M3406 1215L3406 1235M2972 1262L2994 1266M2994 1263L3026 1266M3026 1266L3052 1269M3052 1269L3089 1270M3089 1272L3127 1274M3161 1278L3201 1283M3201 1282L3252 1284M3252 1286L3306 1291M3334 1293L3354 1298M3354 1295L3397 1301M3397 1299L3434 1304M3434 1302L3460 1302M3463 850L3459 893M3453 965L3450 1014M3443 1083L3439 1131M3439 1131L3434 1154M3437 1154L3434 1185M3434 1185L3427 1235M3430 1235L3430 1257M3428 1257L3423 1299M2970 1286L3003 1287M3003 1289L3027 1289M3050 1293L3103 1299M3103 1298L3149 1302M3149 1302L3204 1305M3204 1307L3246 1309M3246 1310L3296 1313M3296 1315L3336 1318M3392 1323L3413 1323M3437 1327L3492 1332M3488 852L3484 896M3484 896L3481 929M3481 930L3478 960M3477 982L3471 1029M3472 1029L3470 1051M3470 1051L3466 1107M3466 1107L3462 1140M3463 1140L3460 1197M3458 1197L3456 1221M3456 1221L3451 1272M3449 1301L3445 1355M2968 1310L2994 1313M2994 1312L3014 1311M3014 1314L3073 1320M3074 1319L3107 1320M3106 1322L3160 1325M3159 1327L3208 1332M3208 1331L3249 1333M3249 1334L3276 1335M3275 1337L3309 1340M3309 1340L3337 1340M3336 1342L3386 1349M3386 1346L3433 1350M3433 1350L3458 1353M3512 854L3507 887M3509 887L3504 913M3506 913L3505 957M3503 957L3499 994M3496 1033L3491 1080M3492 1080L3491 1123M3485 1157L3479 1204M3481 1204L3477 1246M3477 1246L3473 1275M3472 1309L3469 1330M3470 1330L3469 1353M2966 1337L3023 1343M3023 1342L3048 1341M3101 1348L3133 1349M3229 1360L3256 1361M3255 1362L3277 1363M3277 1364L3337 1368M3336 1369L3372 1372M3431 1377L3483 1381M3538 856L3534 889M3536 889L3530 945M3531 945L3531 971M3528 971L3527 998M3526 998L3522 1049M3522 1049L3521 1074M3519 1074L3515 1102M3517 1102L3516 1145M3513 1145L3509 1171M3511 1171L3507 1228M3501 1283L3497 1303M3497 1329L3492 1377" stroke="#fbfbfb" stroke-width="2.4" fill="none"/>
<clipPath id="ca12"><rect x="3320" y="990" width="362" height="200"/></clipPath>
<path clip-path="url(#ca12)" d="M3242 703L3284 700M3284 703L3328 701M3328 703L3390 705M3390 703L3417 700M3417 703L3478 701M3478 703L3500 700M3500 703L3535 701M3535 703L3560 700M3635 703L3670 702M3670 703L3732 702M3732 703L3760 702M3760 703L3784 703M3835 703L3881 703M3114 728L3111 771M3114 771L3115 823M3114 857L3113 911M3114 911L3116 956M3114 956L3113 990M3114 990L3117 1021M3114 1021L3115 1066M3114 1066L3112 1119M3114 1119L3115 1151M3114 1151L3111 1179M3114 1179L3112 1200M3114 1259L3111 1297M3114 1297L3111 1327M3114 1327L3114 1390M3139 732L3167 732M3200 732L3245 732M3245 732L3308 730M3308 732L3350 731M3388 732L3444 730M3444 732L3473 732M3473 732L3495 730M3495 732L3543 734M3543 732L3584 731M3608 732L3670 733M3670 732L3723 734M3723 732L3762 733M3762 732L3820 735M3820 732L3850 730M3143 728L3142 761M3143 761L3144 783M3143 783L3143 806M3143 806L3142 833M3143 833L3143 891M3143 951L3141 982M3143 982L3141 1044M3143 1044L3143 1086M3143 1086L3145 1124M3143 1124L3145 1173M3143 1173L3141 1207M3143 1207L3140 1230M3143 1230L3145 1255M3143 1255L3146 1280M3143 1280L3144 1340M3143 1340L3143 1401M3143 1401L3146 1454M3139 753L3182 751M3182 753L3247 755M3247 753L3275 755M3275 753L3327 751M3327 753L3365 752M3365 753L3414 751M3476 753L3508 755M3508 753L3565 750M3565 753L3614 752M3614 753L3667 752M3667 753L3728 754M3728 753L3759 752M3759 753L3820 751M3820 753L3880 751M3164 728L3163 758M3164 758L3165 791M3164 819L3166 880M3164 880L3166 924M3164 924L3166 988M3164 988L3162 1009M3164 1009L3161 1033M3164 1033L3163 1060M3164 1060L3165 1112M3164 1172L3166 1216M3164 1216L3163 1272M3164 1301L3161 1358M3164 1358L3165 1393M3164 1393L3165 1421M3164 1421L3162 1459M3139 782L3198 780M3198 782L3252 785M3307 782L3329 781M3329 782L3372 780M3465 782L3501 782M3501 782L3553 782M3596 782L3627 780M3627 782L3670 784M3670 782L3699 780M3747 782L3772 784M3772 782L3800 784M3800 782L3825 780M3825 782L3879 780M3193 728L3195 751M3193 751L3193 804M3193 804L3194 840M3193 840L3196 879M3193 879L3195 938M3193 970L3196 1024M3193 1024L3194 1074M3193 1096L3193 1148M3193 1188L3190 1244M3193 1296L3191 1336M3193 1365L3195 1413M3139 807L3174 808M3174 807L3225 804M3225 807L3250 804M3250 807L3302 804M3302 807L3365 805M3365 807L3403 804M3403 807L3430 807M3493 807L3514 808M3514 807L3536 806M3566 807L3609 805M3673 807L3695 808M3742 807L3771 807M3771 807L3834 805M3218 728L3219 757M3218 757L3217 818M3218 818L3215 867M3218 867L3220 892M3218 892L3216 950M3218 950L3221 1006M3218 1006L3216 1061M3218 1088L3220 1121M3218 1121L3216 1151M3218 1218L3217 1246M3218 1246L3219 1278M3218 1278L3216 1341M3218 1341L3219 1385M3218 1385L3217 1442M3218 1442L3215 1503M3139 829L3184 828M3184 829L3207 829M3207 829L3250 826M3250 829L3289 831M3289 829L3343 830M3343 829L3378 828M3378 829L3432 828M3432 829L3493 832M3493 829L3534 829M3560 829L3593 827M3593 829L3637 826M3637 829L3666 830M3666 829L3695 828M3695 829L3725 829M3725 829L3749 831M3792 829L3826 831M3826 829L3868 829M3240 728L3238 785M3240 785L3240 827M3240 862L3237 909M3240 966L3243 1025M3240 1056L3242 1081M3240 1081L3238 1123M3240 1123L3238 1179M3240 1179L3241 1218M3240 1218L3238 1271M3240 1271L3241 1318M3139 856L3196 858M3196 856L3235 856M3235 856L3285 859M3285 856L3343 856M3343 856L3374 855M3374 856L3426 854M3426 856L3466 856M3466 856L3526 859M3526 856L3549 856M3549 856L3587 858M3587 856L3632 855M3632 856L3691 854M3691 856L3732 857M3732 856L3772 857M3772 856L3814 854M3267 728L3267 765M3267 765L3269 799M3267 799L3270 862M3267 889L3270 912M3267 912L3269 961M3267 961L3270 1020M3267 1020L3270 1073M3267 1073L3268 1107M3267 1154L3268 1214M3267 1214L3268 1268M3267 1268L3267 1301M3267 1301L3266 1365M3139 877L3186 878M3186 877L3243 878M3243 877L3282 876M3282 877L3338 875M3338 877L3372 877M3372 877L3397 876M3397 877L3455 880M3455 877L3479 880M3479 877L3541 876M3541 877L3589 878M3589 877L3647 877M3647 877L3687 878M3687 877L3744 875M3744 877L3797 879M3797 877L3835 876M3835 877L3896 879M3288 728L3287 767M3288 767L3286 800M3288 800L3290 861M3288 861L3289 898M3288 1033L3288 1074M3288 1074L3289 1110M3288 1110L3291 1165M3288 1207L3290 1266M3288 1266L3288 1291M3288 1387L3286 1418M3288 1418L3291 1455M3139 907L3192 905M3192 907L3224 905M3224 907L3271 904M3271 907L3336 908M3336 907L3389 910M3389 907L3452 904M3452 907L3516 910M3516 907L3569 905M3569 907L3615 910M3615 907L3671 905M3671 907L3723 910M3723 907L3748 909M3787 907L3836 909M3836 907L3888 908M3318 728L3317 751M3318 841L3315 872M3318 922L3320 984M3318 984L3317 1028M3318 1028L3319 1090M3318 1090L3316 1142M3318 1142L3320 1181M3318 1181L3315 1228M3318 1228L3318 1253M3318 1253L3318 1278M3318 1278L3320 1310M3318 1310L3317 1345M3318 1345L3316 1372M3318 1372L3320 1419M3318 1419L3319 1467M3139 940L3187 939M3187 940L3227 941M3227 940L3285 938M3285 940L3324 940M3324 940L3383 938M3440 940L3476 942M3476 940L3512 941M3512 940L3538 943M3538 940L3592 941M3592 940L3623 940M3623 940L3651 940M3697 940L3722 939M3757 940L3789 940M3789 940L3823 941M3351 728L3353 792M3351 792L3349 829M3351 829L3353 870M3351 870L3349 904M3351 904L3352 957M3351 1080L3349 1127M3351 1160L3350 1213M3351 1213L3350 1261M3351 1261L3350 1291M3351 1291L3351 1332M3351 1332L3352 1377M3351 1377L3353 1429M3139 957L3163 957M3163 957L3209 960M3209 957L3255 958M3255 957L3300 957M3327 957L3383 955M3383 957L3419 957M3419 957L3462 960M3462 957L3497 957M3497 957L3544 958M3544 957L3582 957M3582 957L3645 955M3645 957L3707 954M3707 957L3756 957M3756 957L3812 955M3812 957L3842 955M3842 957L3877 957M3368 728L3366 792M3368 851L3368 907M3368 907L3370 956M3368 979L3368 1035M3368 1035L3368 1096M3368 1096L3370 1142M3368 1142L3367 1205M3368 1266L3371 1312M3368 1312L3369 1338M3368 1338L3365 1379M3368 1379L3367 1432M3368 1432L3365 1471M3139 987L3170 984M3225 987L3287 988M3287 987L3318 985M3318 987L3380 986M3380 987L3424 986M3424 987L3469 986M3469 987L3526 987M3526 987L3565 985M3565 987L3628 989M3628 987L3673 990M3673 987L3723 986M3723 987L3762 989M3762 987L3817 990M3817 987L3864 989M3398 752L3400 790M3398 790L3397 844M3398 844L3400 906M3398 970L3400 1033M3398 1033L3399 1070M3398 1070L3399 1106M3398 1106L3395 1135M3398 1135L3398 1171M3398 1219L3398 1254M3398 1284L3397 1313M3398 1313L3398 1343M3398 1382L3398 1416M3398 1416L3397 1455M3139 1013L3183 1011M3183 1013L3230 1011M3230 1013L3264 1011M3264 1013L3302 1013M3302 1013L3325 1016M3325 1013L3370 1015M3370 1013L3431 1014M3431 1013L3492 1013M3492 1013L3544 1015M3544 1013L3574 1013M3574 1013L3610 1014M3610 1013L3636 1015M3636 1013L3663 1015M3663 1013L3689 1015M3689 1013L3711 1011M3711 1013L3742 1014M3742 1013L3806 1012M3806 1013L3835 1011M3835 1013L3884 1011M3424 791L3422 854M3424 854L3425 892M3424 938L3424 987M3424 987L3426 1009M3424 1009L3422 1034M3424 1094L3427 1149M3424 1149L3423 1213M3424 1213L3425 1234M3424 1234L3426 1257M3424 1257L3423 1291M3424 1291L3423 1319M3424 1319L3426 1371M3424 1371L3423 1396M3424 1396L3422 1454M3139 1033L3186 1034M3186 1033L3212 1034M3212 1033L3260 1033M3260 1033L3317 1033M3317 1033L3350 1033M3350 1033L3378 1035M3378 1033L3416 1032M3416 1033L3474 1030M3474 1033L3534 1031M3579 1033L3607 1034M3607 1033L3665 1031M3665 1033L3690 1032M3690 1033L3747 1034M3747 1033L3792 1034M3792 1033L3849 1032M3849 1033L3894 1031M3444 728L3441 782M3444 826L3443 870M3444 870L3442 930M3444 930L3446 980M3444 980L3443 1012M3444 1012L3445 1035M3444 1058L3441 1106M3444 1106L3443 1137M3444 1170L3446 1229M3444 1229L3445 1288M3444 1288L3444 1318M3444 1318L3442 1375M3444 1375L3441 1417M3444 1417L3441 1462M3139 1069L3201 1067M3201 1069L3224 1067M3224 1069L3252 1069M3252 1069L3299 1069M3299 1069L3329 1072M3329 1069L3372 1070M3372 1069L3430 1070M3430 1069L3482 1072M3482 1069L3515 1070M3515 1069L3543 1066M3589 1069L3647 1071M3647 1069L3681 1069M3681 1069L3743 1072M3743 1069L3803 1070M3803 1069L3853 1072M3853 1069L3884 1071M3480 789L3480 841M3480 841L3479 892M3480 959L3481 1009M3480 1009L3479 1056M3480 1056L3483 1113M3480 1113L3482 1144M3480 1191L3483 1234M3480 1262L3481 1316M3480 1316L3482 1338M3480 1338L3481 1365M3480 1365L3482 1430M3480 1430L3477 1457M3139 1084L3163 1087M3163 1084L3193 1081M3193 1084L3234 1085M3234 1084L3287 1085M3287 1084L3327 1087M3430 1084L3457 1086M3457 1084L3520 1086M3520 1084L3552 1086M3552 1084L3597 1081M3597 1084L3653 1083M3653 1084L3674 1082M3674 1084L3738 1081M3790 1084L3829 1083M3829 1084L3882 1083M3495 728L3495 789M3495 789L3493 818M3495 931L3493 993M3495 993L3498 1031M3495 1031L3497 1087M3495 1113L3498 1151M3495 1151L3494 1186M3495 1186L3495 1212M3495 1212L3497 1254M3495 1254L3496 1314M3495 1314L3496 1336M3495 1336L3495 1373M3495 1435L3494 1477M3139 1110L3166 1112M3166 1110L3202 1110M3202 1110L3223 1111M3223 1110L3284 1108M3284 1110L3343 1111M3398 1110L3429 1111M3429 1110L3465 1112M3465 1110L3507 1110M3507 1110L3566 1113M3566 1110L3629 1112M3655 1110L3709 1110M3743 1110L3774 1111M3774 1110L3833 1108M3833 1110L3875 1113M3521 728L3521 784M3521 784L3521 813M3521 813L3520 858M3521 858L3519 894M3521 951L3520 993M3521 993L3524 1023M3521 1077L3521 1132M3521 1132L3523 1159M3521 1159L3523 1186M3521 1207L3519 1246M3521 1246L3524 1311M3521 1373L3524 1398M3521 1398L3520 1453M3139 1136L3192 1137M3192 1136L3237 1137M3237 1136L3299 1139M3299 1136L3353 1136M3353 1136L3380 1133M3380 1136L3402 1134M3434 1136L3487 1137M3530 1136L3580 1137M3580 1136L3631 1135M3631 1136L3662 1135M3662 1136L3693 1138M3693 1136L3723 1134M3753 1136L3817 1137M3817 1136L3873 1139M3547 728L3547 755M3547 755L3547 810M3547 810L3548 844M3547 889L3550 928M3547 1027L3547 1068M3547 1068L3549 1094M3547 1094L3548 1142M3547 1142L3549 1190M3547 1190L3547 1215M3547 1215L3547 1278M3547 1278L3547 1331M3547 1331L3549 1369M3547 1369L3547 1412M3547 1412L3548 1463M3139 1168L3183 1168M3245 1168L3303 1169M3303 1168L3355 1169M3383 1168L3425 1169M3425 1168L3473 1168M3508 1168L3539 1170M3539 1168L3589 1167M3589 1168L3651 1169M3651 1168L3698 1166M3698 1168L3744 1166M3744 1168L3788 1169M3788 1168L3817 1170M3817 1168L3858 1167M3858 1168L3921 1171M3579 728L3577 775M3579 824L3579 878M3579 878L3580 903M3579 903L3581 950M3579 950L3580 1007M3579 1007L3578 1055M3579 1160L3581 1198M3579 1198L3579 1256M3579 1256L3580 1312M3579 1312L3582 1364M3579 1364L3580 1423M3579 1423L3581 1481M3139 1191L3178 1189M3178 1191L3242 1191M3242 1191L3281 1189M3281 1191L3321 1193M3321 1191L3363 1190M3406 1191L3436 1189M3512 1191L3564 1189M3586 1191L3628 1189M3628 1191L3656 1189M3656 1191L3704 1193M3746 1191L3774 1192M3774 1191L3821 1191M3821 1191L3842 1189M3842 1191L3881 1189M3602 728L3605 775M3602 809L3599 832M3602 832L3604 886M3602 886L3602 929M3602 987L3600 1038M3602 1038L3601 1075M3602 1075L3601 1099M3602 1184L3600 1234M3602 1283L3600 1342M3602 1364L3601 1426M3602 1426L3602 1483M3139 1218L3179 1215M3179 1218L3210 1219M3210 1218L3255 1217M3255 1218L3285 1216M3345 1218L3375 1217M3397 1218L3427 1217M3489 1218L3526 1220M3526 1218L3581 1220M3581 1218L3608 1217M3608 1218L3646 1220M3675 1218L3701 1216M3763 1218L3821 1216M3846 1218L3880 1218M3629 728L3631 751M3629 751L3629 805M3629 805L3627 852M3629 852L3629 912M3629 912L3628 944M3629 944L3630 981M3629 1035L3631 1089M3629 1089L3631 1117M3629 1117L3627 1143M3629 1143L3629 1179M3629 1179L3627 1238M3629 1238L3628 1300M3629 1300L3628 1340M3629 1340L3626 1377M3629 1441L3629 1499M3139 1247L3195 1249M3195 1247L3234 1246M3234 1247L3267 1246M3267 1247L3304 1245M3366 1247L3426 1246M3426 1247L3469 1249M3516 1247L3559 1247M3559 1247L3615 1249M3615 1247L3643 1247M3643 1247L3697 1245M3697 1247L3739 1249M3739 1247L3793 1246M3793 1247L3842 1246M3842 1247L3877 1249M3658 728L3657 777M3658 777L3656 812M3658 812L3660 838M3658 838L3656 901M3658 901L3658 923M3658 923L3660 988M3658 1045L3659 1109M3658 1109L3661 1174M3658 1174L3657 1226M3658 1226L3659 1267M3658 1267L3657 1308M3658 1308L3658 1333M3658 1333L3661 1354M3658 1354L3655 1383M3658 1383L3655 1410M3658 1410L3657 1431M3658 1431L3657 1482M3139 1272L3178 1271M3215 1272L3279 1271M3279 1272L3340 1269M3340 1272L3373 1274M3373 1272L3438 1274M3438 1272L3474 1272M3474 1272L3515 1270M3515 1272L3562 1272M3562 1272L3596 1269M3596 1272L3619 1273M3619 1272L3644 1273M3644 1272L3696 1273M3696 1272L3734 1271M3734 1272L3795 1271M3795 1272L3828 1273M3828 1272L3891 1272M3683 728L3685 752M3683 810L3684 832M3683 832L3681 891M3683 891L3685 945M3683 945L3684 997M3683 997L3680 1025M3683 1025L3685 1052M3683 1052L3680 1092M3683 1092L3683 1119M3683 1119L3686 1174M3683 1174L3681 1195M3683 1195L3681 1245M3683 1245L3680 1302M3683 1302L3685 1339M3683 1339L3681 1387M3683 1387L3683 1414M3683 1414L3683 1465M3163 1297L3211 1296M3259 1297L3306 1297M3306 1297L3327 1296M3327 1297L3381 1295M3381 1297L3437 1299M3437 1297L3485 1295M3485 1297L3517 1294M3517 1297L3573 1298M3573 1297L3613 1295M3613 1297L3659 1294M3659 1297L3723 1296M3723 1297L3745 1295M3783 1297L3837 1298M3837 1297L3889 1298M3708 728L3705 780M3708 780L3706 843M3708 843L3706 871M3708 871L3706 912M3708 989L3708 1028M3708 1028L3706 1079M3708 1079L3707 1127M3708 1127L3710 1183M3708 1183L3709 1248M3708 1248L3707 1289M3708 1387L3707 1434M3708 1434L3705 1491M3139 1323L3194 1322M3194 1323L3238 1321M3238 1323L3267 1326M3267 1323L3321 1321M3321 1323L3363 1325M3363 1323L3428 1324M3428 1323L3466 1323M3519 1323L3569 1321M3609 1323L3656 1326M3656 1323L3700 1324M3700 1323L3724 1323M3724 1323L3783 1322M3783 1323L3828 1324M3828 1323L3866 1324M3734 728L3734 773M3734 824L3736 884M3734 884L3736 927M3734 1006L3732 1033M3734 1033L3737 1074M3734 1099L3734 1161M3734 1274L3736 1308M3734 1420L3733 1447M3734 1447L3735 1495M3139 1346L3185 1346M3185 1346L3240 1344M3301 1346L3357 1348M3357 1346L3416 1348M3416 1346L3449 1345M3483 1346L3545 1346M3545 1346L3569 1344M3569 1346L3617 1345M3617 1346L3643 1346M3643 1346L3680 1346M3680 1346L3710 1347M3710 1346L3739 1349M3739 1346L3799 1347M3799 1346L3830 1347M3830 1346L3886 1344M3757 728L3755 789M3757 789L3760 836M3757 836L3758 870M3757 870L3760 916M3757 963L3755 987M3757 1143L3756 1200M3757 1200L3760 1243M3757 1243L3758 1306M3757 1342L3760 1375M3757 1375L3758 1408M3139 1373L3174 1376M3174 1373L3231 1376M3231 1373L3264 1375M3303 1373L3326 1371M3326 1373L3375 1371M3375 1373L3399 1376M3399 1373L3460 1372M3460 1373L3519 1372M3519 1373L3555 1374M3555 1373L3610 1372M3610 1373L3646 1376M3646 1373L3700 1371M3700 1373L3743 1371M3743 1373L3773 1374M3773 1373L3818 1373M3818 1373L3870 1371M3784 728L3782 749M3784 820L3787 852M3784 852L3784 912M3784 912L3787 971M3784 971L3782 1001M3784 1001L3787 1063M3784 1063L3784 1091M3784 1091L3786 1137M3784 1137L3783 1192M3784 1192L3782 1221M3784 1221L3785 1276M3784 1276L3784 1305M3784 1305L3783 1331M3784 1368L3786 1407M3784 1407L3785 1448M3784 1448L3785 1469M3139 1398L3196 1398M3196 1398L3255 1398M3255 1398L3319 1399M3319 1398L3362 1399M3362 1398L3427 1395M3427 1398L3453 1399M3453 1398L3500 1400M3500 1398L3565 1400M3565 1398L3591 1401M3591 1398L3652 1395M3652 1398L3680 1395M3680 1398L3731 1399M3731 1398L3791 1396M3791 1398L3841 1396M3841 1398L3876 1401M3809 728L3811 770M3809 825L3807 887M3809 887L3806 945M3809 945L3808 973M3809 973L3810 1028M3809 1028L3807 1090M3809 1122L3809 1159M3809 1231L3808 1263M3809 1263L3808 1309M3809 1309L3807 1349M3809 1349L3809 1409M3809 1409L3810 1439M3809 1439L3807 1469M3139 1425L3192 1427M3192 1425L3244 1424M3244 1425L3278 1424M3278 1425L3310 1423M3310 1425L3350 1426M3350 1425L3397 1422M3397 1425L3419 1426M3419 1425L3470 1424M3498 1425L3557 1425M3557 1425L3582 1422M3582 1425L3608 1425M3608 1425L3656 1427M3680 1425L3740 1427M3740 1425L3767 1423M3767 1425L3816 1427M3860 1425L3900 1424M3836 728L3837 762M3836 821L3833 881M3836 881L3838 911M3836 911L3838 946M3836 979L3835 1023M3836 1023L3836 1083M3836 1083L3836 1105M3836 1105L3834 1133M3836 1167L3838 1224M3836 1224L3833 1284M3836 1306L3836 1329M3836 1383L3835 1447M3139 1449L3165 1450M3165 1449L3221 1447M3221 1449L3263 1447M3329 1449L3357 1449M3357 1449L3422 1452M3481 1449L3514 1451M3514 1449L3567 1448M3567 1449L3600 1448M3626 1449L3651 1450M3651 1449L3715 1446M3715 1449L3775 1450M3775 1449L3837 1447M3837 1449L3863 1449M3863 1449L3893 1451M3860 728L3857 752M3860 752L3859 781M3860 781L3858 813M3860 813L3863 849M3860 990L3857 1050M3860 1050L3861 1111M3860 1141L3858 1181M3860 1181L3858 1209M3860 1231L3859 1273M3860 1301L3858 1341M3860 1341L3859 1379M3860 1438L3858 1472M3139 1478L3168 1477M3168 1478L3213 1480M3213 1478L3244 1477M3244 1478L3296 1481M3479 1478L3538 1479M3538 1478L3592 1476M3643 1478L3685 1478M3685 1478L3720 1478M3720 1478L3759 1479M3759 1478L3784 1481M3784 1478L3833 1481M3833 1478L3889 1478M3889 728L3889 764M3889 827L3888 865M3889 865L3888 918M3889 918L3889 958M3889 958L3889 983M3889 983L3889 1044M3889 1106L3887 1145M3889 1145L3889 1197M3889 1283L3892 1338" stroke="#fbfbfb" stroke-width="2.4" fill="none"/>
<clipPath id="ca13"><rect x="2640" y="1250" width="260" height="190"/></clipPath>
<path clip-path="url(#ca13)" d="M2567 997L2639 1007M2639 1009L2671 1018M2671 1015L2750 1032M2803 1038L2832 1041M2831 1043L2900 1058M2950 1064L3011 1072M3010 1075L3090 1088M2512 1036L2505 1084M2494 1137L2479 1218M2480 1218L2466 1294M2450 1387L2448 1414M2426 1523L2415 1590M2562 1029L2624 1038M2695 1053L2751 1062M2804 1072L2835 1075M2889 1087L2967 1101M2967 1101L3006 1106M3006 1108L3062 1119M3062 1117L3128 1131M2508 1246L2505 1276M2494 1327L2486 1387M2609 1081L2648 1090M2649 1088L2683 1091M2683 1094L2753 1108M2754 1106L2836 1122M2941 1139L3005 1149M3005 1150L3051 1157M3051 1158L3097 1166M2586 1049L2578 1089M2579 1089L2571 1139M2570 1139L2557 1218M2556 1218L2544 1284M2545 1284L2536 1343M2534 1343L2529 1372M2511 1475L2497 1548M2597 1114L2642 1122M2743 1140L2813 1150M2812 1152L2873 1161M2873 1163L2920 1170M2920 1171L3003 1186M3003 1186L3063 1199M2621 1055L2616 1092M2614 1092L2606 1142M2605 1142L2601 1172M2591 1223L2586 1260M2658 1156L2705 1166M2705 1164L2745 1170M2745 1171L2772 1176M2772 1176L2849 1192M2955 1208L2996 1213M2644 1099L2641 1132M2600 1350L2590 1391M2593 1391L2585 1450M2565 1549L2547 1632M2538 1163L2578 1173M2578 1171L2633 1179M2633 1180L2665 1188M2666 1186L2731 1198M2731 1197L2772 1207M2773 1205L2814 1215M2814 1212L2865 1222M2865 1221L2911 1231M2977 1241L3034 1251M3034 1251L3116 1266M2679 1065L2671 1123M2656 1192L2648 1226M2650 1226L2642 1260M2644 1260L2634 1325M2633 1325L2626 1369M2609 1460L2604 1502M2602 1501L2586 1577M2600 1214L2674 1226M2674 1227L2717 1234M2717 1235L2759 1243M2895 1266L2951 1275M2990 1283L3066 1297M2707 1129L2698 1191M2696 1191L2689 1241M2688 1241L2676 1292M2679 1292L2675 1321M2673 1321L2659 1395M2653 1437L2642 1502M2642 1502L2636 1541M2635 1541L2627 1593M2526 1229L2589 1242M2642 1250L2705 1258M2704 1261L2765 1271M2802 1278L2844 1288M2844 1285L2883 1289M2924 1299L2969 1309M2970 1307L3013 1314M3013 1315L3059 1322M2744 1076L2737 1129M2735 1129L2726 1171M2703 1314L2695 1371M2678 1451L2674 1491M2519 1269L2593 1280M2632 1289L2714 1303M2714 1304L2759 1312M2759 1312L2809 1319M2809 1320L2874 1333M2919 1340L2980 1353M2785 1084L2773 1161M2738 1348L2723 1417M2726 1417L2710 1499M2698 1576L2690 1607M2513 1307L2545 1314M2545 1313L2605 1323M2654 1332L2681 1338M2748 1349L2811 1359M2811 1360L2881 1373M3013 1395L3050 1401M2807 1176L2798 1240M2796 1239L2783 1297M2786 1298L2781 1328M2781 1328L2769 1393M2736 1582L2729 1638M2565 1351L2592 1358M2753 1384L2781 1391M2781 1389L2864 1403M2864 1404L2927 1416M2966 1422L3042 1437M2842 1176L2831 1252M2829 1251L2821 1311M2818 1311L2813 1355M2810 1354L2802 1395M2803 1395L2792 1456M2792 1456L2782 1507M2772 1570L2758 1643M2502 1365L2579 1378M2579 1379L2625 1386M2625 1387L2660 1393M2660 1393L2741 1410M2957 1445L3007 1456M2867 1178L2855 1246M2819 1451L2809 1525M2806 1524L2798 1553M2801 1554L2792 1611M2791 1610L2778 1691M2497 1394L2570 1408M2636 1418L2694 1427M2693 1429L2737 1436M2789 1445L2873 1459M2872 1460L2920 1467M2920 1469L2968 1479M2968 1477L3040 1490M2909 1106L2902 1157M2900 1157L2894 1194M2894 1194L2882 1252M2872 1317L2863 1367M2863 1367L2857 1405M2857 1404L2845 1452M2848 1452L2838 1529M2835 1529L2824 1591M2490 1436L2550 1445M2549 1447L2614 1457M2658 1466L2687 1474M2744 1481L2805 1491M2848 1500L2906 1510M2939 1184L2922 1267M2899 1411L2888 1473M2888 1473L2880 1510M2869 1579L2857 1661M2484 1470L2550 1483M2731 1514L2774 1523M2821 1529L2859 1534M2859 1536L2898 1540M2898 1543L2942 1552M2995 1560L3063 1573M2985 1119L2975 1178M2961 1259L2949 1314M2951 1315L2940 1378M2933 1414L2919 1488M2598 1517L2678 1529M2860 1563L2943 1577M2943 1578L3025 1592M3011 1124L2997 1193M2968 1368L2958 1431M2957 1431L2945 1485M2947 1485L2943 1523M2932 1571L2917 1642M2568 1547L2643 1560M2643 1560L2713 1570M2712 1573L2765 1581M2792 1587L2850 1597M2850 1597L2925 1608M2925 1610L2954 1617M2954 1615L2993 1619M3032 1208L3023 1262M3023 1261L3014 1300M3005 1363L2994 1435M2992 1435L2984 1494M2971 1552L2966 1596M2465 1576L2494 1580M2494 1581L2530 1590M2531 1587L2608 1603M2609 1601L2691 1616M2774 1630L2852 1647M2853 1644L2884 1647M2884 1649L2920 1657M3082 1190L3074 1236M3067 1273L3053 1344M3054 1344L3042 1407M3023 1525L3019 1552M3010 1596L2996 1661M2493 1611L2533 1621M2533 1618L2569 1627M2570 1625L2652 1638M2652 1639L2691 1643M2732 1653L2790 1661M2790 1663L2872 1676M2871 1678L2944 1691M2944 1691L2993 1698M3108 1213L3100 1265M3093 1298L3080 1381M3065 1460L3052 1531M3052 1531L3044 1566" stroke="#fbfbfb" stroke-width="2.4" fill="none"/>
<clipPath id="ca14"><rect x="2980" y="1500" width="280" height="230"/></clipPath>
<path clip-path="url(#ca14)" d="M2840 1308L2896 1309M2896 1308L2928 1310M2928 1308L2983 1307M2983 1308L3023 1305M3023 1308L3053 1309M3053 1308L3090 1306M3090 1308L3137 1308M3137 1308L3170 1307M3170 1308L3198 1308M3198 1308L3237 1310M3287 1308L3339 1309M3339 1308L3362 1310M3393 1308L3437 1310M2813 1384L2812 1439M2813 1477L2811 1518M2813 1518L2813 1551M2813 1551L2813 1581M2813 1581L2812 1639M2813 1639L2812 1667M2813 1667L2816 1712M2813 1712L2813 1751M2813 1806L2810 1843M2813 1843L2814 1883M2813 1883L2810 1927M2840 1323L2878 1323M2878 1323L2920 1322M2920 1323L2977 1323M2977 1323L3025 1321M3025 1323L3075 1323M3105 1323L3139 1324M3139 1323L3188 1322M3188 1323L3213 1326M3213 1323L3233 1322M3233 1323L3291 1321M3291 1323L3328 1323M3328 1323L3373 1326M3373 1323L3413 1322M2828 1335L2826 1379M2828 1419L2831 1468M2828 1468L2829 1517M2828 1517L2827 1553M2828 1553L2830 1599M2828 1599L2826 1647M2828 1647L2829 1681M2828 1681L2828 1709M2828 1709L2827 1768M2828 1768L2829 1822M2828 1864L2828 1921M2840 1356L2866 1357M2866 1356L2899 1354M2899 1356L2959 1357M2959 1356L2980 1354M2980 1356L3022 1356M3055 1356L3102 1353M3102 1356L3147 1359M3147 1356L3189 1354M3189 1356L3237 1359M3237 1356L3291 1354M3291 1356L3333 1357M3333 1356L3367 1353M3392 1356L3436 1353M2861 1335L2861 1364M2861 1364L2863 1409M2861 1429L2862 1465M2861 1465L2863 1498M2861 1554L2861 1586M2861 1586L2862 1635M2861 1635L2862 1666M2861 1666L2862 1694M2861 1694L2860 1729M2861 1729L2861 1777M2861 1777L2863 1810M2861 1810L2860 1862M2861 1862L2864 1895M2840 1371L2891 1371M2891 1371L2946 1372M2946 1371L2972 1371M2972 1371L3018 1369M3018 1371L3040 1370M3040 1371L3070 1373M3070 1371L3117 1371M3117 1371L3157 1373M3157 1371L3192 1369M3192 1371L3216 1374M3275 1371L3307 1369M3307 1371L3335 1371M3335 1371L3365 1372M2876 1335L2879 1376M2876 1376L2875 1413M2876 1413L2877 1452M2876 1452L2878 1487M2876 1487L2878 1527M2876 1527L2875 1578M2876 1613L2879 1653M2876 1653L2878 1686M2876 1686L2879 1727M2876 1727L2877 1775M2876 1775L2876 1798M2876 1798L2874 1853M2876 1853L2876 1902M2840 1403L2868 1400M2868 1403L2899 1402M2899 1403L2933 1405M2933 1403L2978 1404M2978 1403L3004 1405M3004 1403L3050 1406M3050 1403L3078 1403M3078 1403L3105 1402M3105 1403L3160 1403M3160 1403L3213 1404M3213 1403L3249 1404M3249 1403L3297 1404M3297 1403L3318 1402M3318 1403L3339 1403M3339 1403L3383 1400M3383 1403L3415 1405M2908 1335L2907 1382M2908 1382L2909 1411M2908 1464L2909 1515M2908 1594L2909 1640M2908 1640L2910 1660M2908 1660L2905 1690M2908 1690L2908 1747M2908 1853L2906 1894M2908 1894L2907 1939M2937 1423L2988 1425M2988 1423L3046 1421M3046 1423L3103 1421M3103 1423L3141 1423M3141 1423L3173 1422M3173 1423L3220 1425M3220 1423L3255 1421M3255 1423L3303 1425M3303 1423L3344 1421M3344 1423L3370 1421M3370 1423L3424 1422M2928 1335L2925 1370M2928 1406L2927 1440M2928 1440L2926 1472M2928 1472L2928 1532M2928 1532L2929 1568M2928 1568L2931 1606M2928 1606L2929 1666M2928 1666L2925 1726M2928 1726L2931 1779M2928 1779L2927 1802M2928 1802L2930 1856M2928 1856L2931 1879M2928 1879L2929 1933M2840 1441L2876 1442M2876 1441L2919 1444M2919 1441L2957 1443M2986 1441L3007 1442M3007 1441L3045 1443M3045 1441L3068 1439M3068 1441L3108 1443M3108 1441L3145 1442M3145 1441L3198 1441M3250 1441L3300 1442M3300 1441L3348 1443M3396 1441L3426 1444M2946 1335L2946 1393M2946 1393L2946 1415M2946 1415L2948 1463M2946 1463L2946 1500M2946 1500L2949 1544M2946 1544L2947 1564M2946 1594L2949 1650M2946 1650L2948 1670M2946 1670L2945 1727M2946 1727L2948 1766M2946 1766L2944 1796M2946 1796L2949 1828M2946 1828L2948 1887M2946 1887L2945 1933M2840 1473L2899 1471M2953 1473L2983 1471M2983 1473L3019 1470M3019 1473L3065 1473M3065 1473L3114 1472M3114 1473L3167 1474M3167 1473L3212 1472M3212 1473L3250 1472M3250 1473L3290 1473M3290 1473L3344 1474M3382 1473L3412 1475M2978 1335L2977 1372M2978 1427L2976 1459M2978 1459L2980 1496M2978 1531L2978 1559M2978 1559L2979 1588M2978 1588L2977 1640M2978 1640L2979 1663M2978 1715L2977 1754M2978 1754L2979 1810M2978 1810L2977 1866M2978 1866L2979 1885M2978 1885L2977 1936M2840 1496L2879 1493M2879 1496L2923 1496M2923 1496L2948 1493M2948 1496L2984 1497M2984 1496L3037 1496M3037 1496L3077 1497M3077 1496L3132 1497M3132 1496L3162 1498M3162 1496L3191 1498M3191 1496L3238 1495M3238 1496L3271 1499M3271 1496L3307 1495M3307 1496L3340 1497M3340 1496L3387 1498M3001 1388L3004 1411M3001 1411L2999 1437M3001 1437L3004 1459M3001 1459L2999 1518M3001 1518L3000 1555M3001 1555L3002 1577M3001 1577L3002 1619M3001 1619L3003 1667M3001 1667L3001 1724M3001 1724L3000 1748M3001 1748L3000 1792M3001 1825L3003 1876M2840 1515L2867 1513M2867 1515L2897 1515M2897 1515L2942 1513M3042 1515L3076 1513M3076 1515L3104 1516M3126 1515L3185 1516M3185 1515L3204 1512M3204 1515L3228 1512M3228 1515L3255 1516M3255 1515L3289 1513M3289 1515L3341 1513M3341 1515L3385 1516M3385 1515L3430 1517M3020 1335L3021 1393M3020 1393L3022 1422M3020 1422L3021 1459M3020 1459L3019 1518M3020 1575L3019 1627M3020 1627L3018 1675M3020 1675L3017 1733M3020 1733L3021 1776M3020 1852L3020 1903M2840 1540L2882 1542M2882 1540L2936 1538M2936 1540L2989 1542M2989 1540L3028 1539M3028 1540L3062 1537M3062 1540L3100 1537M3100 1540L3154 1539M3220 1540L3250 1538M3250 1540L3275 1542M3296 1540L3337 1537M3337 1540L3382 1539M3382 1540L3408 1537M3045 1335L3047 1386M3045 1386L3046 1443M3045 1443L3045 1476M3045 1525L3042 1548M3045 1548L3043 1605M3045 1605L3047 1654M3045 1704L3044 1735M3045 1735L3044 1771M3045 1771L3046 1799M3045 1799L3042 1859M3045 1859L3043 1913M2840 1566L2876 1566M2876 1566L2901 1566M2901 1566L2921 1568M2921 1566L2971 1568M2971 1566L3008 1569M3008 1566L3057 1567M3107 1566L3129 1568M3199 1566L3253 1565M3253 1566L3311 1565M3311 1566L3336 1568M3336 1566L3393 1567M3393 1566L3440 1567M3071 1335L3071 1377M3071 1377L3073 1403M3071 1403L3069 1459M3071 1459L3069 1505M3071 1585L3071 1642M3071 1642L3071 1674M3071 1674L3073 1730M3071 1730L3072 1778M3071 1778L3074 1797M3071 1797L3069 1819M3071 1819L3069 1869M3071 1869L3073 1917M2865 1593L2890 1595M2971 1593L3005 1594M3005 1593L3036 1591M3036 1593L3091 1596M3091 1593L3124 1591M3124 1593L3150 1590M3177 1593L3205 1595M3205 1593L3256 1592M3256 1593L3279 1596M3279 1593L3334 1595M3334 1593L3356 1591M3098 1335L3101 1356M3098 1356L3100 1391M3098 1391L3098 1423M3098 1423L3096 1473M3098 1473L3099 1523M3098 1523L3098 1575M3098 1611L3097 1636M3098 1636L3097 1660M3098 1684L3100 1717M3098 1717L3099 1756M3098 1756L3097 1787M2840 1613L2893 1616M2893 1613L2940 1613M2940 1613L2959 1614M2959 1613L3017 1613M3017 1613L3038 1616M3038 1613L3091 1611M3091 1613L3139 1615M3139 1613L3168 1615M3168 1613L3192 1613M3192 1613L3215 1613M3298 1613L3325 1612M3325 1613L3370 1614M3370 1613L3408 1615M3118 1335L3116 1381M3118 1408L3121 1453M3118 1453L3118 1510M3118 1510L3118 1543M3118 1543L3117 1603M3118 1603L3116 1640M3118 1640L3121 1700M3118 1700L3118 1736M3118 1736L3120 1778M3118 1778L3116 1836M3118 1858L3121 1878M3118 1878L3119 1915M2870 1640L2892 1641M2892 1640L2930 1639M2930 1640L2976 1639M2976 1640L3019 1641M3045 1640L3091 1639M3091 1640L3132 1642M3132 1640L3176 1640M3176 1640L3221 1639M3221 1640L3279 1641M3279 1640L3317 1640M3317 1640L3349 1641M3145 1335L3148 1362M3145 1362L3147 1418M3145 1418L3144 1473M3145 1473L3147 1509M3145 1509L3146 1554M3145 1554L3142 1589M3145 1589L3144 1629M3145 1629L3143 1682M3145 1682L3147 1723M3145 1723L3145 1747M3145 1747L3146 1781M3145 1883L3146 1912M2840 1665L2859 1666M2859 1665L2899 1665M2899 1665L2952 1662M2952 1665L3001 1667M3001 1665L3053 1667M3053 1665L3111 1662M3111 1665L3143 1663M3143 1665L3181 1662M3181 1665L3212 1662M3212 1665L3246 1666M3276 1665L3303 1664M3303 1665L3331 1665M3331 1665L3361 1664M3361 1665L3384 1662M3384 1665L3418 1664M3170 1335L3168 1384M3170 1477L3167 1527M3170 1527L3171 1556M3170 1556L3171 1591M3170 1637L3167 1674M3170 1674L3172 1708M3170 1708L3169 1746M3170 1746L3167 1797M3170 1797L3168 1855M3170 1855L3170 1883M3170 1883L3167 1930M2840 1685L2870 1688M2870 1685L2903 1686M2903 1685L2951 1686M3005 1685L3039 1686M3039 1685L3074 1685M3119 1685L3171 1688M3171 1685L3224 1683M3224 1685L3282 1685M3282 1685L3316 1688M3316 1685L3341 1687M3341 1685L3382 1687M3382 1685L3439 1687M3190 1335L3190 1394M3190 1394L3193 1450M3190 1450L3189 1503M3190 1503L3193 1547M3190 1547L3190 1580M3190 1615L3190 1634M3190 1634L3192 1682M3190 1682L3191 1728M3190 1728L3188 1751M3190 1751L3191 1784M3190 1784L3191 1841M3190 1841L3188 1895M3190 1895L3190 1937M2840 1705L2876 1708M2876 1705L2899 1707M2899 1705L2930 1706M2930 1705L2987 1708M2987 1705L3013 1706M3013 1705L3060 1704M3060 1705L3091 1708M3125 1705L3151 1703M3151 1705L3176 1705M3176 1705L3235 1703M3235 1705L3257 1704M3257 1705L3306 1706M3306 1705L3333 1705M3333 1705L3385 1704M3385 1705L3435 1707M3210 1335L3212 1389M3210 1389L3208 1411M3210 1411L3212 1441M3210 1505L3209 1529M3210 1529L3210 1585M3210 1585L3213 1620M3210 1620L3210 1677M3210 1677L3213 1705M3210 1705L3208 1742M3210 1799L3212 1858M3210 1858L3208 1903M2840 1732L2864 1734M2864 1732L2909 1731M2909 1732L2941 1733M2941 1732L2977 1730M2977 1732L3004 1734M3004 1732L3041 1731M3041 1732L3080 1734M3101 1732L3136 1734M3136 1732L3187 1730M3187 1732L3231 1732M3231 1732L3278 1732M3278 1732L3305 1730M3305 1732L3329 1731M3329 1732L3358 1733M3358 1732L3411 1731M3237 1335L3238 1360M3237 1360L3239 1391M3237 1391L3234 1416M3237 1416L3235 1438M3237 1472L3237 1499M3237 1499L3239 1543M3237 1543L3234 1569M3237 1569L3235 1600M3237 1600L3237 1655M3237 1655L3237 1700M3237 1700L3238 1734M3237 1734L3235 1770M3237 1770L3234 1822M3237 1857L3238 1886M3237 1886L3238 1935M2840 1754L2893 1755M2893 1754L2924 1753M2924 1754L2964 1757M2964 1754L2990 1753M2990 1754L3016 1752M3016 1754L3050 1753M3050 1754L3097 1755M3097 1754L3140 1756M3140 1754L3193 1753M3193 1754L3250 1756M3250 1754L3300 1752M3300 1754L3358 1751M3358 1754L3379 1751M3379 1754L3405 1752M3259 1335L3256 1370M3259 1370L3259 1406M3259 1432L3259 1459M3259 1459L3261 1509M3259 1509L3261 1555M3259 1555L3257 1611M3259 1632L3262 1689M3259 1689L3260 1747M3259 1747L3257 1787M3259 1787L3259 1837M3259 1837L3257 1860M3259 1860L3258 1906M2840 1782L2890 1781M2890 1782L2931 1783M2957 1782L2990 1783M2990 1782L3027 1784M3027 1782L3074 1783M3098 1782L3149 1784M3149 1782L3206 1782M3206 1782L3252 1783M3356 1782L3409 1785M3287 1335L3286 1368M3287 1368L3288 1406M3287 1441L3287 1462M3287 1462L3286 1500M3287 1534L3290 1583M3287 1583L3286 1641M3287 1671L3289 1710M3287 1710L3289 1768M3287 1768L3288 1824M3287 1824L3286 1878M3287 1878L3287 1935M2840 1801L2864 1798M2864 1801L2888 1803M2888 1801L2948 1800M2948 1801L2998 1802M2998 1801L3052 1804M3052 1801L3093 1800M3093 1801L3150 1803M3150 1801L3197 1803M3197 1801L3222 1802M3222 1801L3275 1803M3275 1801L3328 1803M3328 1801L3379 1802M3379 1801L3421 1801M3306 1335L3305 1386M3306 1386L3308 1423M3306 1423L3308 1457M3306 1457L3308 1505M3306 1505L3307 1525M3306 1525L3309 1575M3306 1629L3307 1658M3306 1658L3309 1704M3306 1704L3303 1758M3306 1758L3304 1801M3306 1831L3309 1885M3306 1885L3304 1915M2840 1836L2884 1835M2932 1836L2992 1836M2992 1836L3049 1834M3049 1836L3079 1833M3079 1836L3123 1839M3123 1836L3151 1835M3151 1836L3178 1833M3178 1836L3209 1836M3209 1836L3257 1837M3257 1836L3283 1837M3283 1836L3335 1837M3341 1441L3340 1470M3341 1470L3340 1505M3341 1557L3339 1605M3341 1605L3344 1655M3341 1707L3339 1745M3341 1745L3341 1777M3341 1777L3342 1833M3341 1833L3344 1870M3341 1870L3340 1905M2840 1859L2873 1856M2873 1859L2912 1861M2912 1859L2963 1861M2963 1859L3011 1858M3011 1859L3031 1860M3031 1859L3083 1859M3114 1859L3163 1858M3163 1859L3212 1858M3212 1859L3258 1861M3258 1859L3285 1861M3285 1859L3320 1861M3320 1859L3366 1858M3366 1859L3419 1857M3364 1389L3365 1424M3364 1424L3363 1445M3364 1445L3365 1464M3364 1494L3362 1522M3364 1522L3367 1576M3364 1576L3362 1622M3364 1622L3364 1661M3364 1661L3365 1681M3364 1681L3362 1707M3364 1707L3362 1728M3364 1728L3366 1786M3364 1786L3362 1827M3364 1827L3361 1882M3364 1882L3364 1923M2840 1875L2871 1877M2871 1875L2895 1877M2895 1875L2946 1873M2988 1875L3021 1878M3021 1875L3076 1877M3076 1875L3125 1878M3125 1875L3180 1872M3180 1875L3231 1873M3231 1875L3274 1873M3274 1875L3305 1873M3305 1875L3349 1872M3349 1875L3393 1874M3393 1875L3437 1873M3380 1335L3380 1373M3380 1373L3383 1424M3380 1500L3379 1534M3380 1534L3378 1590M3380 1590L3382 1637M3380 1637L3382 1680M3380 1680L3379 1735M3380 1735L3383 1777M3380 1777L3378 1817M3380 1817L3382 1866M3380 1866L3381 1919M2916 1903L2970 1904M2970 1903L3025 1904M3063 1903L3104 1903M3104 1903L3127 1905M3127 1903L3163 1903M3163 1903L3206 1901M3206 1903L3241 1903M3241 1903L3263 1905M3263 1903L3311 1903M3311 1903L3341 1905M3341 1903L3374 1905M3374 1903L3402 1903M3408 1335L3411 1380M3408 1433L3407 1486M3408 1486L3406 1524M3408 1524L3409 1574M3408 1574L3408 1607M3408 1607L3406 1659M3408 1659L3409 1716M3408 1716L3408 1737M3408 1737L3405 1770M3408 1871L3407 1915M2840 1932L2868 1931M2868 1932L2896 1934M2896 1932L2942 1931M2942 1932L2998 1932M2998 1932L3036 1931M3086 1932L3138 1935M3138 1932L3174 1934M3174 1932L3199 1930M3199 1932L3222 1930M3222 1932L3245 1933M3245 1932L3287 1934M3287 1932L3316 1929M3316 1932L3340 1930M3340 1932L3364 1934M3364 1932L3389 1931M3437 1376L3437 1432M3437 1432L3439 1479M3437 1479L3435 1511M3437 1565L3435 1625M3437 1625L3440 1666M3437 1666L3436 1707M3437 1735L3440 1778M3437 1778L3436 1832M3437 1832L3438 1883M3437 1883L3435 1907" stroke="#fbfbfb" stroke-width="2.4" fill="none"/>
<clipPath id="ca15"><rect x="3100" y="1730" width="460" height="391"/></clipPath>
<path clip-path="url(#ca15)" d="M3134 1309L3173 1321M3172 1323L3231 1342M3298 1369L3367 1391M3407 1409L3471 1431M3471 1432L3544 1462M3545 1459L3592 1474M3757 1536L3812 1558M3812 1556L3850 1569M3006 1318L2993 1348M2995 1349L2983 1380M2983 1381L2961 1438M2943 1491L2921 1547M2922 1548L2898 1610M2825 1815L2812 1846M2798 1889L2790 1920M2759 1996L2732 2080M2729 2079L2719 2108M3056 1333L3096 1346M3169 1374L3245 1399M3273 1412L3350 1439M3702 1568L3755 1586M3755 1588L3829 1614M3829 1614L3905 1641M3052 1335L3036 1372M3039 1373L3016 1438M2987 1516L2958 1588M2960 1589L2947 1622M2948 1622L2924 1688M2901 1751L2889 1779M2891 1779L2871 1840M2869 1839L2854 1879M2830 1945L2820 1980M2793 2047L2779 2085M2753 2157L2737 2194M2739 2195L2712 2263M3128 1392L3198 1419M3401 1491L3457 1512M3499 1527L3529 1536M3598 1563L3637 1577M3637 1577L3699 1600M3699 1600L3746 1614M3884 1667L3937 1688M3052 1425L3034 1471M2981 1619L2955 1696M2882 1892L2858 1957M2858 1957L2831 2034M3035 1391L3113 1422M3114 1420L3153 1432M3152 1434L3229 1462M3396 1523L3472 1551M3472 1550L3531 1574M3531 1572L3592 1595M3592 1594L3652 1619M3761 1656L3799 1672M3827 1680L3868 1697M3099 1389L3079 1444M3078 1444L3061 1491M3062 1491L3031 1571M3032 1572L3005 1644M3006 1644L2993 1678M2968 1748L2948 1806M2947 1805L2917 1890M2916 1890L2902 1925M2849 2076L2820 2152M2821 2152L2801 2210M2800 2210L2781 2258M3021 1430L3062 1443M3176 1486L3244 1513M3245 1511L3283 1524M3283 1525L3333 1542M3464 1591L3500 1605M3500 1604L3571 1630M3571 1630L3637 1656M3637 1654L3689 1673M3754 1697L3801 1715M3835 1726L3909 1756M3149 1370L3121 1451M3104 1494L3082 1546M3060 1616L3043 1667M3008 1759L2998 1788M2997 1788L2984 1818M2970 1862L2959 1892M2959 1892L2940 1949M2865 2150L2839 2219M2840 2219L2827 2252M3006 1471L3049 1487M3092 1503L3146 1521M3192 1539L3273 1567M3273 1568L3309 1580M3308 1581L3381 1607M3430 1625L3496 1649M3496 1649L3549 1670M3550 1669L3634 1698M3633 1699L3686 1717M3685 1718L3727 1730M3726 1733L3763 1745M3842 1775L3876 1787M3190 1385L3164 1456M3114 1593L3093 1651M3034 1816L3011 1882M3010 1881L2988 1935M2990 1935L2966 1994M2942 2068L2913 2145M2914 2145L2902 2172M2904 2172L2886 2224M2994 1504L3033 1519M3033 1518L3078 1534M3176 1570L3214 1582M3374 1642L3439 1664M3497 1687L3561 1709M3561 1710L3588 1723M3758 1782L3814 1802M3815 1802L3852 1816M3852 1816L3883 1825M3205 1446L3196 1479M3193 1478L3170 1544M3169 1544L3154 1586M3154 1586L3142 1626M3139 1626L3122 1683M3119 1682L3100 1737M3099 1736L3081 1790M3080 1789L3050 1874M3049 1874L3039 1910M3025 1941L3003 1991M2982 2058L2966 2098M2915 2242L2888 2323M3158 1601L3227 1626M3227 1627L3310 1654M3383 1683L3461 1711M3533 1738L3616 1769M3617 1768L3675 1789M3756 1819L3819 1845M3820 1843L3882 1863M3257 1409L3228 1482M3209 1539L3192 1587M3144 1719L3117 1795M3041 2002L3014 2083M3012 2082L2996 2124M2969 1571L3011 1588M3047 1599L3076 1613M3077 1610L3121 1625M3121 1626L3174 1649M3175 1646L3252 1673M3252 1674L3283 1686M3283 1685L3318 1701M3319 1698L3349 1710M3349 1709L3421 1734M3421 1735L3501 1763M3501 1765L3540 1781M3541 1779L3569 1791M3646 1818L3701 1839M3290 1422L3275 1465M3275 1465L3265 1495M3264 1495L3245 1539M3247 1540L3223 1604M3224 1605L3213 1634M3189 1700L3165 1769M3164 1769L3142 1824M3089 1976L3059 2055M3060 2055L3031 2138M3030 2138L3002 2216M3001 2216L2972 2297M3021 1629L3054 1639M3053 1641L3123 1665M3122 1666L3164 1679M3243 1710L3295 1726M3294 1729L3375 1761M3480 1797L3515 1812M3516 1810L3586 1834M3586 1835L3656 1863M3657 1861L3691 1874M3747 1894L3804 1914M3306 1486L3291 1535M3251 1638L3240 1670M3239 1670L3211 1749M3181 1831L3161 1886M3161 1886L3142 1939M3142 1938L3128 1970M3130 1971L3120 2005M3100 2054L3075 2129M3054 2181L3043 2212M3042 2212L3021 2265M2950 1625L2981 1634M2980 1636L3051 1665M3052 1662L3081 1672M3081 1672L3110 1681M3109 1682L3152 1697M3152 1698L3201 1713M3201 1716L3262 1738M3262 1738L3309 1758M3356 1772L3434 1800M3433 1801L3465 1813M3466 1812L3532 1839M3606 1863L3664 1887M3664 1885L3720 1902M3795 1932L3870 1957M3293 1582L3275 1634M3274 1633L3246 1705M3248 1706L3222 1768M3225 1768L3206 1813M3178 1897L3147 1979M3148 1979L3134 2021M3133 2021L3107 2086M3089 2142L3068 2192M2933 1672L2963 1683M2963 1683L3016 1700M3046 1713L3096 1732M3252 1788L3313 1809M3313 1810L3351 1825M3351 1824L3390 1837M3389 1838L3450 1860M3450 1860L3495 1877M3628 1925L3709 1955M3391 1458L3372 1511M3372 1510L3346 1588M3315 1668L3297 1725M3294 1725L3270 1796M3268 1795L3240 1880M3197 1991L3179 2031M3182 2032L3162 2095M3160 2094L3143 2142M3101 2256L3091 2283M3091 2283L3062 2358M2920 1707L2996 1732M2995 1734L3057 1758M3058 1757L3142 1788M3142 1788L3209 1813M3209 1812L3289 1841M3289 1841L3362 1870M3363 1868L3408 1886M3409 1885L3470 1904M3469 1906L3506 1922M3507 1920L3563 1938M3562 1940L3615 1962M3615 1960L3692 1986M3744 2007L3792 2022M3426 1471L3414 1502M3414 1503L3400 1541M3349 1683L3315 1766M3262 1920L3232 2000M3233 2000L3208 2073M3207 2073L3181 2137M3183 2138L3170 2165M3122 2305L3106 2346M2911 1732L2960 1749M2960 1750L3018 1768M3017 1771L3065 1788M3108 1804L3178 1828M3177 1829L3255 1857M3255 1857L3325 1885M3326 1883L3372 1898M3439 1924L3504 1947M3558 1968L3627 1993M3710 2023L3762 2045M3451 1480L3424 1556M3412 1587L3393 1634M3395 1635L3378 1680M3378 1680L3348 1758M3350 1759L3335 1802M3294 1913L3282 1944M3282 1944L3268 1987M3267 1986L3252 2021M3254 2022L3224 2099M3202 2164L3174 2247M3147 2315L3124 2378M3002 1802L3030 1810M3088 1834L3135 1852M3135 1851L3204 1874M3252 1894L3289 1906M3289 1907L3322 1921M3323 1919L3382 1941M3591 2017L3631 2034M3631 2032L3715 2063M3484 1492L3470 1529M3444 1603L3429 1651M3427 1650L3400 1727M3399 1726L3385 1758M3387 1759L3374 1797M3373 1797L3343 1873M3345 1874L3333 1903M3286 2038L3256 2116M3257 2116L3246 2151M3221 2215L3203 2262M3189 2304L3175 2342M3175 2342L3149 2419M2885 1803L2940 1823M3005 1847L3037 1856M3036 1858L3097 1879M3145 1898L3185 1912M3276 1946L3310 1958M3310 1958L3378 1986M3379 1983L3412 1992M3411 1995L3494 2026M3646 2080L3696 2099M3696 2098L3751 2120M3522 1506L3503 1552M3454 1694L3434 1758M3364 1941L3335 2022M3305 2102L3284 2153M3220 2336L3190 2420M2874 1834L2913 1847M3095 1915L3148 1933M3148 1934L3213 1960M3213 1958L3284 1982M3283 1983L3317 1994M3317 1995L3372 2017M3373 2016L3454 2045M3454 2045L3506 2065M3506 2064L3548 2082M3549 2080L3608 2102M3682 2129L3711 2138M3711 2139L3750 2152M3553 1517L3533 1574M3533 1574L3511 1638M3510 1638L3496 1677M3483 1712L3470 1747M3470 1747L3442 1824M3442 1824L3432 1852M3432 1852L3420 1892M3335 2117L3311 2180M3312 2181L3288 2245M2860 1873L2907 1892M2908 1890L2957 1909M2957 1908L3013 1930M3121 1968L3202 1994M3201 1997L3259 2015M3510 2110L3568 2133M3606 2144L3652 2158M3551 1645L3536 1683M3496 1795L3478 1845M3478 1845L3450 1920M3450 1921L3437 1953M3391 2083L3365 2146M3368 2147L3355 2184M3354 2184L3341 2230M3338 2229L3310 2301M3311 2302L3302 2333M2848 1904L2900 1921M2900 1922L2971 1949M2971 1948L3032 1973M3033 1971L3078 1990M3079 1988L3158 2019M3159 2017L3232 2046M3335 2081L3406 2108M3436 2117L3506 2143M3506 2143L3544 2155M3544 2157L3573 2165M3572 2167L3653 2194M3653 2196L3737 2227M3611 1574L3584 1648M3546 1754L3519 1833M3503 1870L3474 1947M3475 1948L3447 2029M3394 2170L3379 2214M3378 2214L3365 2255M3352 2287L3329 2343M3310 2403L3292 2446M2839 1930L2907 1957M3067 2013L3119 2028M3118 2031L3149 2042M3149 2042L3223 2069M3403 2135L3443 2150M3443 2150L3510 2175M3510 2174L3555 2189M3660 2228L3710 2246M3602 1680L3589 1714M3561 1793L3539 1861M3485 2002L3473 2038M3472 2037L3445 2105M3402 2230L3384 2286M3382 2285L3370 2318M3370 2318L3340 2392M2826 1966L2891 1992M2892 1990L2919 2001M2974 2020L3036 2039M3166 2089L3230 2113M3230 2113L3281 2130M3281 2131L3319 2145M3319 2145L3365 2159M3364 2162L3436 2186M3435 2187L3482 2205M3482 2205L3535 2223M3534 2223L3584 2240M3653 1652L3640 1688M3611 1768L3589 1827M3566 1891L3543 1948M3545 1948L3516 2031M3515 2031L3497 2076M3498 2077L3469 2155M3470 2155L3445 2217M3447 2218L3428 2269M3428 2269L3403 2345M3385 2390L3362 2456M2887 2036L2932 2056M2933 2053L2967 2065M2967 2065L3033 2093M3034 2090L3073 2104M3073 2104L3105 2114M3153 2133L3204 2154M3204 2152L3280 2178M3280 2179L3355 2207M3355 2207L3392 2217M3391 2220L3471 2249M3471 2249L3553 2276M3552 2278L3604 2296M3604 2297L3688 2328M3728 1581L3706 1632M3695 1670L3678 1723M3648 1800L3632 1845M3631 1845L3618 1883M3618 1883L3603 1923M3583 1977L3561 2046M3543 2087L3529 2127M3529 2126L3509 2187M3496 2218L3482 2256M3482 2255L3457 2327M3456 2326L3424 2409M3426 2410L3403 2480M2800 2037L2869 2061M2951 2092L2981 2100M2980 2103L3042 2122M3335 2232L3408 2257M3407 2258L3451 2273M3451 2274L3502 2295M3756 1591L3733 1651M3709 1723L3696 1759M3607 2002L3590 2054M3588 2053L3575 2096M3573 2096L3550 2155M3525 2228L3496 2313M3494 2313L3471 2383M3459 2409L3444 2441M3447 2442L3418 2515M2785 2079L2822 2090M2856 2105L2915 2124M2994 2156L3033 2168M3033 2170L3111 2199M3111 2198L3168 2218M3200 2231L3253 2250M3320 2274L3351 2284M3351 2285L3425 2312M3459 2325L3525 2351M3526 2349L3563 2363M3563 2363L3646 2395M3646 2393L3680 2403M3798 1606L3786 1634M3788 1635L3765 1690M3768 1691L3747 1751M3746 1751L3720 1815M3691 1903L3666 1962M3648 2019L3623 2093M3595 2164L3584 2197M3569 2236L3550 2286M3551 2286L3520 2368M2861 2130L2929 2154M2929 2155L3006 2183M3006 2183L3077 2207M3076 2209L3134 2230M3191 2251L3272 2283M3273 2280L3331 2301M3331 2301L3375 2319M3404 2328L3478 2354M3478 2355L3548 2380M3548 2380L3597 2397M3789 1697L3763 1776M3760 1775L3741 1837M3712 1908L3681 1991M3641 2103L3617 2167M3618 2167L3602 2216M3600 2215L3575 2288M3574 2287L3558 2337M3556 2336L3546 2371M2762 2141L2838 2172M2913 2196L2943 2206M3135 2277L3171 2287M3282 2330L3311 2344M3356 2357L3434 2386M3434 2386L3471 2400M3587 2441L3629 2460M3860 1629L3840 1693M3837 1692L3810 1761M3782 1843L3755 1909M3740 1960L3725 1995M3727 1996L3706 2048M3708 2048L3683 2109M3618 2295L3590 2376M3589 2375L3571 2426M3570 2426L3547 2484M3549 2484L3526 2548M2750 2174L2812 2200M2992 2262L3052 2285M3052 2284L3115 2310M3116 2307L3163 2327M3164 2325L3240 2353M3240 2352L3293 2372M3293 2372L3322 2380M3524 2456L3593 2482M3593 2481L3677 2512M3893 1641L3878 1690M3859 1736L3845 1779M3810 1870L3797 1911M3795 1910L3783 1939M3757 2015L3742 2065M3739 2064L3727 2093M3729 2093L3699 2172M3625 2378L3598 2450M3599 2450L3580 2507M2736 2212L2764 2222M2764 2222L2807 2235M3022 2316L3082 2338M3121 2352L3164 2370M3165 2368L3243 2397M3322 2425L3354 2434M3425 2462L3482 2486M3526 2499L3575 2516M3931 1655L3910 1712M3910 1712L3886 1774M3887 1775L3858 1847M3731 2205L3713 2260M3711 2259L3697 2301M3696 2300L3674 2359M3674 2359L3642 2440M2725 2242L2773 2262M2774 2260L2823 2276M2822 2277L2872 2298M3000 2342L3075 2369M3134 2391L3194 2414M3194 2413L3238 2429M3239 2429L3296 2447M3961 1666L3948 1696M3950 1697L3938 1731M3925 1764L3908 1806M3910 1807L3881 1891M3879 1891L3859 1947M3859 1947L3841 1996M3841 1996L3823 2050M3821 2049L3801 2106M3735 2286L3723 2325M3721 2325L3700 2377M3691 2408L3677 2437M3680 2438L3671 2470" stroke="#fbfbfb" stroke-width="2.4" fill="none"/>
<clipPath id="ca16"><rect x="2700" y="1530" width="100" height="120"/></clipPath>
<path clip-path="url(#ca16)" d="M2663 1393L2695 1399M2695 1399L2761 1413M2762 1411L2813 1422M2813 1420L2843 1422M2842 1425L2881 1432M2582 1517L2572 1566M2559 1645L2551 1691M2838 1448L2902 1457M2608 1500L2597 1553M2712 1454L2776 1463M2775 1465L2834 1474M2833 1476L2867 1480M2866 1482L2910 1488M2619 1601L2613 1634M2613 1634L2604 1696M2646 1486L2675 1488M2675 1491L2726 1499M2726 1500L2756 1507M2757 1506L2815 1516M2815 1516L2877 1524M2688 1457L2680 1499M2660 1614L2656 1652M2642 1511L2705 1524M2705 1522L2765 1535M2765 1533L2803 1541M2829 1544L2895 1557M2713 1462L2702 1531M2701 1530L2693 1564M2695 1564L2687 1612M2686 1612L2674 1678M2638 1536L2710 1549M2710 1549L2779 1563M2737 1466L2726 1537M2725 1537L2723 1565M2710 1621L2708 1646M2706 1646L2692 1717M2632 1569L2693 1577M2693 1580L2744 1589M2847 1607L2879 1610M2771 1472L2760 1531M2760 1531L2755 1566M2731 1697L2721 1763M2627 1595L2688 1603M2688 1606L2746 1617M2746 1616L2784 1626M2785 1623L2830 1633M2830 1631L2890 1642M2780 1570L2770 1629M2764 1661L2758 1689M2759 1689L2747 1747M2686 1633L2750 1647M2751 1645L2815 1659M2817 1520L2806 1591M2804 1591L2797 1641M2796 1641L2789 1686M2753 1680L2789 1689M2858 1487L2848 1527M2850 1527L2837 1593M2839 1593L2830 1657M2828 1657L2821 1712M2612 1684L2645 1690M2686 1697L2728 1704M2728 1704L2798 1719M2799 1717L2870 1727M2886 1492L2879 1525M2880 1525L2872 1571M2862 1623L2854 1657M2856 1658L2854 1687M2851 1687L2836 1755M2635 1717L2688 1726M2780 1742L2838 1755M2838 1753L2895 1765M2907 1535L2893 1605M2888 1643L2878 1706M2877 1706L2869 1745M2706 1765L2743 1770M2829 1786L2854 1791M2936 1568L2929 1607M2929 1607L2918 1662M2920 1663L2914 1693M2914 1693L2911 1723" stroke="#fbfbfb" stroke-width="2.4" fill="none"/>
<clipPath id="ca17"><rect x="2460" y="1580" width="100" height="220"/></clipPath>
<path clip-path="url(#ca17)" d="M2290 1408L2380 1406M2453 1408L2494 1406M2494 1408L2536 1405M2228 1683L2230 1765M2228 1765L2228 1831M2525 1438L2555 1438M2258 1842L2259 1892M2290 1469L2364 1467M2364 1469L2404 1471M2577 1469L2624 1466M2289 1597L2290 1677M2526 1508L2612 1505M2328 1706L2330 1787M2328 1850L2326 1898M2328 1898L2326 1942M2290 1538L2377 1538M2489 1538L2533 1539M2358 1539L2357 1629M2358 1805L2358 1856M2319 1579L2378 1577M2378 1579L2437 1582M2399 1470L2396 1543M2399 1543L2396 1573M2399 1573L2397 1661M2399 1747L2399 1786M2467 1611L2555 1609M2555 1611L2637 1612M2431 1470L2429 1557M2431 1557L2431 1605M2431 1680L2430 1740M2472 1630L2471 1707M2365 1691L2407 1689M2511 1470L2511 1524M2511 1900L2512 1956M2364 1730L2444 1732M2517 1730L2564 1730M2606 1730L2648 1732M2648 1730L2722 1727M2583 1470L2581 1538M2436 1801L2477 1800M2477 1801L2514 1803M2621 1687L2621 1733M2621 1816L2624 1892M2621 1892L2620 1955M2518 1833L2559 1830M2646 1833L2689 1830M2653 1517L2653 1548M2290 1867L2376 1869M2376 1867L2409 1865M2687 1849L2689 1913M2627 1897L2696 1896M2717 1651L2720 1726M2405 1937L2494 1938M2720 1937L2765 1937M2757 1507L2759 1585M2757 1810L2757 1891M2481 1970L2515 1967M2790 1510L2790 1556M2790 1721L2787 1792M2790 1868L2790 1928" stroke="#fbfbfb" stroke-width="2.4" fill="none"/>
<clipPath id="ca18"><rect x="2460" y="880" width="80" height="130"/></clipPath>
<path clip-path="url(#ca18)" d="M2478 771L2549 774M2549 771L2582 769M2582 771L2651 773M2326 902L2324 956M2326 956L2325 1009M2326 1009L2326 1064M2491 792L2554 793M2347 869L2345 917M2347 968L2350 1022M2347 1022L2345 1091M2370 830L2426 832M2464 830L2515 832M2515 830L2555 832M2385 815L2383 886M2385 920L2384 961M2385 961L2384 1023M2420 862L2457 863M2457 862L2510 864M2577 862L2648 864M2417 815L2414 844M2417 844L2415 891M2417 891L2414 927M2417 927L2415 981M2417 1019L2419 1091M2370 885L2433 885M2433 885L2494 883M2494 885L2543 887M2440 815L2441 886M2440 913L2437 955M2440 1057L2439 1110M2370 911L2406 913M2472 911L2519 910M2583 911L2618 909M2618 911L2658 911M2466 815L2468 880M2466 991L2468 1058M2466 1058L2468 1096M2370 938L2440 936M2440 938L2504 940M2504 938L2555 938M2586 938L2653 941M2493 913L2490 963M2493 963L2493 1016M2538 970L2598 970M2598 970L2670 968M2525 815L2522 875M2525 875L2525 924M2525 924L2523 983M2525 983L2527 1010M2525 1010L2526 1041M2525 1041L2528 1101M2370 1012L2408 1011M2471 1012L2545 1014M2589 1012L2614 1013M2614 1012L2661 1014M2567 815L2567 874M2567 874L2566 913M2421 1028L2463 1031M2463 1028L2510 1027M2510 1028L2547 1031M2606 1028L2681 1029M2583 815L2581 846M2583 846L2583 916M2583 916L2584 988M2583 988L2584 1049M2583 1049L2584 1095M2370 1071L2444 1071M2444 1071L2477 1072M2477 1071L2547 1073M2598 1071L2672 1073M2626 815L2628 851M2626 851L2628 926M2626 1031L2626 1060M2626 1060L2623 1089M2370 1096L2406 1093M2406 1096L2454 1094M2498 1096L2558 1093M2558 1096L2606 1096M2651 815L2652 858M2370 1131L2430 1132M2430 1131L2466 1130M2466 1131L2514 1133M2514 1131L2584 1132M2686 841L2684 889M2686 989L2688 1060" stroke="#fbfbfb" stroke-width="2.4" fill="none"/>
<clipPath id="ca19"><rect x="2460" y="1040" width="100" height="130"/></clipPath>
<path clip-path="url(#ca19)" d="M2380 907L2408 906M2408 907L2462 905M2462 907L2523 906M2551 907L2590 910M2312 1014L2313 1050M2312 1097L2311 1145M2427 949L2470 951M2470 949L2507 949M2507 949L2557 949M2557 949L2609 947M2609 949L2664 948M2354 1011L2355 1072M2380 983L2456 985M2567 983L2646 983M2388 1039L2389 1112M2388 1155L2390 1232M2439 1005L2511 1004M2578 1005L2617 1006M2617 1005L2667 1005M2410 1055L2407 1115M2410 1115L2409 1193M2505 1038L2547 1036M2547 1038L2592 1036M2592 1038L2646 1037M2443 1044L2441 1074M2443 1074L2444 1126M2443 1169L2443 1213M2443 1213L2443 1266M2380 1077L2423 1075M2462 1077L2509 1076M2558 1077L2624 1077M2482 975L2479 1054M2482 1186L2483 1247M2495 1110L2539 1111M2539 1110L2569 1111M2569 1110L2625 1111M2625 1110L2655 1107M2515 975L2514 1051M2515 1077L2513 1141M2515 1141L2517 1192M2509 1143L2572 1146M2572 1143L2637 1141M2548 1211L2547 1269M2414 1176L2451 1174M2451 1176L2487 1178M2526 1176L2597 1178M2597 1176L2634 1176M2581 975L2579 1024M2581 1081L2579 1154M2581 1213L2580 1268M2380 1203L2418 1205M2469 1203L2495 1202M2495 1203L2550 1203M2607 1203L2655 1203M2608 975L2610 1050M2608 1050L2609 1079M2608 1079L2605 1154M2608 1154L2609 1208M2608 1208L2609 1257M2406 1240L2481 1239M2481 1240L2538 1243M2538 1240L2609 1242M2645 975L2643 1027M2645 1164L2648 1239M2380 1267L2444 1264M2506 1267L2552 1265M2586 1267L2614 1269M2672 975L2673 1042M2672 1042L2669 1084M2672 1150L2673 1223M2672 1223L2674 1299M2513 1300L2590 1302M2590 1300L2633 1298M2705 975L2702 1029M2705 1029L2706 1063M2705 1190L2705 1218" stroke="#fbfbfb" stroke-width="2.4" fill="none"/>
<clipPath id="ca20"><rect x="3460" y="1760" width="222" height="361"/></clipPath>
<path clip-path="url(#ca20)" d="M3213 1562L3285 1549M3285 1549L3335 1542M3335 1540L3423 1528M3459 1519L3498 1510M3566 1500L3604 1491M3652 1484L3721 1472M3843 1451L3929 1435M3105 1805L3115 1854M3114 1854L3123 1914M3136 1976L3147 2045M3148 2044L3159 2105M3169 2166L3184 2253M3184 2253L3191 2289M3191 2289L3201 2349M3201 2349L3208 2395M3146 1607L3189 1597M3419 1558L3503 1544M3503 1544L3582 1528M3583 1529L3642 1521M3112 1655L3128 1739M3127 1739L3141 1803M3138 1804L3145 1859M3166 1961L3177 2024M3177 2024L3183 2062M3209 2206L3217 2262M3152 1644L3215 1635M3288 1620L3325 1614M3370 1606L3434 1592M3434 1595L3492 1582M3493 1584L3563 1575M3562 1572L3620 1563M3619 1562L3653 1555M3653 1556L3718 1548M3717 1545L3763 1536M3763 1537L3799 1532M3799 1530L3829 1526M3149 1648L3159 1700M3166 1742L3173 1779M3189 1873L3194 1912M3196 1912L3203 1956M3219 2043L3227 2095M3228 2094L3235 2145M3268 2322L3277 2373M3159 1685L3198 1676M3365 1649L3400 1644M3400 1643L3454 1632M3454 1634L3541 1619M3734 1584L3791 1572M3870 1560L3946 1546M3191 1641L3204 1725M3205 1725L3215 1770M3213 1770L3227 1849M3227 1849L3238 1910M3245 1952L3250 1981M3250 1981L3264 2062M3300 2261L3312 2324M3311 2325L3320 2376M3443 1672L3515 1659M3515 1659L3562 1651M3682 1630L3730 1619M3730 1621L3804 1611M3871 1596L3914 1586M3226 1635L3242 1717M3240 1717L3252 1782M3252 1782L3266 1851M3271 1892L3282 1960M3283 1960L3297 2038M3297 2038L3309 2116M3311 2115L3315 2155M3217 1739L3284 1725M3285 1727L3353 1715M3436 1700L3494 1691M3494 1690L3572 1676M3572 1676L3610 1668M3649 1663L3694 1653M3259 1672L3262 1702M3280 1788L3286 1832M3288 1832L3293 1874M3295 1873L3304 1928M3311 1967L3329 2048M3346 2161L3349 2197M3352 2196L3361 2234M3359 2235L3368 2291M3249 1781L3331 1764M3411 1752L3493 1738M3493 1738L3565 1723M3565 1725L3625 1715M3625 1714L3655 1711M3726 1696L3809 1681M3887 1668L3932 1658M3325 1777L3333 1834M3335 1834L3343 1862M3369 2026L3375 2068M3377 2067L3393 2141M3390 2142L3395 2183M3402 2213L3415 2294M3183 1821L3261 1808M3327 1795L3361 1787M3484 1768L3532 1758M3533 1759L3563 1754M3563 1754L3647 1738M3694 1731L3738 1720M3802 1712L3840 1703M3840 1705L3892 1697M3326 1617L3339 1699M3340 1699L3351 1758M3351 1758L3357 1789M3375 1896L3387 1968M3388 1968L3397 2027M3412 2109L3422 2156M3421 2156L3434 2238M3446 2301L3456 2342M3254 1855L3298 1849M3297 1847L3338 1841M3338 1840L3373 1834M3373 1834L3444 1821M3506 1810L3566 1802M3720 1773L3759 1767M3759 1766L3814 1753M3814 1756L3881 1745M3446 2033L3455 2090M3456 2090L3469 2157M3468 2157L3475 2195M3494 2306L3499 2338M3198 1903L3267 1888M3352 1876L3397 1869M3550 1841L3592 1832M3592 1833L3628 1825M3628 1827L3674 1820M3674 1819L3755 1808M3754 1805L3812 1793M3408 1603L3418 1675M3421 1675L3424 1704M3426 1704L3435 1748M3447 1826L3462 1905M3461 1905L3471 1968M3486 2044L3496 2105M3496 2105L3511 2182M3510 2182L3524 2248M3522 2248L3530 2281M3202 1925L3250 1918M3337 1901L3368 1895M3368 1895L3416 1888M3415 1887L3471 1874M3472 1877L3558 1860M3559 1862L3646 1846M3717 1834L3802 1821M3802 1819L3830 1814M3830 1814L3906 1801M3437 1638L3447 1687M3459 1762L3468 1833M3478 1870L3489 1950M3529 2164L3542 2221M3546 2260L3561 2332M3210 1972L3264 1961M3352 1947L3433 1932M3433 1933L3490 1926M3489 1923L3571 1912M3570 1909L3616 1901M3616 1901L3653 1897M3652 1894L3728 1880M3728 1881L3785 1874M3850 1859L3904 1849M3904 1850L3956 1842M3477 1590L3482 1630M3484 1630L3493 1683M3500 1721L3507 1756M3515 1804L3528 1875M3533 1908L3547 1979M3559 2054L3575 2141M3574 2141L3580 2186M3582 2185L3596 2270M3597 2269L3608 2343M3272 1988L3332 1978M3374 1970L3461 1954M3461 1955L3510 1948M3510 1946L3540 1941M3540 1941L3596 1928M3596 1931L3634 1927M3633 1924L3701 1910M3701 1912L3759 1905M3831 1890L3863 1886M3503 1586L3508 1625M3510 1625L3515 1662M3526 1717L3541 1785M3539 1786L3546 1832M3547 1832L3551 1862M3552 1862L3563 1923M3582 2034L3591 2090M3598 2122L3610 2188M3337 2027L3365 2019M3418 2012L3492 1999M3492 1999L3532 1993M3532 1992L3562 1987M3638 1974L3697 1966M3697 1963L3732 1960M3731 1957L3819 1940M3819 1942L3871 1932M3872 1932L3926 1925M3926 1923L4008 1906M3579 1730L3595 1818M3594 1818L3600 1863M3602 1863L3617 1934M3623 1979L3638 2049M3644 2103L3662 2190M3660 2190L3673 2270M3228 2074L3288 2062M3412 2041L3484 2029M3484 2028L3551 2018M3551 2017L3595 2010M3674 1995L3762 1982M3762 1980L3800 1974M3799 1973L3846 1962M3847 1965L3910 1953M3579 1573L3582 1605M3618 1795L3631 1868M3631 1868L3643 1922M3640 1922L3654 1984M3651 1984L3664 2043M3670 2090L3673 2124M3676 2123L3691 2211M3234 2108L3275 2103M3274 2101L3346 2088M3346 2089L3374 2082M3375 2084L3447 2073M3446 2071L3514 2058M3514 2059L3562 2048M3562 2051L3596 2047M3718 2023L3799 2010M3799 2009L3849 2001M3849 2000L3915 1986M3916 1988L3989 1974M3614 1566L3618 1602M3620 1602L3628 1656M3629 1656L3639 1722M3668 1874L3683 1962M3698 2047L3710 2117M3711 2116L3722 2174M3732 2239L3743 2312M3392 2123L3432 2116M3432 2116L3502 2107M3652 2077L3712 2068M3712 2067L3747 2063M3747 2061L3830 2047M3922 2030L3956 2026M3691 1761L3702 1820M3718 1915L3727 1973M3760 2152L3774 2237M3331 2159L3407 2144M3407 2146L3489 2134M3489 2131L3568 2120M3637 2105L3713 2089M3714 2092L3745 2085M3810 2074L3867 2066M3867 2065L3955 2050M3679 1555L3694 1630M3693 1631L3706 1689M3712 1741L3721 1778M3719 1778L3724 1819M3740 1899L3749 1948M3749 1948L3766 2037M3252 2210L3339 2197M3338 2195L3389 2187M3470 2172L3535 2161M3535 2160L3600 2148M3658 2138L3701 2129M3929 2091L3970 2082M3731 1638L3744 1710M3744 1710L3757 1774M3755 1774L3763 1839M3818 2130L3826 2180M3826 2180L3832 2227M3835 2227L3841 2269M3313 2234L3342 2227M3525 2197L3600 2181M3673 2171L3707 2164M3707 2165L3752 2157M3752 2157L3839 2142M3839 2142L3892 2130M3892 2132L3942 2122M3943 2123L4025 2111M3758 1594L3773 1660M3783 1732L3787 1761M3788 1761L3803 1830M3800 1831L3811 1905M3813 1905L3823 1951M3832 2011L3845 2099M3855 2140L3869 2223M3299 2277L3337 2270M3337 2270L3397 2258M3397 2260L3445 2253M3481 2245L3568 2227M3569 2230L3606 2226M3605 2223L3650 2214M3650 2215L3717 2203M3717 2203L3781 2189M3782 2192L3822 2186M3854 2179L3937 2163M3814 1679L3825 1730M3822 1730L3832 1781M3831 1781L3840 1815M3838 1815L3841 1849M3861 1947L3873 2028M3875 2027L3888 2112M3890 2112L3898 2142M3271 2318L3301 2312M3301 2312L3384 2298M3384 2298L3437 2291M3436 2288L3521 2273M3521 2273L3551 2270M3551 2268L3606 2255M3607 2258L3684 2245M3684 2245L3730 2235M3731 2236L3778 2230M3777 2228L3815 2220M3881 2210L3942 2202M3942 2199L3974 2191M3975 2193L4037 2181M3823 1530L3834 1597M3835 1597L3846 1673M3860 1743L3872 1797M3870 1797L3879 1868M3895 1939L3907 2014M3908 2014L3918 2063M3359 2337L3395 2328M3396 2330L3436 2321M3572 2299L3660 2282M3661 2284L3692 2279M3692 2278L3722 2273M3722 2273L3787 2263M3786 2262L3870 2248M3856 1524L3868 1594M3869 1594L3874 1628M3882 1669L3893 1716M3891 1717L3896 1762M3913 1843L3916 1876M3966 2143L3973 2183M3973 2183L3980 2219M3285 2398L3362 2383M3434 2372L3494 2361M3494 2361L3560 2352M3560 2350L3593 2345M3659 2332L3694 2325M3694 2326L3724 2319M3724 2321L3794 2305M3855 2298L3941 2283M3941 2282L4019 2268M3914 1577L3921 1623M3922 1623L3928 1670M3930 1669L3940 1720M3939 1720L3951 1782M4005 2092L4018 2178M4025 2207L4036 2265M3292 2435L3348 2428M3347 2425L3377 2418M3406 2415L3458 2406M3458 2406L3497 2402M3559 2388L3603 2379M3649 2372L3709 2362M3709 2362L3754 2352M3754 2354L3809 2346M3808 2344L3879 2330M3879 2332L3953 2321M3940 1509L3950 1556M3949 1556L3958 1612M3977 1716L3993 1801M3992 1801L4003 1868M4004 1868L4015 1942M4050 2131L4056 2182" stroke="#fbfbfb" stroke-width="2.4" fill="none"/>
<clipPath id="ca21"><rect x="2560" y="1940" width="240" height="181"/></clipPath>
<path clip-path="url(#ca21)" d="M2774 1749L2833 1775M2832 1776L2883 1799M2883 1800L2961 1840M2963 1837L3028 1865M2457 1811L2424 1887M2762 1787L2811 1809M2999 1898L3029 1912M2469 1880L2433 1951M2435 1952L2412 2005M2355 2124L2317 2199M2556 1728L2610 1754M2637 1766L2708 1798M2824 1853L2886 1878M2964 1918L2997 1933M2560 1763L2523 1834M2615 1792L2650 1806M2508 1952L2494 1983M2450 2077L2419 2139M2421 2140L2402 2180M2734 1901L2816 1937M2901 1979L2945 2000M2636 1794L2621 1823M2603 1880L2676 1911M2675 1914L2741 1946M2796 1970L2868 2002M2939 2037L3006 2071M2583 1992L2557 2044M2537 2092L2510 2155M2492 2189L2464 2252M2562 1890L2632 1924M2661 1936L2703 1953M2780 1991L2807 2002M2851 2024L2904 2050M2904 2049L2972 2084M2613 1991L2589 2041M2676 1992L2711 2011M2831 2064L2907 2101M2729 1846L2715 1880M2714 1879L2675 1957M2677 1958L2661 1992M2661 1992L2646 2022M2605 2112L2572 2182M2572 2183L2553 2224M2501 1941L2534 1956M2750 2056L2816 2090M2860 2108L2933 2144M2720 1930L2686 2001M2687 2002L2652 2074M2597 2194L2575 2240M2518 1997L2549 2011M2816 1829L2790 1878M2705 2068L2681 2120M2655 2174L2631 2228M2615 2260L2591 2309M2429 2001L2487 2029M2487 2028L2535 2050M2719 2134L2702 2167M2416 2028L2496 2068M2497 2066L2574 2103M2660 2142L2713 2168M2841 2226L2867 2240M2789 2057L2776 2090M2774 2089L2739 2164M2692 2265L2668 2308M2404 2055L2448 2078M2515 2107L2570 2131M2570 2133L2623 2154M2621 2157L2701 2196M2835 2026L2817 2071M2753 2203L2735 2246M2465 2133L2495 2147M2714 2250L2742 2261M2760 2295L2745 2321M2375 2118L2412 2135M2501 2177L2542 2194M2621 2233L2669 2254M2734 2285L2780 2308M2834 2192L2803 2255M2804 2256L2774 2316M2538 2237L2614 2274M2641 2285L2673 2299M2673 2299L2701 2310M2700 2312L2754 2335M2753 2337L2781 2347M2968 1997L2948 2041M2872 2204L2849 2252M2806 2345L2771 2425M2537 2276L2615 2311M2614 2312L2684 2343M2683 2344L2718 2360M3038 1933L3013 1988M2972 2074L2960 2104M2888 2254L2853 2323M2855 2324L2825 2388" stroke="#fbfbfb" stroke-width="2.4" fill="none"/>
<clipPath id="ca22"><rect x="3360" y="1400" width="200" height="160"/></clipPath>
<path clip-path="url(#ca22)" d="M3260 1240L3315 1238M3359 1240L3437 1238M3539 1240L3612 1241M3612 1240L3643 1243M3220 1280L3222 1309M3220 1378L3221 1418M3220 1418L3222 1452M3220 1551L3222 1599M3319 1276L3386 1276M3386 1276L3470 1279M3470 1276L3511 1274M3511 1276L3567 1277M3256 1280L3256 1312M3256 1403L3257 1466M3256 1466L3254 1514M3256 1514L3257 1584M3256 1584L3256 1612M3256 1661L3259 1714M3260 1305L3306 1307M3306 1305L3381 1305M3381 1305L3414 1308M3467 1305L3544 1307M3586 1305L3664 1305M3285 1280L3282 1321M3285 1371L3286 1401M3285 1401L3283 1454M3285 1634L3287 1666M3260 1348L3337 1350M3337 1348L3397 1348M3397 1348L3450 1345M3450 1348L3495 1346M3495 1348L3523 1345M3523 1348L3592 1345M3328 1362L3331 1438M3328 1510L3328 1567M3328 1615L3329 1662M3328 1662L3328 1732M3260 1376L3344 1379M3344 1376L3397 1378M3435 1376L3503 1375M3356 1280L3357 1330M3356 1330L3357 1361M3356 1621L3358 1656M3356 1656L3354 1703M3354 1405L3429 1403M3543 1405L3598 1403M3598 1405L3670 1402M3385 1280L3387 1330M3385 1402L3385 1442M3385 1494L3382 1559M3385 1674L3383 1758M3300 1452L3381 1453M3381 1452L3462 1453M3554 1452L3630 1452M3630 1452L3703 1450M3432 1451L3429 1479M3432 1506L3435 1565M3432 1592L3432 1669M3291 1485L3335 1487M3335 1485L3379 1483M3379 1485L3432 1482M3432 1485L3467 1484M3545 1485L3597 1486M3465 1490L3466 1542M3465 1608L3463 1686M3260 1518L3298 1518M3298 1518L3346 1521M3346 1518L3415 1517M3465 1518L3507 1517M3550 1518L3603 1519M3498 1280L3501 1332M3498 1406L3499 1467M3498 1467L3497 1543M3371 1551L3430 1553M3430 1551L3468 1550M3468 1551L3539 1553M3531 1471L3530 1526M3531 1526L3533 1594M3260 1575L3307 1577M3307 1575L3384 1575M3384 1575L3417 1576M3417 1575L3466 1573M3466 1575L3529 1572M3529 1575L3589 1576M3555 1313L3553 1355M3555 1490L3554 1574M3555 1634L3554 1715M3457 1611L3541 1612M3591 1280L3594 1311M3591 1311L3592 1362M3591 1410L3591 1444M3591 1444L3588 1488M3591 1548L3589 1630M3260 1649L3315 1651M3315 1649L3373 1649M3373 1649L3448 1648M3448 1649L3521 1648M3585 1649L3612 1650M3629 1472L3627 1531M3629 1583L3631 1627M3297 1680L3379 1679M3379 1680L3446 1678M3446 1680L3503 1679M3565 1680L3627 1681M3660 1461L3659 1492M3660 1492L3658 1549M3660 1549L3662 1629M3660 1668L3658 1710M3260 1716L3313 1717M3524 1716L3591 1716M3696 1391L3699 1476M3696 1562L3698 1641M3696 1641L3696 1702" stroke="#fbfbfb" stroke-width="2.4" fill="none"/>
<clipPath id="ca23"><rect x="3560" y="1200" width="122" height="280"/></clipPath>
<path clip-path="url(#ca23)" d="M3491 1026L3547 1028M3606 1026L3647 1025M3307 1153L3306 1217M3307 1608L3307 1663M3341 1052L3388 1049M3388 1052L3442 1050M3518 1052L3596 1051M3596 1052L3636 1049M3636 1052L3687 1052M3687 1052L3754 1054M3754 1052L3783 1049M3783 1052L3831 1053M3831 1052L3895 1051M3333 1060L3333 1118M3333 1118L3331 1190M3333 1380L3330 1451M3333 1478L3331 1523M3333 1523L3330 1570M3462 1092L3505 1093M3532 1092L3607 1089M3645 1092L3696 1091M3696 1092L3744 1090M3744 1092L3801 1090M3801 1092L3880 1089M3880 1092L3954 1089M3373 1111L3374 1176M3373 1234L3370 1268M3373 1268L3375 1345M3373 1345L3370 1409M3373 1409L3373 1486M3373 1512L3370 1574M3341 1115L3411 1114M3411 1115L3477 1115M3477 1115L3510 1116M3510 1115L3583 1113M3851 1115L3907 1116M3396 1277L3397 1334M3396 1334L3397 1363M3396 1363L3393 1393M3396 1393L3393 1441M3396 1495L3395 1546M3396 1585L3394 1662M3341 1143L3385 1144M3574 1143L3631 1143M3631 1143L3663 1141M3663 1143L3705 1145M3705 1143L3751 1142M3751 1143L3779 1144M3898 1143L3951 1144M3424 1192L3426 1219M3424 1219L3422 1251M3424 1251L3425 1281M3424 1281L3422 1315M3424 1436L3422 1481M3424 1481L3426 1519M3424 1617L3422 1675M3341 1182L3383 1182M3383 1182L3447 1180M3505 1182L3545 1180M3545 1182L3611 1181M3646 1182L3706 1183M3827 1182L3875 1182M3463 1110L3463 1140M3463 1191L3462 1261M3463 1333L3462 1361M3463 1390L3464 1437M3463 1466L3466 1537M3463 1537L3464 1577M3463 1577L3462 1604M3341 1219L3404 1221M3404 1219L3462 1216M3882 1219L3953 1218M3500 1060L3498 1105M3500 1105L3499 1163M3500 1163L3498 1225M3500 1321L3498 1349M3500 1389L3500 1432M3500 1517L3499 1588M3500 1588L3498 1635M3341 1238L3419 1239M3419 1238L3449 1237M3625 1238L3660 1239M3714 1238L3788 1237M3788 1238L3826 1241M3519 1060L3520 1131M3519 1131L3521 1196M3519 1274L3517 1332M3519 1332L3517 1360M3519 1429L3520 1478M3519 1582L3520 1655M3374 1276L3450 1276M3450 1276L3500 1276M3532 1276L3575 1277M3575 1276L3636 1278M3636 1276L3677 1275M3786 1276L3864 1274M3864 1276L3944 1274M3557 1125L3555 1202M3557 1202L3556 1257M3557 1257L3557 1318M3557 1318L3560 1383M3557 1492L3554 1532M3557 1595L3560 1659M3341 1304L3408 1301M3700 1304L3754 1305M3754 1304L3784 1304M3878 1304L3923 1302M3585 1060L3584 1110M3585 1110L3583 1153M3585 1153L3584 1214M3585 1294L3584 1356M3585 1356L3587 1396M3585 1396L3588 1439M3585 1439L3586 1518M3585 1569L3583 1631M3380 1334L3452 1332M3577 1334L3638 1335M3669 1334L3718 1332M3718 1334L3779 1335M3779 1334L3852 1331M3615 1197L3613 1256M3501 1365L3551 1367M3551 1365L3580 1368M3623 1365L3649 1367M3649 1365L3724 1364M3724 1365L3794 1365M3794 1365L3827 1363M3884 1365L3948 1365M3646 1137L3649 1165M3646 1229L3649 1265M3646 1369L3646 1401M3646 1537L3649 1613M3646 1613L3649 1666M3341 1407L3376 1408M3473 1407L3533 1410M3533 1407L3594 1409M3594 1407L3669 1405M3669 1407L3711 1408M3848 1407L3886 1407M3886 1407L3958 1408M3688 1060L3690 1119M3688 1119L3689 1147M3688 1147L3687 1197M3688 1244L3688 1279M3688 1335L3690 1384M3688 1384L3690 1432M3688 1509L3686 1551M3341 1434L3407 1432M3407 1434L3449 1435M3517 1434L3576 1433M3576 1434L3654 1436M3728 1434L3783 1436M3783 1434L3845 1435M3845 1434L3897 1433M3715 1132L3715 1196M3715 1196L3713 1227M3715 1227L3717 1286M3715 1344L3713 1376M3715 1413L3715 1458M3499 1474L3543 1475M3543 1474L3620 1474M3742 1474L3788 1473M3788 1474L3850 1471M3755 1060L3757 1135M3755 1164L3756 1213M3755 1213L3754 1288M3755 1288L3755 1345M3755 1345L3758 1376M3755 1404L3754 1467M3755 1549L3757 1576M3477 1505L3554 1507M3554 1505L3621 1506M3662 1505L3729 1506M3729 1505L3774 1507M3774 1505L3812 1503M3812 1505L3844 1506M3872 1505L3914 1508M3786 1060L3785 1118M3786 1191L3787 1257M3786 1330L3788 1387M3786 1387L3784 1422M3786 1574L3784 1604M3786 1604L3788 1652M3341 1537L3417 1540M3450 1537L3507 1535M3626 1537L3702 1535M3827 1537L3864 1538M3818 1095L3820 1136M3818 1136L3819 1168M3818 1242L3819 1314M3818 1565L3820 1610M3384 1561L3459 1562M3459 1561L3522 1560M3522 1561L3576 1562M3576 1561L3628 1564M3842 1060L3839 1126M3842 1126L3841 1161M3842 1505L3842 1571M3842 1571L3842 1650M3539 1596L3616 1598M3756 1596L3792 1595M3792 1596L3866 1594M3877 1060L3877 1089M3877 1150L3875 1210M3877 1210L3879 1250M3877 1250L3878 1299M3877 1388L3876 1424M3877 1424L3875 1474M3877 1599L3876 1651M3341 1624L3373 1627M3373 1624L3446 1624M3446 1624L3504 1625M3504 1624L3577 1626M3823 1624L3894 1622M3905 1060L3903 1096M3905 1207L3907 1262M3905 1262L3904 1303M3905 1404L3905 1471M3905 1471L3904 1508M3505 1665L3569 1665M3569 1665L3621 1664M3621 1665L3697 1664M3697 1665L3775 1666M3846 1665L3893 1666M3893 1665L3942 1666M3946 1060L3945 1086M3946 1086L3946 1137M3946 1137L3947 1184M3946 1291L3945 1340M3946 1399L3948 1456M3946 1456L3948 1498M3946 1498L3947 1555M3946 1555L3947 1603" stroke="#fbfbfb" stroke-width="2.4" fill="none"/>
<clipPath id="ca24"><rect x="3100" y="1200" width="340" height="200"/></clipPath>
<path clip-path="url(#ca24)" d="M3080 836L3154 856M3226 875L3308 896M3308 897L3338 906M3338 905L3385 919M3419 926L3473 941M3536 958L3602 978M2892 1167L2878 1212M2836 1376L2827 1405M2810 1473L2794 1532M3036 859L3074 866M3073 869L3101 876M3172 895L3252 914M3625 1017L3683 1032M3683 1032L3743 1046M3005 877L2994 917M2994 917L2987 953M2967 1020L2945 1093M2947 1094L2928 1160M2919 1198L2902 1265M2901 1264L2880 1341M2881 1341L2871 1388M2852 1448L2840 1501M3061 911L3137 932M3137 931L3181 945M3313 979L3360 992M3360 991L3424 1009M3467 1020L3526 1034M3616 1060L3699 1083M3047 888L3038 922M3038 922L3019 995M3019 995L3004 1040M2994 1087L2977 1147M2978 1148L2963 1204M2949 1254L2927 1332M3016 934L3072 948M3072 949L3133 968M3286 1006L3357 1028M3358 1025L3418 1043M3419 1042L3449 1047M3517 1068L3571 1085M3572 1083L3634 1097M3634 1099L3712 1119M3080 897L3069 939M3050 1009L3028 1084M3020 1121L3006 1162M2994 1217L2986 1256M2984 1255L2976 1289M2975 1289L2955 1371M2953 1370L2942 1418M2940 1417L2927 1460M2911 1526L2893 1600M3063 984L3148 1010M3220 1026L3265 1038M3561 1118L3641 1136M3093 987L3073 1054M3025 1243L3011 1288M2956 1500L2948 1531M3051 1017L3093 1031M3094 1028L3172 1050M3172 1049L3253 1073M3382 1105L3424 1116M3505 1138L3555 1154M3631 1172L3663 1181M3099 1100L3087 1153M3085 1153L3075 1198M3012 1423L2990 1495M3113 1067L3177 1086M3214 1094L3262 1110M3422 1150L3475 1161M3474 1164L3506 1173M3577 1192L3621 1206M3622 1204L3689 1222M3162 991L3150 1036M3150 1036L3136 1088M3083 1285L3067 1343M3068 1343L3044 1426M3009 1561L2989 1647M2979 1072L3059 1096M3139 1115L3208 1133M3244 1143L3272 1150M3272 1151L3317 1166M3406 1186L3475 1206M3529 1219L3569 1230M3171 1110L3153 1177M3138 1232L3119 1304M3119 1304L3110 1336M3110 1336L3096 1385M2971 1103L3004 1110M3260 1181L3318 1197M3318 1196L3386 1216M3478 1239L3556 1258M3583 1267L3613 1275M3613 1275L3657 1285M3249 942L3229 1009M3231 1010L3214 1062M3192 1156L3180 1192M3182 1192L3161 1278M3109 1466L3095 1518M3095 1518L3087 1561M3086 1169L3116 1174M3456 1268L3499 1281M3602 1307L3688 1329M3282 951L3266 1013M3265 1013L3251 1070M3216 1196L3202 1235M3205 1236L3197 1276M3164 1392L3145 1467M3127 1527L3114 1568M2951 1177L3018 1195M3089 1213L3159 1232M3219 1248L3267 1260M3340 1281L3416 1301M3478 1318L3517 1328M3323 962L3313 992M3315 992L3308 1026M3241 1268L3222 1341M3204 1405L3193 1452M3191 1452L3179 1501M3178 1501L3168 1536M3169 1536L3151 1600M3152 1600L3134 1660M3201 1280L3247 1294M3303 1307L3369 1324M3356 971L3343 1011M3322 1098L3312 1128M3209 1521L3190 1598M3005 1269L3034 1277M3238 1331L3281 1343M3505 1403L3556 1417M3556 1416L3591 1423M3351 1145L3333 1203M3294 1358L3286 1386M2924 1276L2988 1296M3075 1316L3162 1337M3162 1339L3218 1354M3284 1372L3370 1395M3370 1395L3416 1408M3367 1195L3345 1279M3287 1493L3279 1530M3277 1529L3259 1591M3042 1344L3117 1367M3408 1442L3460 1456M3460 1456L3502 1468M3502 1467L3562 1486M3563 1483L3632 1504M3456 998L3439 1062M3379 1285L3359 1357M3345 1410L3326 1475M3328 1475L3310 1542M3292 1609L3267 1692M3201 1426L3248 1437M3248 1438L3326 1459M3326 1459L3406 1480M3493 1008L3483 1047M3462 1124L3448 1181M3446 1181L3428 1243M3408 1325L3385 1407M3386 1407L3374 1448M3333 1603L3316 1663M3317 1663L3296 1744M3014 1412L3098 1435M3167 1453L3242 1472M3242 1473L3299 1490M3299 1489L3375 1510M3436 1525L3509 1547M3474 1216L3466 1247M3355 1658L3330 1744M2887 1417L2969 1438M3132 1482L3164 1488M3163 1491L3234 1508M3305 1529L3357 1544M3358 1543L3437 1564M3516 1585L3555 1596M3438 1492L3429 1527M3414 1582L3405 1623M2876 1458L2917 1470M3134 1527L3175 1538M3175 1538L3210 1546M3209 1548L3275 1566M3520 1353L3509 1400M3492 1457L3471 1532M3434 1671L3417 1745M2940 1508L2998 1526M3120 1556L3165 1569M3224 1584L3287 1602M3320 1610L3402 1629M3559 1327L3552 1363M3549 1363L3534 1418M3534 1419L3525 1455M3470 1661L3456 1723M3064 1587L3135 1607M3136 1606L3173 1616M3173 1616L3238 1636M3294 1649L3362 1666M3362 1667L3444 1690M3487 1700L3522 1708M3677 1057L3668 1101M3666 1101L3657 1132M3657 1132L3645 1185M3643 1185L3623 1250M3625 1251L3601 1333M3582 1414L3574 1444M3538 1578L3526 1613M3528 1614L3518 1645M2848 1562L2919 1582M2970 1594L3043 1615M3043 1614L3111 1630M3149 1642L3209 1659M3209 1658L3268 1674M3268 1674L3332 1691M3332 1691L3396 1705M3395 1708L3470 1729M3471 1729L3508 1736M3708 1065L3686 1152M3671 1202L3664 1231M3663 1230L3643 1307M3643 1307L3637 1339M3635 1338L3621 1384M3569 1584L3555 1623M3558 1623L3540 1696M2877 1605L2959 1630M3039 1649L3096 1665M3096 1664L3160 1679M3216 1696L3265 1706M3264 1709L3336 1730M3733 1107L3713 1170M3715 1171L3693 1256M3672 1334L3658 1382M3659 1382L3643 1450M3573 1703L3556 1769" stroke="#fbfbfb" stroke-width="2.4" fill="none"/>
<clipPath id="ca25"><rect x="2800" y="1640" width="190" height="160"/></clipPath>
<path clip-path="url(#ca25)" d="M2635 1562L2729 1528M2729 1528L2809 1498M2945 1449L3001 1430M2953 1478L3040 1448M2697 1783L2710 1814M2748 1923L2759 1962M2925 1528L2968 1515M2880 1607L2959 1578M2840 1893L2858 1948M2969 1601L3025 1582M2749 1571L2762 1613M2768 1731L2820 1710M2859 1697L2910 1681M2798 1553L2831 1641M2831 1641L2864 1733M2762 1777L2846 1747M2900 1709L2925 1779M2732 1829L2808 1802M2807 1801L2878 1774M2874 1526L2896 1588M3025 1757L3090 1735M2904 1514L2919 1563M2895 1838L2943 1818M2972 1606L2985 1649M3017 1730L3050 1821M2832 1918L2867 1905M3074 1729L3101 1806M3108 1850L3193 1819M3013 1475L3042 1547M3040 1548L3074 1640M2801 2016L2855 1996M2993 1946L3057 1924M3056 1923L3123 1897M3061 1457L3084 1525M3185 1798L3215 1887" stroke="#fbfbfb" stroke-width="2.4" fill="none"/>
<clipPath id="ca26"><rect x="2460" y="1400" width="190" height="160"/></clipPath>
<path clip-path="url(#ca26)" d="M2365 1220L2405 1220M2295 1290L2293 1375M2295 1375L2295 1437M2525 1258L2562 1258M2333 1522L2331 1591M2333 1591L2335 1643M2457 1304L2505 1302M2643 1304L2721 1305M2379 1356L2376 1415M2379 1486L2381 1545M2379 1593L2378 1645M2455 1341L2496 1343M2724 1341L2756 1341M2416 1443L2413 1521M2416 1521L2419 1589M2416 1589L2414 1659M2416 1659L2416 1712M2365 1378L2416 1381M2547 1378L2629 1379M2453 1290L2454 1326M2453 1496L2455 1584M2453 1652L2456 1682M2580 1410L2632 1411M2632 1410L2721 1410M2485 1565L2487 1647M2485 1647L2484 1728M2365 1451L2431 1453M2541 1451L2594 1454M2708 1451L2749 1453M2526 1333L2527 1405M2526 1443L2525 1483M2526 1603L2526 1688M2365 1474L2399 1473M2560 1474L2645 1473M2645 1474L2682 1476M2682 1474L2733 1472M2549 1334L2549 1386M2549 1456L2551 1491M2549 1605L2549 1691M2449 1519L2499 1521M2569 1519L2621 1520M2621 1519L2699 1518M2744 1519L2824 1521M2626 1442L2627 1487M2669 1595L2705 1593M2670 1408L2670 1496M2670 1575L2667 1641M2396 1629L2449 1628M2704 1542L2702 1589M2704 1635L2702 1724M2722 1662L2810 1664M2737 1537L2736 1616M2365 1689L2439 1687M2551 1689L2640 1687M2723 1689L2787 1691M2764 1497L2762 1568M2492 1733L2577 1732M2684 1733L2751 1732M2808 1576L2806 1625" stroke="#fbfbfb" stroke-width="2.4" fill="none"/>
<clipPath id="ca27"><rect x="2460" y="202" width="100" height="98"/></clipPath>
<path clip-path="url(#ca27)" d="M2353 151L2355 227M2353 320L2351 399M2496 122L2585 124M2381 151L2382 240M2587 170L2654 169M2563 214L2607 213M2452 253L2551 250M2551 253L2633 254M2410 295L2490 293M2490 295L2584 297M2542 334L2577 332M2577 334L2616 335M2593 226L2591 312M2410 368L2474 371M2627 151L2629 192M2627 314L2630 372M2469 404L2528 406" stroke="#fbfbfb" stroke-width="2.4" fill="none"/>
<clipPath id="ca28"><rect x="2740" y="202" width="250" height="98"/></clipPath>
<path clip-path="url(#ca28)" d="M2992 -35L3064 -9M3064 -9L3131 17M2593 84L2562 163M2720 -82L2772 -65M3055 40L3132 65M3131 68L3201 94M2703 -74L2686 -34M2640 101L2629 134M2707 -47L2764 -23M2922 31L2961 45M3036 73L3072 89M2710 17L2690 74M2689 74L2668 123M2671 124L2655 166M2836 33L2892 54M2767 -51L2757 -15M2755 -16L2728 50M2678 194L2667 224M2627 334L2605 402M2685 14L2719 30M2884 87L2955 115M2955 113L3016 138M3017 135L3084 158M2799 -39L2772 27M2717 188L2685 273M2664 334L2643 389M2706 72L2793 102M2942 158L2988 176M3105 217L3133 230M2826 24L2806 86M2804 85L2794 120M2685 413L2660 490M2657 90L2716 111M2835 155L2875 166M2874 169L2936 190M2935 191L2999 215M3048 233L3099 251M3099 251L3131 263M2853 50L2840 92M2838 91L2809 170M2809 170L2789 232M2643 129L2716 155M2716 155L2796 184M3076 286L3145 311M2852 173L2831 225M2789 346L2755 434M2757 435L2726 524M2732 206L2763 216M2763 217L2817 236M2816 237L2855 253M2910 271L2959 289M2959 289L2989 299M2989 300L3018 313M2954 17L2931 83M2903 156L2883 214M2882 214L2855 291M2831 355L2806 425M2618 197L2681 218M2680 220L2722 237M2898 299L2928 313M2960 322L3011 343M3012 341L3095 369M2951 114L2924 184M2926 184L2907 230M2891 279L2871 341M2837 427L2810 494M2812 495L2782 582M2604 237L2658 257M2825 317L2901 343M2940 359L2974 372M2975 372L3063 402M3062 404L3151 433M2925 308L2896 390M2658 301L2735 329M2977 417L3030 434M2968 311L2942 381M2581 300L2636 321M2636 320L2691 341M2692 340L2747 363M2748 361L2809 384M2809 383L2858 398M3073 97L3059 139M3046 171L3025 222M2997 307L2978 356M2933 482L2912 537M2564 348L2634 375M2634 373L2671 384M2792 431L2863 456M2862 456L2947 486M2946 487L2982 499M3037 346L3014 415M2692 423L2745 446M2746 443L2810 466M2648 463L2706 487M2756 503L2827 530M2988 587L3033 602M3119 353L3103 393M3074 478L3046 555M3046 555L3033 585M2527 449L2613 480M2612 480L2654 495M2693 510L2725 521M2761 535L2832 562M2833 561L2890 579M3234 119L3206 201M3205 201L3187 254M3185 253L3173 291M3172 290L3146 359M3124 422L3102 490M3073 562L3053 625" stroke="#fbfbfb" stroke-width="2.4" fill="none"/>
<path d="M2559.0 483.0 C2577.7 477.2 2637.0 461.2 2671.0 448.0 C2705.0 434.8 2741.8 407.7 2763.0 404.0 C2784.2 400.3 2786.2 420.2 2798.0 426.0 C2809.8 431.8 2817.2 441.2 2834.0 439.0 C2850.8 436.8 2878.0 418.0 2899.0 413.0 C2920.0 408.0 2931.3 411.0 2960.0 409.0 C2988.7 407.0 3046.3 408.3 3071.0 401.0 C3095.7 393.7 3095.7 371.0 3108.0 365.0 C3120.3 359.0 3137.0 361.3 3145.0 365.0 C3153.0 368.7 3146.2 384.0 3156.0 387.0 C3165.8 390.0 3193.5 380.0 3204.0 383.0 C3214.5 386.0 3209.7 402.0 3219.0 405.0 C3228.3 408.0 3246.5 402.2 3260.0 401.0 C3273.5 399.8 3293.3 398.5 3300.0 398.0" fill="none" stroke="#ffffff" stroke-width="7" stroke-linecap="round" stroke-linejoin="round"/>
<path d="M2834.0 439.0 C2836.2 450.8 2841.2 486.5 2847.0 510.0 C2852.8 533.5 2860.3 561.0 2869.0 580.0 C2877.7 599.0 2889.5 606.5 2899.0 624.0 C2908.5 641.5 2919.3 663.8 2926.0 685.0 C2932.7 706.2 2936.2 724.8 2939.0 751.0 C2941.8 777.2 2941.2 817.2 2943.0 842.0 C2944.8 866.8 2948.8 890.3 2950.0 900.0" fill="none" stroke="#ffffff" stroke-width="7" stroke-linecap="round" stroke-linejoin="round"/>
<path d="M2460.0 712.0 C2482.0 709.8 2555.3 706.3 2592.0 699.0 C2628.7 691.7 2650.7 677.7 2680.0 668.0 C2709.3 658.3 2743.8 652.8 2768.0 641.0 C2792.2 629.2 2806.8 607.2 2825.0 597.0 C2843.2 586.8 2859.5 584.3 2877.0 580.0 C2894.5 575.7 2897.8 574.7 2930.0 571.0 C2962.2 567.3 3035.7 554.3 3070.0 558.0 C3104.3 561.7 3114.0 589.3 3136.0 593.0 C3158.0 596.7 3173.5 585.2 3202.0 580.0 C3230.5 574.8 3270.3 570.8 3307.0 562.0 C3343.7 553.2 3385.3 534.3 3422.0 527.0 C3458.7 519.7 3483.7 519.5 3527.0 518.0 C3570.3 516.5 3656.2 518.0 3682.0 518.0" fill="none" stroke="#ffffff" stroke-width="7" stroke-linecap="round" stroke-linejoin="round"/>
<path d="M3457.0 422.0 C3453.3 444.0 3442.3 510.0 3435.0 554.0 C3427.7 598.0 3418.2 638.0 3413.0 686.0 C3407.8 734.0 3405.5 816.0 3404.0 842.0" fill="none" stroke="#ffffff" stroke-width="7" stroke-linecap="round" stroke-linejoin="round"/>
<path d="M3554.0 387.0 C3550.3 414.8 3540.2 504.2 3532.0 554.0 C3523.8 603.8 3512.3 638.0 3505.0 686.0 C3497.7 734.0 3492.2 798.0 3488.0 842.0 C3483.8 886.0 3481.3 932.0 3480.0 950.0" fill="none" stroke="#ffffff" stroke-width="7" stroke-linecap="round" stroke-linejoin="round"/>
<path d="M3096.0 730.0 C3121.0 730.0 3191.7 731.5 3246.0 730.0 C3300.3 728.5 3349.3 726.2 3422.0 721.0 C3494.7 715.8 3638.7 702.7 3682.0 699.0" fill="none" stroke="#ffffff" stroke-width="7" stroke-linecap="round" stroke-linejoin="round"/>
<path d="M2460.0 1018.0 C2478.3 1016.5 2533.3 1016.3 2570.0 1009.0 C2606.7 1001.7 2632.3 985.7 2680.0 974.0 C2727.7 962.3 2791.0 942.7 2856.0 939.0 C2921.0 935.3 3016.0 952.0 3070.0 952.0 C3124.0 952.0 3141.8 944.2 3180.0 939.0 C3218.2 933.8 3272.3 925.0 3299.0 921.0 C3325.7 917.0 3333.2 916.0 3340.0 915.0" fill="none" stroke="#ffffff" stroke-width="7" stroke-linecap="round" stroke-linejoin="round"/>
<path d="M2460.0 1141.0 C2482.0 1135.2 2548.0 1117.0 2592.0 1106.0 C2636.0 1095.0 2680.0 1084.7 2724.0 1075.0 C2768.0 1065.3 2823.2 1056.0 2856.0 1048.0 C2888.8 1040.0 2885.3 1033.5 2921.0 1027.0 C2956.7 1020.5 3045.2 1012.0 3070.0 1009.0" fill="none" stroke="#ffffff" stroke-width="7" stroke-linecap="round" stroke-linejoin="round"/>
<path d="M2460.0 1308.0 C2482.0 1306.5 2548.0 1302.7 2592.0 1299.0 C2636.0 1295.3 2680.0 1289.7 2724.0 1286.0 C2768.0 1282.3 2819.5 1280.0 2856.0 1277.0 C2892.5 1274.0 2907.3 1270.2 2943.0 1268.0 C2978.7 1265.8 3048.8 1264.7 3070.0 1264.0" fill="none" stroke="#ffffff" stroke-width="7" stroke-linecap="round" stroke-linejoin="round"/>
<path d="M2460.0 1495.0 C2476.8 1497.2 2507.7 1502.8 2561.0 1508.0 C2614.3 1513.2 2720.0 1524.5 2780.0 1526.0 C2840.0 1527.5 2872.7 1520.0 2921.0 1517.0 C2969.3 1514.0 3030.5 1506.5 3070.0 1508.0 C3109.5 1509.5 3128.7 1497.3 3158.0 1526.0 C3187.3 1554.7 3213.2 1646.3 3246.0 1680.0 C3278.8 1713.7 3296.5 1717.2 3355.0 1728.0 C3413.5 1738.8 3542.5 1742.8 3597.0 1745.0 C3651.5 1747.2 3667.8 1741.7 3682.0 1741.0" fill="none" stroke="#ffffff" stroke-width="7" stroke-linecap="round" stroke-linejoin="round"/>
<path d="M3355.0 1482.0 C3354.3 1536.8 3357.5 1704.5 3351.0 1811.0 C3344.5 1917.5 3321.8 2069.3 3316.0 2121.0" fill="none" stroke="#ffffff" stroke-width="7" stroke-linecap="round" stroke-linejoin="round"/>
<path d="M2767.0 1798.0 C2781.7 1778.2 2821.3 1710.5 2855.0 1679.0 C2888.7 1647.5 2933.2 1622.8 2969.0 1609.0 C3004.8 1595.2 3053.2 1598.2 3070.0 1596.0" fill="none" stroke="#ffffff" stroke-width="7" stroke-linecap="round" stroke-linejoin="round"/>
<path d="M3100.0 1323.0 C3115.0 1309.2 3162.5 1265.2 3190.0 1240.0 C3217.5 1214.8 3236.5 1198.2 3265.0 1172.0 C3293.5 1145.8 3331.3 1100.2 3361.0 1083.0 C3390.7 1065.8 3417.8 1074.7 3443.0 1069.0 C3468.2 1063.3 3472.2 1058.2 3512.0 1049.0 C3551.8 1039.8 3653.7 1019.8 3682.0 1014.0" fill="none" stroke="#ffffff" stroke-width="7" stroke-linecap="round" stroke-linejoin="round"/>
<path d="M3356.0 1000.0 C3356.7 1039.7 3360.8 1157.7 3360.0 1238.0 C3359.2 1318.3 3352.5 1441.3 3351.0 1482.0" fill="none" stroke="#ffffff" stroke-width="7" stroke-linecap="round" stroke-linejoin="round"/>
<path d="M3070.0 1141.0 C3097.8 1137.0 3200.0 1118.7 3237.0 1117.0 C3274.0 1115.3 3282.8 1128.7 3292.0 1131.0" fill="none" stroke="#ffffff" stroke-width="7" stroke-linecap="round" stroke-linejoin="round"/>
<path d="M3070.0 2121.0 L3140.0 2009.0" fill="none" stroke="#ffffff" stroke-width="7" stroke-linecap="round" stroke-linejoin="round"/>
<path d="M3410.0 202.0 C3404.7 216.7 3390.7 256.3 3378.0 290.0 C3365.3 323.7 3344.7 377.7 3334.0 404.0 C3323.3 430.3 3318.8 434.0 3314.0 448.0 C3309.2 462.0 3305.7 471.8 3305.0 488.0 C3304.3 504.2 3307.3 528.8 3310.0 545.0 C3312.7 561.2 3315.5 574.0 3321.0 585.0 C3326.5 596.0 3334.3 600.8 3343.0 611.0 C3351.7 621.2 3369.8 633.5 3373.0 646.0 C3376.2 658.5 3362.0 669.8 3362.0 686.0 C3362.0 702.2 3367.5 724.7 3373.0 743.0 C3378.5 761.3 3387.7 779.5 3395.0 796.0 C3402.3 812.5 3414.0 829.7 3417.0 842.0 C3420.0 854.3 3413.7 865.3 3413.0 870.0" fill="none" stroke="#efc460" stroke-width="12" stroke-linecap="round" stroke-linejoin="round"/>
<path d="M2460.0 813.0 C2473.2 808.7 2514.2 796.2 2539.0 787.0 C2563.8 777.8 2568.0 763.5 2609.0 758.0 C2650.0 752.5 2736.7 754.3 2785.0 754.0 C2833.3 753.7 2865.3 758.7 2899.0 756.0 C2932.7 753.3 2954.2 742.7 2987.0 738.0 C3019.8 733.3 3077.8 729.7 3096.0 728.0" fill="none" stroke="#efc460" stroke-width="12" stroke-linecap="round" stroke-linejoin="round"/>
<path d="M2460.0 1229.0 C2474.7 1229.7 2515.0 1228.7 2548.0 1233.0 C2581.0 1237.3 2621.3 1251.0 2658.0 1255.0 C2694.7 1259.0 2727.8 1261.3 2768.0 1257.0 C2808.2 1252.7 2866.2 1235.5 2899.0 1229.0 C2931.8 1222.5 2936.5 1219.8 2965.0 1218.0 C2993.5 1216.2 3030.5 1217.7 3070.0 1218.0 C3109.5 1218.3 3158.0 1221.2 3202.0 1220.0 C3246.0 1218.8 3291.5 1214.3 3334.0 1211.0 C3376.5 1207.7 3420.3 1204.3 3457.0 1200.0 C3493.7 1195.7 3516.5 1194.2 3554.0 1185.0 C3591.5 1175.8 3660.7 1151.7 3682.0 1145.0" fill="none" stroke="#efc460" stroke-width="12" stroke-linecap="round" stroke-linejoin="round"/>
<path d="M2470.0 842.0 C2476.3 842.0 2496.5 831.0 2508.0 842.0 C2519.5 853.0 2532.7 886.0 2539.0 908.0 C2545.3 930.0 2548.2 948.3 2546.0 974.0 C2543.8 999.7 2533.7 1032.7 2526.0 1062.0 C2518.3 1091.3 2505.8 1124.3 2500.0 1150.0 C2494.2 1175.7 2491.0 1190.5 2491.0 1216.0 C2491.0 1241.5 2493.5 1273.8 2500.0 1303.0 C2506.5 1332.2 2519.8 1361.2 2530.0 1391.0 C2540.2 1420.8 2555.2 1452.2 2561.0 1482.0 C2566.8 1511.8 2559.8 1547.3 2565.0 1570.0 C2570.2 1592.7 2573.0 1591.7 2592.0 1618.0 C2611.0 1644.3 2649.8 1695.2 2679.0 1728.0 C2708.2 1760.8 2739.2 1790.2 2767.0 1815.0 C2794.8 1839.8 2824.0 1855.0 2846.0 1877.0 C2868.0 1899.0 2885.8 1925.0 2899.0 1947.0 C2912.2 1969.0 2915.5 1980.0 2925.0 2009.0 C2934.5 2038.0 2950.8 2102.3 2956.0 2121.0" fill="none" stroke="#efc460" stroke-width="12" stroke-linecap="round" stroke-linejoin="round"/>
<path d="M2460.0 1934.0 C2482.0 1932.5 2555.5 1930.8 2592.0 1925.0 C2628.5 1919.2 2649.8 1909.2 2679.0 1899.0 C2708.2 1888.8 2739.2 1871.3 2767.0 1864.0 C2794.8 1856.7 2832.8 1856.5 2846.0 1855.0" fill="none" stroke="#efc460" stroke-width="12" stroke-linecap="round" stroke-linejoin="round"/>
<path d="M3457.0 1207.0 C3456.2 1219.5 3454.2 1251.2 3452.0 1282.0 C3449.8 1312.8 3441.7 1362.8 3444.0 1392.0 C3446.3 1421.2 3455.2 1442.0 3466.0 1457.0 C3476.8 1472.0 3489.3 1465.3 3509.0 1482.0 C3528.7 1498.7 3569.3 1535.0 3584.0 1557.0 C3598.7 1579.0 3594.2 1590.0 3597.0 1614.0 C3599.8 1638.0 3599.5 1671.8 3601.0 1701.0 C3602.5 1730.2 3602.3 1759.7 3606.0 1789.0 C3609.7 1818.3 3618.7 1851.3 3623.0 1877.0 C3627.3 1902.7 3629.2 1902.3 3632.0 1943.0 C3634.8 1983.7 3638.7 2091.3 3640.0 2121.0" fill="none" stroke="#efc460" stroke-width="12" stroke-linecap="round" stroke-linejoin="round"/>
<path d="M3307.0 882.0 C3311.5 878.3 3316.3 866.0 3334.0 860.0 C3351.7 854.0 3386.7 845.3 3413.0 846.0 C3439.3 846.7 3475.8 856.7 3492.0 864.0 C3508.2 871.3 3507.5 873.2 3510.0 890.0 C3512.5 906.8 3514.3 947.7 3507.0 965.0 C3499.7 982.3 3486.0 989.2 3466.0 994.0 C3446.0 998.8 3412.0 1004.0 3387.0 994.0 C3362.0 984.0 3330.0 950.5 3316.0 934.0 C3302.0 917.5 3304.5 903.7 3303.0 895.0 C3301.5 886.3 3306.3 884.2 3307.0 882.0" fill="none" stroke="#efc460" stroke-width="12" stroke-linecap="round" stroke-linejoin="round"/>
<path d="M3410.0 202.0 C3404.7 216.7 3390.7 256.3 3378.0 290.0 C3365.3 323.7 3344.7 377.7 3334.0 404.0 C3323.3 430.3 3318.8 434.0 3314.0 448.0 C3309.2 462.0 3305.7 471.8 3305.0 488.0 C3304.3 504.2 3307.3 528.8 3310.0 545.0 C3312.7 561.2 3315.5 574.0 3321.0 585.0 C3326.5 596.0 3334.3 600.8 3343.0 611.0 C3351.7 621.2 3369.8 633.5 3373.0 646.0 C3376.2 658.5 3362.0 669.8 3362.0 686.0 C3362.0 702.2 3367.5 724.7 3373.0 743.0 C3378.5 761.3 3387.7 779.5 3395.0 796.0 C3402.3 812.5 3414.0 829.7 3417.0 842.0 C3420.0 854.3 3413.7 865.3 3413.0 870.0" fill="none" stroke="#fbd97c" stroke-width="8.5" stroke-linecap="round" stroke-linejoin="round"/>
<path d="M2460.0 813.0 C2473.2 808.7 2514.2 796.2 2539.0 787.0 C2563.8 777.8 2568.0 763.5 2609.0 758.0 C2650.0 752.5 2736.7 754.3 2785.0 754.0 C2833.3 753.7 2865.3 758.7 2899.0 756.0 C2932.7 753.3 2954.2 742.7 2987.0 738.0 C3019.8 733.3 3077.8 729.7 3096.0 728.0" fill="none" stroke="#fbd97c" stroke-width="8.5" stroke-linecap="round" stroke-linejoin="round"/>
<path d="M2460.0 1229.0 C2474.7 1229.7 2515.0 1228.7 2548.0 1233.0 C2581.0 1237.3 2621.3 1251.0 2658.0 1255.0 C2694.7 1259.0 2727.8 1261.3 2768.0 1257.0 C2808.2 1252.7 2866.2 1235.5 2899.0 1229.0 C2931.8 1222.5 2936.5 1219.8 2965.0 1218.0 C2993.5 1216.2 3030.5 1217.7 3070.0 1218.0 C3109.5 1218.3 3158.0 1221.2 3202.0 1220.0 C3246.0 1218.8 3291.5 1214.3 3334.0 1211.0 C3376.5 1207.7 3420.3 1204.3 3457.0 1200.0 C3493.7 1195.7 3516.5 1194.2 3554.0 1185.0 C3591.5 1175.8 3660.7 1151.7 3682.0 1145.0" fill="none" stroke="#fbd97c" stroke-width="8.5" stroke-linecap="round" stroke-linejoin="round"/>
<path d="M2470.0 842.0 C2476.3 842.0 2496.5 831.0 2508.0 842.0 C2519.5 853.0 2532.7 886.0 2539.0 908.0 C2545.3 930.0 2548.2 948.3 2546.0 974.0 C2543.8 999.7 2533.7 1032.7 2526.0 1062.0 C2518.3 1091.3 2505.8 1124.3 2500.0 1150.0 C2494.2 1175.7 2491.0 1190.5 2491.0 1216.0 C2491.0 1241.5 2493.5 1273.8 2500.0 1303.0 C2506.5 1332.2 2519.8 1361.2 2530.0 1391.0 C2540.2 1420.8 2555.2 1452.2 2561.0 1482.0 C2566.8 1511.8 2559.8 1547.3 2565.0 1570.0 C2570.2 1592.7 2573.0 1591.7 2592.0 1618.0 C2611.0 1644.3 2649.8 1695.2 2679.0 1728.0 C2708.2 1760.8 2739.2 1790.2 2767.0 1815.0 C2794.8 1839.8 2824.0 1855.0 2846.0 1877.0 C2868.0 1899.0 2885.8 1925.0 2899.0 1947.0 C2912.2 1969.0 2915.5 1980.0 2925.0 2009.0 C2934.5 2038.0 2950.8 2102.3 2956.0 2121.0" fill="none" stroke="#fbd97c" stroke-width="8.5" stroke-linecap="round" stroke-linejoin="round"/>
<path d="M2460.0 1934.0 C2482.0 1932.5 2555.5 1930.8 2592.0 1925.0 C2628.5 1919.2 2649.8 1909.2 2679.0 1899.0 C2708.2 1888.8 2739.2 1871.3 2767.0 1864.0 C2794.8 1856.7 2832.8 1856.5 2846.0 1855.0" fill="none" stroke="#fbd97c" stroke-width="8.5" stroke-linecap="round" stroke-linejoin="round"/>
<path d="M3457.0 1207.0 C3456.2 1219.5 3454.2 1251.2 3452.0 1282.0 C3449.8 1312.8 3441.7 1362.8 3444.0 1392.0 C3446.3 1421.2 3455.2 1442.0 3466.0 1457.0 C3476.8 1472.0 3489.3 1465.3 3509.0 1482.0 C3528.7 1498.7 3569.3 1535.0 3584.0 1557.0 C3598.7 1579.0 3594.2 1590.0 3597.0 1614.0 C3599.8 1638.0 3599.5 1671.8 3601.0 1701.0 C3602.5 1730.2 3602.3 1759.7 3606.0 1789.0 C3609.7 1818.3 3618.7 1851.3 3623.0 1877.0 C3627.3 1902.7 3629.2 1902.3 3632.0 1943.0 C3634.8 1983.7 3638.7 2091.3 3640.0 2121.0" fill="none" stroke="#fbd97c" stroke-width="8.5" stroke-linecap="round" stroke-linejoin="round"/>
<path d="M3307.0 882.0 C3311.5 878.3 3316.3 866.0 3334.0 860.0 C3351.7 854.0 3386.7 845.3 3413.0 846.0 C3439.3 846.7 3475.8 856.7 3492.0 864.0 C3508.2 871.3 3507.5 873.2 3510.0 890.0 C3512.5 906.8 3514.3 947.7 3507.0 965.0 C3499.7 982.3 3486.0 989.2 3466.0 994.0 C3446.0 998.8 3412.0 1004.0 3387.0 994.0 C3362.0 984.0 3330.0 950.5 3316.0 934.0 C3302.0 917.5 3304.5 903.7 3303.0 895.0 C3301.5 886.3 3306.3 884.2 3307.0 882.0" fill="none" stroke="#fbd97c" stroke-width="8.5" stroke-linecap="round" stroke-linejoin="round"/>
<path d="M2704 1367 L2704 1376 L2682 1376 L2682 1279 L2707 1279 L2722 1269 L2776 1257 L2899 1233 L2965 1220 L3070 1222 L3184 1229 L3334 1211 L3457 1202 L3471 1201 Q3478 1202 3477 1209 Q3476 1216 3469 1216 L3463 1216 Q3457 1215 3457 1208 L3457 1202" fill="none" stroke="#686dae" stroke-width="5" stroke-linejoin="round"/>
<path d="M3457.0 1202.0 C3455.2 1197.0 3449.0 1187.3 3446.0 1172.0 C3443.0 1156.7 3437.2 1126.2 3439.0 1110.0 C3440.8 1093.8 3454.8 1088.8 3457.0 1075.0 C3459.2 1061.2 3452.0 1040.5 3452.0 1027.0 C3452.0 1013.5 3458.3 1000.0 3457.0 994.0 C3455.7 988.0 3446.2 991.5 3444.0 991.0" fill="none" stroke="#686dae" stroke-width="5" stroke-linejoin="round"/>
<rect x="3311" y="416" width="32" height="23" fill="#f6d44a" stroke="#d9b21e" stroke-width="1.5"/>
<text x="3327.0" y="434" font-family="Liberation Sans" font-size="17" font-weight="700" fill="#333" text-anchor="middle">54</text>
<rect x="3321" y="598" width="33" height="24" fill="#f6d44a" stroke="#d9b21e" stroke-width="1.5"/>
<text x="3337.5" y="617" font-family="Liberation Sans" font-size="17" font-weight="700" fill="#333" text-anchor="middle">54</text>
<rect x="3481" y="954" width="31" height="20" fill="#f6d44a" stroke="#d9b21e" stroke-width="1.5"/>
<text x="3496.5" y="969" font-family="Liberation Sans" font-size="17" font-weight="700" fill="#333" text-anchor="middle">54</text>
<rect x="3428" y="1337" width="33" height="22" fill="#f6d44a" stroke="#d9b21e" stroke-width="1.5"/>
<text x="3444.5" y="1354" font-family="Liberation Sans" font-size="17" font-weight="700" fill="#333" text-anchor="middle">54</text>
<rect x="3270" y="1207" width="24" height="22" fill="#f6d44a" stroke="#d9b21e" stroke-width="1.5"/>
<text x="3282.0" y="1224" font-family="Liberation Sans" font-size="17" font-weight="700" fill="#333" text-anchor="middle">1</text>
<path d="M2464 807 L2492 807 L2496 817.0 L2492 827 L2464 827 L2460 817.0 Z" fill="#3a6cc1" stroke="#fff" stroke-width="1.5"/>
<text x="2478.0" y="822.5" font-family="Liberation Sans" font-size="16" font-weight="700" fill="#fff" text-anchor="middle">45</text>
<path d="M2477 1176 L2505 1176 L2509 1186.0 L2505 1196 L2477 1196 L2473 1186.0 Z" fill="#3a6cc1" stroke="#fff" stroke-width="1.5"/>
<text x="2491.0" y="1191.5" font-family="Liberation Sans" font-size="16" font-weight="700" fill="#fff" text-anchor="middle">45</text>
<path d="M2613 1240 L2645 1240 L2649 1251.0 L2645 1262 L2613 1262 L2609 1251.0 Z" fill="#3a6cc1" stroke="#fff" stroke-width="1.5"/>
<text x="2629.0" y="1257.5" font-family="Liberation Sans" font-size="16" font-weight="700" fill="#fff" text-anchor="middle">40</text>
<path d="M2950 1209 L2979 1209 L2983 1219.0 L2979 1229 L2950 1229 L2946 1219.0 Z" fill="#3a6cc1" stroke="#fff" stroke-width="1.5"/>
<text x="2964.5" y="1224.5" font-family="Liberation Sans" font-size="16" font-weight="700" fill="#fff" text-anchor="middle">40</text>
<path d="M2767 1820 L2798 1820 L2802 1832.0 L2798 1844 L2767 1844 L2763 1832.0 Z" fill="#3a6cc1" stroke="#fff" stroke-width="1.5"/>
<text x="2782.5" y="1839.5" font-family="Liberation Sans" font-size="16" font-weight="700" fill="#fff" text-anchor="middle">45</text>
<path d="M2679 1881 L2719 1881 L2723 1893.0 L2719 1905 L2679 1905 L2675 1893.0 Z" fill="#3a6cc1" stroke="#fff" stroke-width="1.5"/>
<text x="2699.0" y="1900.5" font-family="Liberation Sans" font-size="16" font-weight="700" fill="#fff" text-anchor="middle">448</text>
<text x="3112" y="248" font-family="Liberation Sans" font-size="22.6" font-weight="700" fill="#646d78" textLength="171" lengthAdjust="spacing" stroke="#f6f6f6" stroke-width="3.5" stroke-opacity="0.75" stroke-linejoin="round" paint-order="stroke">LINDENHORST</text>
<text x="2902" y="323" font-family="Liberation Sans" font-size="22.6" font-weight="700" fill="#646d78" textLength="94" lengthAdjust="spacing" stroke="#f6f6f6" stroke-width="3.5" stroke-opacity="0.75" stroke-linejoin="round" paint-order="stroke">DEUSEN</text>
<text x="2554" y="635" font-family="Liberation Sans" font-size="22.6" font-weight="700" fill="#646d78" textLength="132" lengthAdjust="spacing" stroke="#f6f6f6" stroke-width="3.5" stroke-opacity="0.75" stroke-linejoin="round" paint-order="stroke">HUCKARDE</text>
<text x="2612" y="767" font-family="Liberation Sans" font-size="22.6" font-weight="700" fill="#646d78" textLength="171" lengthAdjust="spacing" stroke="#f6f6f6" stroke-width="3.5" stroke-opacity="0.75" stroke-linejoin="round" paint-order="stroke">WISCHLINGEN</text>
<text x="3277" y="714" font-family="Liberation Sans" font-size="22.6" font-weight="700" fill="#646d78" textLength="237" lengthAdjust="spacing" stroke="#f6f6f6" stroke-width="3.5" stroke-opacity="0.75" stroke-linejoin="round" paint-order="stroke">INNENSTADT-NORD</text>
<text x="2902" y="1074" font-family="Liberation Sans" font-size="22.6" font-weight="700" fill="#646d78" textLength="238" lengthAdjust="spacing" stroke="#f6f6f6" stroke-width="3.5" stroke-opacity="0.75" stroke-linejoin="round" paint-order="stroke">INNENSTADT-WEST</text>
<text x="2828" y="1110" font-family="Liberation Sans" font-size="22.6" font-weight="700" fill="#646d78" textLength="140" lengthAdjust="spacing" stroke="#f6f6f6" stroke-width="3.5" stroke-opacity="0.75" stroke-linejoin="round" paint-order="stroke">DORSTFELD</text>
<text x="3049" y="1107" font-family="Liberation Sans" font-size="22.6" font-weight="700" fill="#646d78" textLength="128" lengthAdjust="spacing" stroke="#f6f6f6" stroke-width="3.5" stroke-opacity="0.75" stroke-linejoin="round" paint-order="stroke">TREMONIA</text>
<text x="3533" y="1134" font-family="Liberation Sans" font-size="22.6" font-weight="700" fill="#646d78" textLength="160" lengthAdjust="spacing" stroke="#f6f6f6" stroke-width="3.5" stroke-opacity="0.75" stroke-linejoin="round" paint-order="stroke">INNENSTADT</text>
<text x="3134" y="1268" font-family="Liberation Sans" font-size="22.6" font-weight="700" fill="#646d78" textLength="224" lengthAdjust="spacing" stroke="#f6f6f6" stroke-width="3.5" stroke-opacity="0.75" stroke-linejoin="round" paint-order="stroke">WESTFALENHALLE</text>
<text x="2753" y="1371" font-family="Liberation Sans" font-size="22.6" font-weight="700" fill="#646d78" textLength="83" lengthAdjust="spacing" stroke="#f6f6f6" stroke-width="3.5" stroke-opacity="0.75" stroke-linejoin="round" paint-order="stroke">BAROP</text>
<text x="2462" y="1361" font-family="Liberation Sans" font-size="22.6" font-weight="700" fill="#646d78" textLength="44" lengthAdjust="spacing" stroke="#f6f6f6" stroke-width="3.5" stroke-opacity="0.75" stroke-linejoin="round" paint-order="stroke">PEL</text>
<text x="2460" y="1062" font-family="Liberation Sans" font-size="22.6" font-weight="700" fill="#646d78" textLength="34" lengthAdjust="spacing" stroke="#f6f6f6" stroke-width="3.5" stroke-opacity="0.75" stroke-linejoin="round" paint-order="stroke">EN</text>
<text x="3521" y="1452" font-family="Liberation Sans" font-size="22.6" font-weight="700" fill="#646d78" textLength="170" lengthAdjust="spacing" stroke="#f6f6f6" stroke-width="3.5" stroke-opacity="0.75" stroke-linejoin="round" paint-order="stroke">PHÖNIX-WEST</text>
<text x="3360" y="1561" font-family="Liberation Sans" font-size="22.6" font-weight="700" fill="#646d78" textLength="186" lengthAdjust="spacing" stroke="#f6f6f6" stroke-width="3.5" stroke-opacity="0.75" stroke-linejoin="round" paint-order="stroke">ROMBERGPARK</text>
<text x="2640" y="1587" font-family="Liberation Sans" font-size="22.6" font-weight="700" fill="#646d78" textLength="197" lengthAdjust="spacing" stroke="#f6f6f6" stroke-width="3.5" stroke-opacity="0.75" stroke-linejoin="round" paint-order="stroke">EICHLINGHOFEN</text>
<text x="3619" y="1761" font-family="Liberation Sans" font-size="22.6" font-weight="700" fill="#646d78" textLength="70" lengthAdjust="spacing" stroke="#f6f6f6" stroke-width="3.5" stroke-opacity="0.75" stroke-linejoin="round" paint-order="stroke">WELL</text>
<text x="3012" y="1607" font-family="Liberation Sans" font-size="32" font-weight="700" fill="#646d78" textLength="197" lengthAdjust="spacing" stroke="#f6f6f6" stroke-width="3.5" stroke-opacity="0.75" stroke-linejoin="round" paint-order="stroke">HOMBRUCH</text>
<text x="3314" y="941" font-family="Liberation Sans" font-size="41" fill="#4e5660" textLength="213" lengthAdjust="spacing" stroke="#4e5660" stroke-width="1.2">Dortmund</text>
<text x="3020" y="458" font-family="Liberation Sans" font-size="26" font-weight="400" fill="#3c8f4a" textLength="196" lengthAdjust="spacingAndGlyphs" stroke="#fff" stroke-width="3" stroke-opacity="0.6" stroke-linejoin="round">Fredenbaumpark</text>
<text x="3020" y="458" font-family="Liberation Sans" font-size="26" font-weight="400" fill="#3c8f4a" textLength="196" lengthAdjust="spacingAndGlyphs" stroke="#3c8f4a" stroke-width="0.4">Fredenbaumpark</text>
<text x="2666" y="819" font-family="Liberation Sans" font-size="26" font-weight="400" fill="#3c8f4a" textLength="140" lengthAdjust="spacingAndGlyphs" stroke="#fff" stroke-width="3" stroke-opacity="0.6" stroke-linejoin="round">Revierpark</text>
<text x="2666" y="819" font-family="Liberation Sans" font-size="26" font-weight="400" fill="#3c8f4a" textLength="140" lengthAdjust="spacingAndGlyphs" stroke="#3c8f4a" stroke-width="0.4">Revierpark</text>
<text x="2660" y="845" font-family="Liberation Sans" font-size="26" font-weight="400" fill="#3c8f4a" textLength="146" lengthAdjust="spacingAndGlyphs" stroke="#fff" stroke-width="3" stroke-opacity="0.6" stroke-linejoin="round">Wischlingen</text>
<text x="2660" y="845" font-family="Liberation Sans" font-size="26" font-weight="400" fill="#3c8f4a" textLength="146" lengthAdjust="spacingAndGlyphs" stroke="#3c8f4a" stroke-width="0.4">Wischlingen</text>
<text x="3477" y="1273" font-family="Liberation Sans" font-size="26" font-weight="400" fill="#3c8f4a" textLength="165" lengthAdjust="spacingAndGlyphs" stroke="#fff" stroke-width="3" stroke-opacity="0.6" stroke-linejoin="round">Westfalenpark</text>
<text x="3477" y="1273" font-family="Liberation Sans" font-size="26" font-weight="400" fill="#3c8f4a" textLength="165" lengthAdjust="spacingAndGlyphs" stroke="#3c8f4a" stroke-width="0.4">Westfalenpark</text>
<text x="3495" y="1297" font-family="Liberation Sans" font-size="26" font-weight="400" fill="#3c8f4a" textLength="115" lengthAdjust="spacingAndGlyphs" stroke="#fff" stroke-width="3" stroke-opacity="0.6" stroke-linejoin="round">Dortmund</text>
<text x="3495" y="1297" font-family="Liberation Sans" font-size="26" font-weight="400" fill="#3c8f4a" textLength="115" lengthAdjust="spacingAndGlyphs" stroke="#3c8f4a" stroke-width="0.4">Dortmund</text>
<text x="3243" y="1655" font-family="Liberation Sans" font-size="26" font-weight="400" fill="#3c8f4a" textLength="189" lengthAdjust="spacingAndGlyphs" stroke="#fff" stroke-width="3" stroke-opacity="0.6" stroke-linejoin="round">Dortmunder Zoo</text>
<text x="3243" y="1655" font-family="Liberation Sans" font-size="26" font-weight="400" fill="#3c8f4a" textLength="189" lengthAdjust="spacingAndGlyphs" stroke="#3c8f4a" stroke-width="0.4">Dortmunder Zoo</text>
<text x="3136" y="843" font-family="Liberation Sans" font-size="26" font-weight="400" fill="#3a9aa0" textLength="118" lengthAdjust="spacingAndGlyphs" stroke="#fff" stroke-width="3" stroke-opacity="0.6" stroke-linejoin="round">Deutsches</text>
<text x="3136" y="843" font-family="Liberation Sans" font-size="26" font-weight="400" fill="#3a9aa0" textLength="118" lengthAdjust="spacingAndGlyphs" stroke="#3a9aa0" stroke-width="0.4">Deutsches</text>
<text x="3131" y="868" font-family="Liberation Sans" font-size="26" font-weight="400" fill="#3a9aa0" textLength="185" lengthAdjust="spacingAndGlyphs" stroke="#fff" stroke-width="3" stroke-opacity="0.6" stroke-linejoin="round">Fußballmuseum</text>
<text x="3131" y="868" font-family="Liberation Sans" font-size="26" font-weight="400" fill="#3a9aa0" textLength="185" lengthAdjust="spacingAndGlyphs" stroke="#3a9aa0" stroke-width="0.4">Fußballmuseum</text>
<text x="2686" y="1183" font-family="Liberation Sans" font-size="26" font-weight="400" fill="#3a9aa0" textLength="202" lengthAdjust="spacingAndGlyphs" stroke="#fff" stroke-width="3" stroke-opacity="0.6" stroke-linejoin="round">DASA Arbeitswelt</text>
<text x="2686" y="1183" font-family="Liberation Sans" font-size="26" font-weight="400" fill="#3a9aa0" textLength="202" lengthAdjust="spacingAndGlyphs" stroke="#3a9aa0" stroke-width="0.4">DASA Arbeitswelt</text>
<text x="2752" y="1207" font-family="Liberation Sans" font-size="26" font-weight="400" fill="#3a9aa0" textLength="136" lengthAdjust="spacingAndGlyphs" stroke="#fff" stroke-width="3" stroke-opacity="0.6" stroke-linejoin="round">Ausstellung</text>
<text x="2752" y="1207" font-family="Liberation Sans" font-size="26" font-weight="400" fill="#3a9aa0" textLength="136" lengthAdjust="spacingAndGlyphs" stroke="#3a9aa0" stroke-width="0.4">Ausstellung</text>
<text x="3481" y="804" font-family="Liberation Sans" font-size="26" font-weight="400" fill="#4a72b8" textLength="187" lengthAdjust="spacingAndGlyphs" stroke="#fff" stroke-width="3" stroke-opacity="0.6" stroke-linejoin="round">JP Performance</text>
<text x="3481" y="804" font-family="Liberation Sans" font-size="26" font-weight="400" fill="#4a72b8" textLength="187" lengthAdjust="spacingAndGlyphs" stroke="#4a72b8" stroke-width="0.4">JP Performance</text>
<text x="2460" y="1235" font-family="Liberation Sans" font-size="26" font-weight="400" fill="#4a72b8" textLength="187" lengthAdjust="spacingAndGlyphs" stroke="#fff" stroke-width="3" stroke-opacity="0.6" stroke-linejoin="round">k e.V. Dortmund</text>
<text x="2460" y="1235" font-family="Liberation Sans" font-size="26" font-weight="400" fill="#4a72b8" textLength="187" lengthAdjust="spacingAndGlyphs" stroke="#4a72b8" stroke-width="0.4">k e.V. Dortmund</text>
<text x="2671" y="1281" font-family="Liberation Sans" font-size="24" font-weight="400" fill="#7a8c96" textLength="130" lengthAdjust="spacingAndGlyphs" stroke="#fff" stroke-width="3" stroke-opacity="0.6" stroke-linejoin="round">Technische</text>
<text x="2671" y="1281" font-family="Liberation Sans" font-size="24" font-weight="400" fill="#7a8c96" textLength="130" lengthAdjust="spacingAndGlyphs" stroke="#7a8c96" stroke-width="0.4">Technische</text>
<text x="2669" y="1306" font-family="Liberation Sans" font-size="24" font-weight="400" fill="#7a8c96" textLength="128" lengthAdjust="spacingAndGlyphs" stroke="#fff" stroke-width="3" stroke-opacity="0.6" stroke-linejoin="round">Universität</text>
<text x="2669" y="1306" font-family="Liberation Sans" font-size="24" font-weight="400" fill="#7a8c96" textLength="128" lengthAdjust="spacingAndGlyphs" stroke="#7a8c96" stroke-width="0.4">Universität</text>
<text x="2669" y="1332" font-family="Liberation Sans" font-size="24" font-weight="400" fill="#7a8c96" textLength="114" lengthAdjust="spacingAndGlyphs" stroke="#fff" stroke-width="3" stroke-opacity="0.6" stroke-linejoin="round">Dortmund</text>
<text x="2669" y="1332" font-family="Liberation Sans" font-size="24" font-weight="400" fill="#7a8c96" textLength="114" lengthAdjust="spacingAndGlyphs" stroke="#7a8c96" stroke-width="0.4">Dortmund</text>
<text transform="translate(2701 325) rotate(58)" font-family="Liberation Sans" font-size="15" fill="#6d7075" textLength="95" lengthAdjust="spacingAndGlyphs" stroke="#fff" stroke-width="2.5" paint-order="stroke">Emscheralle</text>
<text transform="translate(2670 448) rotate(-20)" font-family="Liberation Sans" font-size="15" fill="#6d7075" textLength="90" lengthAdjust="spacingAndGlyphs" stroke="#fff" stroke-width="2.5" paint-order="stroke">Buschstraße</text>
<text transform="translate(2584 490) rotate(45)" font-family="Liberation Sans" font-size="15" fill="#6d7075" textLength="100" lengthAdjust="spacingAndGlyphs" stroke="#fff" stroke-width="2.5" paint-order="stroke">Erpinghofstraße</text>
<text transform="translate(2836 475) rotate(72)" font-family="Liberation Sans" font-size="15" fill="#6d7075" textLength="55" lengthAdjust="spacingAndGlyphs" stroke="#fff" stroke-width="2.5" paint-order="stroke">Hülshof</text>
<text transform="translate(2907 633) rotate(70)" font-family="Liberation Sans" font-size="15" fill="#6d7075" textLength="100" lengthAdjust="spacingAndGlyphs" stroke="#fff" stroke-width="2.5" paint-order="stroke">Huckarder Str.</text>
<text transform="translate(2970 615) rotate(58)" font-family="Liberation Sans" font-size="15" fill="#6d7075" textLength="100" lengthAdjust="spacingAndGlyphs" stroke="#fff" stroke-width="2.5" paint-order="stroke">Westfaliastraße</text>
<text transform="translate(2975 575) rotate(-8)" font-family="Liberation Sans" font-size="15" fill="#6d7075" textLength="95" lengthAdjust="spacingAndGlyphs" stroke="#fff" stroke-width="2.5" paint-order="stroke">Franziusstraße</text>
<text transform="translate(3250 347) rotate(70)" font-family="Liberation Sans" font-size="15" fill="#6d7075" textLength="125" lengthAdjust="spacingAndGlyphs" stroke="#fff" stroke-width="2.5" paint-order="stroke">Lindenhorster Str.</text>
<text transform="translate(3334 567) rotate(-18)" font-family="Liberation Sans" font-size="15" fill="#6d7075" textLength="78" lengthAdjust="spacingAndGlyphs" stroke="#fff" stroke-width="2.5" paint-order="stroke">Eberstraße</text>
<text transform="translate(3120 580) rotate(80)" font-family="Liberation Sans" font-size="15" fill="#6d7075" textLength="85" lengthAdjust="spacingAndGlyphs" stroke="#fff" stroke-width="2.5" paint-order="stroke">Kanalstraße</text>
<text transform="translate(3113 732) rotate(3)" font-family="Liberation Sans" font-size="15" fill="#6d7075" textLength="134" lengthAdjust="spacingAndGlyphs" stroke="#fff" stroke-width="2.5" paint-order="stroke">Mallinckrodtstraße</text>
<text transform="translate(2630 1005) rotate(-18)" font-family="Liberation Sans" font-size="15" fill="#6d7075" textLength="160" lengthAdjust="spacingAndGlyphs" stroke="#fff" stroke-width="2.5" paint-order="stroke">Heyden-Rynsch-Straße</text>
<text transform="translate(2834 1053) rotate(-12)" font-family="Liberation Sans" font-size="15" fill="#6d7075" textLength="64" lengthAdjust="spacingAndGlyphs" stroke="#fff" stroke-width="2.5" paint-order="stroke">Kortental</text>
<text transform="translate(2562 1040) rotate(64)" font-family="Liberation Sans" font-size="15" fill="#6d7075" textLength="127" lengthAdjust="spacingAndGlyphs" stroke="#fff" stroke-width="2.5" paint-order="stroke">Planetenfeldstraße</text>
<text transform="translate(3180 945) rotate(-10)" font-family="Liberation Sans" font-size="15" fill="#6d7075" textLength="108" lengthAdjust="spacingAndGlyphs" stroke="#fff" stroke-width="2.5" paint-order="stroke">Rheinische Str.</text>
<text transform="translate(3360 1060) rotate(-65)" font-family="Liberation Sans" font-size="15" fill="#6d7075" textLength="66" lengthAdjust="spacingAndGlyphs" stroke="#fff" stroke-width="2.5" paint-order="stroke">Hohe Str.</text>
<text transform="translate(3520 960) rotate(85)" font-family="Liberation Sans" font-size="15" fill="#6d7075" textLength="88" lengthAdjust="spacingAndGlyphs" stroke="#fff" stroke-width="2.5" paint-order="stroke">Heiliger Weg</text>
<text transform="translate(2485 1000) rotate(15)" font-family="Liberation Sans" font-size="15" fill="#6d7075" textLength="52" lengthAdjust="spacingAndGlyphs" stroke="#fff" stroke-width="2.5" paint-order="stroke">ner Str.</text>
<text transform="translate(2930 1521) rotate(-4)" font-family="Liberation Sans" font-size="15" fill="#6d7075" textLength="102" lengthAdjust="spacingAndGlyphs" stroke="#fff" stroke-width="2.5" paint-order="stroke">Stockumer Str.</text>
<text transform="translate(2590 1768) rotate(-72)" font-family="Liberation Sans" font-size="15" fill="#6d7075" textLength="80" lengthAdjust="spacingAndGlyphs" stroke="#fff" stroke-width="2.5" paint-order="stroke">Baroper Str.</text>
<text transform="translate(2777 1790) rotate(-58)" font-family="Liberation Sans" font-size="15" fill="#6d7075" textLength="130" lengthAdjust="spacingAndGlyphs" stroke="#fff" stroke-width="2.5" paint-order="stroke">Menglinghauser Str.</text>
<text transform="translate(2830 1990) rotate(55)" font-family="Liberation Sans" font-size="15" fill="#6d7075" textLength="100" lengthAdjust="spacingAndGlyphs" stroke="#fff" stroke-width="2.5" paint-order="stroke">Kruckeler Str.</text>
<text transform="translate(3270 1723) rotate(60)" font-family="Liberation Sans" font-size="15" fill="#6d7075" textLength="100" lengthAdjust="spacingAndGlyphs" stroke="#fff" stroke-width="2.5" paint-order="stroke">Gotthelfstraße</text>
<text transform="translate(3388 1735) rotate(5)" font-family="Liberation Sans" font-size="15" fill="#6d7075" textLength="80" lengthAdjust="spacingAndGlyphs" stroke="#fff" stroke-width="2.5" paint-order="stroke">Zillestraße</text>
<text transform="translate(3138 1895) rotate(-88)" font-family="Liberation Sans" font-size="15" fill="#6d7075" textLength="120" lengthAdjust="spacingAndGlyphs" stroke="#fff" stroke-width="2.5" paint-order="stroke">Lötringhauser Str.</text>
<text transform="translate(3194 1965) rotate(-65)" font-family="Liberation Sans" font-size="15" fill="#6d7075" textLength="100" lengthAdjust="spacingAndGlyphs" stroke="#fff" stroke-width="2.5" paint-order="stroke">Schneiderstraße</text>
<text transform="translate(3317 1965) rotate(-86)" font-family="Liberation Sans" font-size="15" fill="#6d7075" textLength="86" lengthAdjust="spacingAndGlyphs" stroke="#fff" stroke-width="2.5" paint-order="stroke">Hagener Str.</text>
<text transform="translate(3368 1840) rotate(52)" font-family="Liberation Sans" font-size="15" fill="#6d7075" textLength="100" lengthAdjust="spacingAndGlyphs" stroke="#fff" stroke-width="2.5" paint-order="stroke">Olpketalstraße</text>
<text transform="translate(3375 2100) rotate(-45)" font-family="Liberation Sans" font-size="15" fill="#6d7075" textLength="110" lengthAdjust="spacingAndGlyphs" stroke="#fff" stroke-width="2.5" paint-order="stroke">Kirchhörder Str.</text>
<text transform="translate(3098 1402) rotate(-65)" font-family="Liberation Sans" font-size="15" fill="#6d7075" textLength="80" lengthAdjust="spacingAndGlyphs" stroke="#fff" stroke-width="2.5" paint-order="stroke">Krückenweg</text>
<text transform="translate(3080 1428) rotate(70)" font-family="Liberation Sans" font-size="15" fill="#6d7075" textLength="95" lengthAdjust="spacingAndGlyphs" stroke="#fff" stroke-width="2.5" paint-order="stroke">Am Beilstück</text>
<text transform="translate(2475 1890) rotate(25)" font-family="Liberation Sans" font-size="15" fill="#6d7075" textLength="70" lengthAdjust="spacingAndGlyphs" stroke="#fff" stroke-width="2.5" paint-order="stroke">Steinsweg</text>
<text transform="translate(3502 1490) rotate(38)" font-family="Liberation Sans" font-size="19" fill="#b0642a" textLength="150" lengthAdjust="spacingAndGlyphs" stroke="#fff" stroke-width="2" paint-order="stroke">Bundesstraße 54</text>
<circle cx="2688" cy="571" r="8" fill="#1e8a4f" stroke="#fff" stroke-width="1.5"/><text x="2688" y="576" font-family="Liberation Sans" font-size="12" font-weight="700" fill="#fff" text-anchor="middle">S</text>
<circle cx="2941" cy="994" r="8" fill="#1e8a4f" stroke="#fff" stroke-width="1.5"/><text x="2941" y="999" font-family="Liberation Sans" font-size="12" font-weight="700" fill="#fff" text-anchor="middle">S</text>
<circle cx="2508" cy="1033" r="8" fill="#1e8a4f" stroke="#fff" stroke-width="1.5"/><text x="2508" y="1038" font-family="Liberation Sans" font-size="12" font-weight="700" fill="#fff" text-anchor="middle">S</text>
<circle cx="2864" cy="1323" r="8" fill="#1e8a4f" stroke="#fff" stroke-width="1.5"/><text x="2864" y="1328" font-family="Liberation Sans" font-size="12" font-weight="700" fill="#fff" text-anchor="middle">S</text>
<circle cx="2469" cy="1396" r="8" fill="#1e8a4f" stroke="#fff" stroke-width="1.5"/><text x="2469" y="1401" font-family="Liberation Sans" font-size="12" font-weight="700" fill="#fff" text-anchor="middle">S</text>
<circle cx="3114" cy="998" r="8" fill="#1e8a4f" stroke="#fff" stroke-width="1.5"/><text x="3114" y="1003" font-family="Liberation Sans" font-size="12" font-weight="700" fill="#fff" text-anchor="middle">S</text>
<circle cx="3258" cy="1047" r="8" fill="#1e8a4f" stroke="#fff" stroke-width="1.5"/><text x="3258" y="1052" font-family="Liberation Sans" font-size="12" font-weight="700" fill="#fff" text-anchor="middle">S</text>
<circle cx="3464" cy="1029" r="8" fill="#1e8a4f" stroke="#fff" stroke-width="1.5"/><text x="3464" y="1034" font-family="Liberation Sans" font-size="12" font-weight="700" fill="#fff" text-anchor="middle">S</text>
<circle cx="2842" cy="1958" r="8" fill="#1e8a4f" stroke="#fff" stroke-width="1.5"/><text x="2842" y="1963" font-family="Liberation Sans" font-size="12" font-weight="700" fill="#fff" text-anchor="middle">S</text>
<rect x="2827" y="542" width="22" height="22" rx="3" fill="#34b4ea" stroke="#fff" stroke-width="1.5"/><rect x="2832" y="546" width="12" height="11" rx="2" fill="#fff"/><rect x="2834" y="548" width="8" height="4" fill="#34b4ea"/>
<rect x="2594" y="688" width="22" height="22" rx="3" fill="#34b4ea" stroke="#fff" stroke-width="1.5"/><rect x="2599" y="692" width="12" height="11" rx="2" fill="#fff"/><rect x="2601" y="694" width="8" height="4" fill="#34b4ea"/>
<rect x="3371" y="1580" width="22" height="22" rx="3" fill="#34b4ea" stroke="#fff" stroke-width="1.5"/><rect x="3376" y="1584" width="12" height="11" rx="2" fill="#fff"/><rect x="3378" y="1586" width="8" height="4" fill="#34b4ea"/>
<rect x="3324" y="1838" width="22" height="22" rx="3" fill="#34b4ea" stroke="#fff" stroke-width="1.5"/><rect x="3329" y="1842" width="12" height="11" rx="2" fill="#fff"/><rect x="3331" y="1844" width="8" height="4" fill="#34b4ea"/>
<rect x="3199" y="2071" width="22" height="22" rx="3" fill="#34b4ea" stroke="#fff" stroke-width="1.5"/><rect x="3204" y="2075" width="12" height="11" rx="2" fill="#fff"/><rect x="3206" y="2077" width="8" height="4" fill="#34b4ea"/>
<rect x="3315" y="1344" width="22" height="22" rx="3" fill="#34b4ea" stroke="#fff" stroke-width="1.5"/><rect x="3320" y="1348" width="12" height="11" rx="2" fill="#fff"/><rect x="3322" y="1350" width="8" height="4" fill="#34b4ea"/>
<path d="M3254 443 C3248 435 3240 431 3240 423 A14 14 0 1 1 3268 423 C3268 431 3260 435 3254 443 Z" fill="#3c9a50"/><circle cx="3254" cy="423" r="6" fill="#fff"/>
<path d="M3457 1658 C3451 1650 3443 1646 3443 1638 A14 14 0 1 1 3471 1638 C3471 1646 3463 1650 3457 1658 Z" fill="#3c9a50"/><circle cx="3457" cy="1638" r="6" fill="#fff"/>
<path d="M2913 1194 C2907 1186 2899 1182 2899 1174 A14 14 0 1 1 2927 1174 C2927 1182 2919 1186 2913 1194 Z" fill="#3aa2a8"/><circle cx="2913" cy="1174" r="6" fill="#fff"/>
<path d="M3338 889 C3332 881 3324 877 3324 869 A14 14 0 1 1 3352 869 C3352 877 3344 881 3338 889 Z" fill="#3aa2a8"/><circle cx="3338" cy="869" r="6" fill="#fff"/>
<path d="M2825 1310 C2819 1302 2811 1298 2811 1290 A14 14 0 1 1 2839 1290 C2839 1298 2831 1302 2825 1310 Z" fill="#7d929e"/><circle cx="2825" cy="1290" r="6" fill="#fff"/>
<circle cx="3676" cy="796" r="10" fill="#4a72b8"/>
<path d="M2699.5 1369 C2693.5 1357 2673.5 1343 2673.5 1325 A26 26 0 1 1 2725.5 1325 C2725.5 1343 2705.5 1357 2699.5 1369 Z" fill="#6469b5"/>
<g fill="none" stroke="#fff" stroke-width="2.4" stroke-linecap="round" stroke-linejoin="round"><circle cx="2699.5" cy="1310" r="4.5"/><path d="M2688 1311 L2694 1320 L2694 1338 L2705 1338 L2705 1320 L2711 1311 M2699.5 1328 V1338"/></g>
<text x="2649" y="1387" font-family="Liberation Sans" font-size="46" font-weight="700" fill="#000">A</text>
<path d="M3447 980.5 C3441 968.5 3421 954.5 3421 936.5 A26 26 0 1 1 3473 936.5 C3473 954.5 3453 968.5 3447 980.5 Z" fill="#6469b5"/>
<g fill="none" stroke="#fff" stroke-width="2.4" stroke-linecap="round" stroke-linejoin="round"><rect x="3434" y="924" width="26" height="26" rx="2"/><path d="M3434 931 H3460 M3440 919 V924 M3454 919 V924 M3441 939 L3446 944 L3453 936"/></g>
<text x="3398" y="998" font-family="Liberation Sans" font-size="46" font-weight="700" fill="#000">B</text>
<path d="M2475 2122 A12.5 12.5 0 0 1 2499 2122" stroke="#3b78e7" stroke-width="3.5" fill="none"/>
<defs><filter id="sh" x="-10%" y="-10%" width="120%" height="130%"><feDropShadow dx="0" dy="1" stdDeviation="1.5" flood-color="#000" flood-opacity="0.3"/></filter></defs>
<rect x="2480" y="222" width="382" height="80" rx="3" fill="#fff" filter="url(#sh)"/>
<rect x="2658" y="222" width="2" height="80" fill="#ececec"/>
<text x="2524" y="276" font-family="Liberation Sans" font-size="37" fill="#111" stroke="#111" stroke-width="0.9" textLength="86" lengthAdjust="spacingAndGlyphs">Karte</text>
<text x="2706" y="276" font-family="Liberation Sans" font-size="37" fill="#565656" textLength="111" lengthAdjust="spacingAndGlyphs">Satellit</text>
<rect x="2922" y="224" width="61" height="51" rx="4" fill="#fff" filter="url(#sh)"/>
<g fill="#000" stroke="#000" stroke-width="0.6" stroke-linejoin="round"><path d="M2941.2 233.8 L2942.8 233.8 L2934.2 264.6 L2929.6 264.6 Z M2962.6 233.8 L2964.2 233.8 L2976.8 264.6 L2972.2 264.6 Z M2952.2 239.6 H2953.8 L2954.2 243.8 H2951.8 Z M2951.8 247.8 H2954.2 L2954.6 253.5 H2951.4 Z M2951.1 257.3 H2954.9 L2955.3 265.6 H2950.7 Z"/><circle cx="2953" cy="234.8" r="1.1"/></g>
<rect x="3598" y="223" width="80" height="79" rx="3" fill="#fff" filter="url(#sh)"/>
<path d="M3619 254 V244 H3629 M3647 244 H3657 V254 M3657 271 V281 H3647 M3629 281 H3619 V271" fill="none" stroke="#666" stroke-width="3.5"/>
<rect x="3471.4" y="323.5" width="61.2" height="60.8" fill="#fff" stroke="#b4b4b4" stroke-width="2"/>
<rect x="3539.2" y="323.5" width="61.2" height="60.8" fill="#fff" stroke="#b4b4b4" stroke-width="2"/>
<rect x="3607.2" y="323.5" width="61.2" height="60.8" fill="#fff" stroke="#b4b4b4" stroke-width="2"/>
<path d="M3502.2 342 V366 M3490 354 H3514" stroke="#111" stroke-width="3.2"/>
<g fill="none" stroke="#111" stroke-width="2"><rect x="3555" y="341" width="30" height="26.5" rx="2.5"/><path d="M3555 342.5 H3585 M3555 350.5 H3585 M3555 358.8 H3585 M3565 341 V367.5 M3575 341 V367.5"/></g><rect x="3555" y="340" width="30" height="4" rx="2" fill="#111"/>
<g fill="none" stroke="#111" stroke-width="2"><circle cx="3637.8" cy="353.9" r="14.8"/><path d="M3645.6 346.4 L3641 357 L3630.2 361.4 L3634.6 350.8 Z" stroke-linejoin="round"/></g><circle cx="3637.8" cy="353.9" r="1.3" fill="#111"/>
<circle cx="3597" cy="461" r="48" fill="none" stroke="#d6d6d6" stroke-width="2"/>
<rect x="3598" y="1806" width="80" height="79" rx="3" fill="#fff" filter="url(#sh)"/>
<g stroke="#8d6b2c" stroke-width="1" stroke-linejoin="round"><circle cx="3637" cy="1826.5" r="10.5" fill="#f5b324"/><path d="M3628.5 1837 Q3637 1834 3645.5 1837 L3653.5 1858 L3649 1860.5 L3645.5 1852 L3645.5 1875 L3638.8 1875 L3638.8 1861 L3635.2 1861 L3635.2 1875 L3628.5 1875 L3628.5 1852 L3625 1860.5 L3620.5 1858 Z" fill="#f5b324"/></g><path d="M3631 1836.5 L3643 1836.5 L3637 1847 Z" fill="#e2782a"/>
<rect x="3598" y="1951" width="80" height="161" rx="3" fill="#fff" filter="url(#sh)"/>
<rect x="3610" y="2030" width="56" height="1.5" fill="#e6e6e6"/>
<path d="M3638 1972 V2008 M3620 1990 H3656" stroke="#666" stroke-width="7"/><path d="M3620 2072 H3656" stroke="#666" stroke-width="7"/>
</svg>
</body></html>
